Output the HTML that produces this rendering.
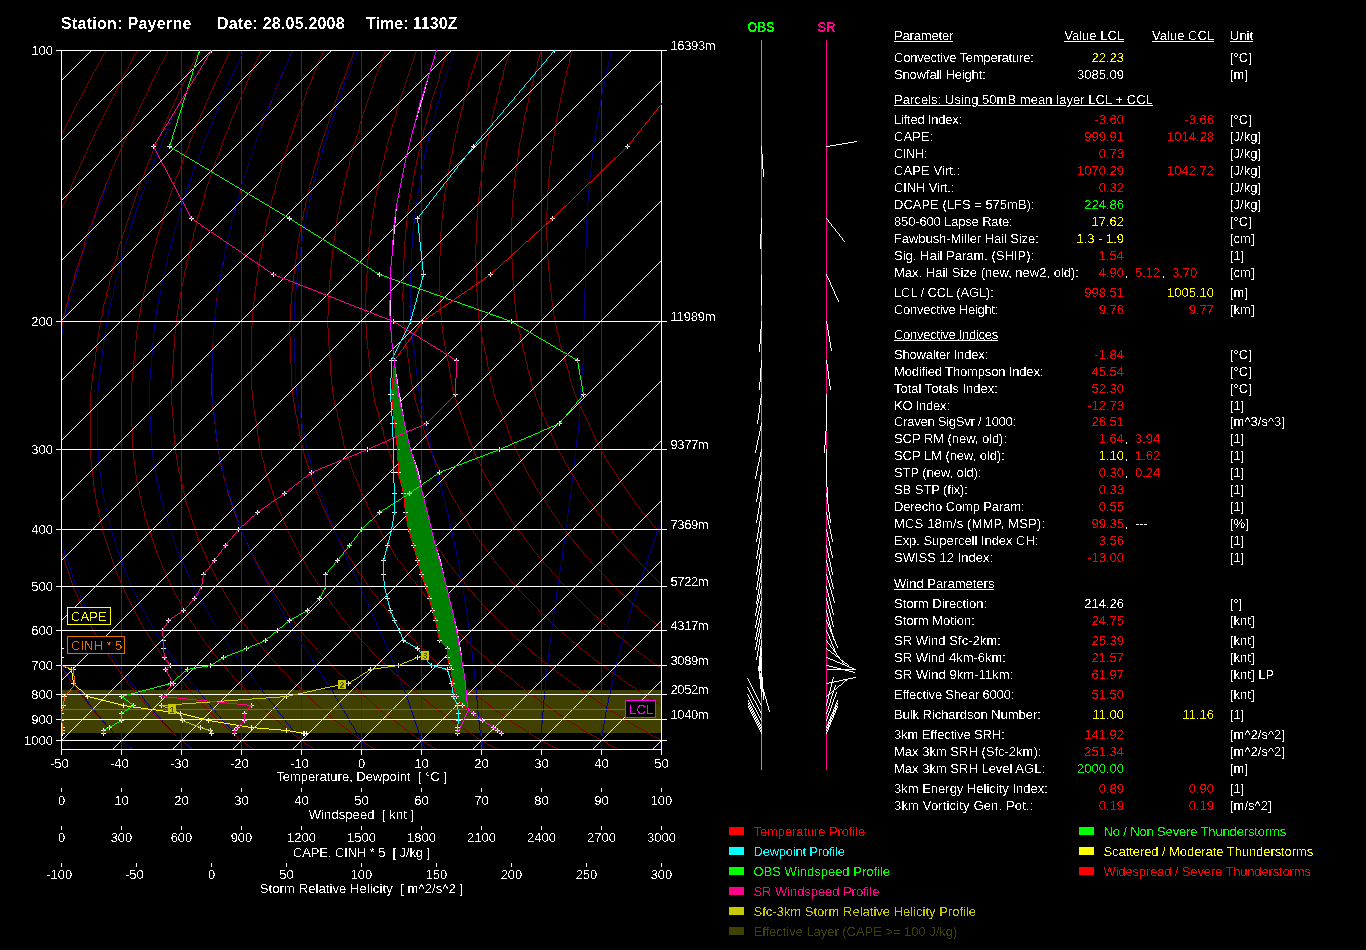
<!DOCTYPE html>
<html><head><meta charset="utf-8"><title>Sounding Payerne</title>
<style>
html,body{margin:0;padding:0;background:#000;}
body{width:1366px;height:950px;overflow:hidden;position:relative;}
svg{position:absolute;left:0;top:0;font-family:"Liberation Sans",sans-serif;font-size:13px;will-change:transform;}
</style></head><body>
<svg width="1366" height="950" viewBox="0 0 1366 950">
<defs><filter id="thr" x="0" y="0" width="100%" height="100%" filterUnits="userSpaceOnUse" color-interpolation-filters="sRGB"><feComponentTransfer><feFuncA type="discrete" tableValues="0 0 0 0 0 0 0 0 0 0 0 1 1 1 1 1 1 1 1 1"/></feComponentTransfer></filter></defs>
<defs><clipPath id="cp"><rect x="61" y="50" width="601" height="700"/></clipPath></defs>
<g clip-path="url(#cp)">
<rect x="61" y="690" width="601" height="43" fill="#404000" shape-rendering="crispEdges"/>
<line x1="121.5" y1="50.5" x2="121.5" y2="749.5" stroke="#005400" stroke-width="1" shape-rendering="crispEdges"/>
<line x1="181.5" y1="50.5" x2="181.5" y2="749.5" stroke="#005400" stroke-width="1" shape-rendering="crispEdges"/>
<line x1="241.5" y1="50.5" x2="241.5" y2="749.5" stroke="#005400" stroke-width="1" shape-rendering="crispEdges"/>
<line x1="301.5" y1="50.5" x2="301.5" y2="749.5" stroke="#005400" stroke-width="1" shape-rendering="crispEdges"/>
<line x1="361.5" y1="50.5" x2="361.5" y2="749.5" stroke="#005400" stroke-width="1" shape-rendering="crispEdges"/>
<line x1="421.5" y1="50.5" x2="421.5" y2="749.5" stroke="#005400" stroke-width="1" shape-rendering="crispEdges"/>
<line x1="481.5" y1="50.5" x2="481.5" y2="749.5" stroke="#005400" stroke-width="1" shape-rendering="crispEdges"/>
<line x1="541.5" y1="50.5" x2="541.5" y2="749.5" stroke="#005400" stroke-width="1" shape-rendering="crispEdges"/>
<line x1="601.5" y1="50.5" x2="601.5" y2="749.5" stroke="#005400" stroke-width="1" shape-rendering="crispEdges"/>
<path d="M61.5,134v2M61.5,740v1M62.5,132v2M62.5,741v1M63.5,130v2M63.5,742v1M64.5,128v2M64.5,743v1M65.5,126v2M65.5,744v1M66.5,124v2M66.5,745v1M67.5,122v2M67.5,746v1M68.5,120v2M68.5,747v1M69.5,118v2M69.5,747v1M70.5,116v2M70.5,748v1M71.5,114v2M71.5,749v1M72.5,112v2M73.5,110v2M74.5,108v2M75.5,106v2M76.5,104v2M77.5,102v2M78.5,101v1M79.5,99v2M80.5,97v2M81.5,95v2M82.5,93v2M83.5,91v2M84.5,89v2M85.5,87v2M86.5,85v2M87.5,83v2M88.5,81v2M89.5,80v1M90.5,78v2M91.5,76v2M92.5,74v2M93.5,72v2M94.5,71v1M95.5,69v2M96.5,67v2M97.5,65v2M98.5,63v2M99.5,62v1M100.5,60v2M101.5,58v2M102.5,56v2M103.5,54v2M104.5,53v1M105.5,51v2M106.5,50v1" stroke="#800000" shape-rendering="crispEdges"/>
<path d="M61.5,208v3M61.5,666v2M62.5,206v2M62.5,668v1M63.5,204v2M63.5,669v2M64.5,202v2M64.5,671v1M65.5,199v3M65.5,672v2M66.5,196v3M66.5,674v1M67.5,194v2M67.5,675v2M68.5,192v2M68.5,677v1M69.5,190v2M69.5,678v2M70.5,187v3M70.5,680v1M71.5,184v3M71.5,681v1M72.5,182v2M72.5,682v1M73.5,180v2M73.5,683v1M74.5,178v2M74.5,684v2M75.5,175v3M75.5,686v1M76.5,173v2M76.5,687v2M77.5,171v2M77.5,689v1M78.5,169v2M78.5,690v2M79.5,166v3M79.5,692v1M80.5,164v2M80.5,693v2M81.5,162v2M81.5,695v1M82.5,160v2M82.5,696v1M83.5,157v3M83.5,697v1M84.5,155v2M84.5,698v1M85.5,153v2M85.5,699v2M86.5,151v2M86.5,701v1M87.5,148v3M87.5,702v2M88.5,146v2M88.5,704v1M89.5,144v2M89.5,705v1M90.5,142v2M90.5,706v1M91.5,140v2M91.5,707v1M92.5,138v2M92.5,708v2M93.5,136v2M93.5,710v1M94.5,133v3M94.5,711v2M95.5,131v2M95.5,713v1M96.5,129v2M96.5,714v1M97.5,127v2M97.5,715v1M98.5,125v2M98.5,716v1M99.5,123v2M99.5,717v1M100.5,121v2M100.5,718v1M101.5,119v2M101.5,719v1M102.5,117v2M102.5,720v2M103.5,115v2M103.5,722v1M104.5,113v2M104.5,723v1M105.5,111v2M105.5,724v1M106.5,109v2M106.5,725v1M107.5,107v2M107.5,726v1M108.5,105v2M108.5,727v1M109.5,103v2M109.5,728v1M110.5,101v2M110.5,729v1M111.5,99v2M111.5,730v1M112.5,97v2M112.5,731v1M113.5,95v2M113.5,732v1M114.5,93v2M114.5,733v1M115.5,91v2M115.5,734v1M116.5,89v2M116.5,735v1M117.5,87v2M117.5,736v1M118.5,85v2M118.5,737v1M119.5,83v2M119.5,738v1M120.5,81v2M120.5,739v1M121.5,79v2M121.5,740v1M122.5,77v2M122.5,741v1M123.5,75v2M123.5,742v1M124.5,73v2M124.5,743v1M125.5,71v2M125.5,744v1M126.5,69v2M126.5,744v1M127.5,68v1M127.5,745v1M128.5,66v2M128.5,746v1M129.5,64v2M129.5,747v1M130.5,62v2M130.5,747v1M131.5,60v2M131.5,748v1M132.5,58v2M132.5,749v1M133.5,56v2M134.5,54v2M135.5,53v1M136.5,51v2M137.5,50v1" stroke="#800000" shape-rendering="crispEdges"/>
<path d="M61.5,325v6M61.5,547v6M62.5,319v6M62.5,553v3M63.5,316v3M63.5,556v3M64.5,313v3M64.5,559v3M65.5,307v6M65.5,562v3M66.5,304v3M66.5,565v3M67.5,301v3M67.5,568v3M68.5,295v6M68.5,571v3M69.5,292v3M69.5,574v3M70.5,289v3M70.5,577v3M71.5,286v3M71.5,580v3M72.5,283v3M72.5,583v3M73.5,280v3M73.5,586v3M74.5,274v6M74.5,589v2M75.5,271v3M75.5,591v2M76.5,268v3M76.5,593v2M77.5,265v3M77.5,595v3M78.5,262v3M78.5,598v3M79.5,259v3M79.5,601v2M80.5,256v3M80.5,603v2M81.5,253v3M81.5,605v2M82.5,250v3M82.5,607v3M83.5,247v3M83.5,610v2M84.5,241v6M84.5,612v2M85.5,238v3M85.5,614v2M86.5,235v3M86.5,616v2M87.5,232v3M87.5,618v2M88.5,229v3M88.5,620v2M89.5,227v2M89.5,622v2M90.5,225v2M90.5,624v2M91.5,223v2M91.5,626v2M92.5,220v3M92.5,628v2M93.5,217v3M93.5,630v2M94.5,214v3M94.5,632v1M95.5,211v3M95.5,633v2M96.5,208v3M96.5,635v2M97.5,205v3M97.5,637v2M98.5,202v3M98.5,639v2M99.5,199v3M99.5,641v1M100.5,197v2M100.5,642v2M101.5,195v2M101.5,644v1M102.5,193v2M102.5,645v2M103.5,190v3M103.5,647v1M104.5,187v3M104.5,648v2M105.5,184v3M105.5,650v1M106.5,182v2M106.5,651v2M107.5,180v2M107.5,653v1M108.5,178v2M108.5,654v2M109.5,175v3M109.5,656v1M110.5,172v3M110.5,657v2M111.5,169v3M111.5,659v1M112.5,167v2M112.5,660v2M113.5,165v2M113.5,662v1M114.5,163v2M114.5,663v2M115.5,160v3M115.5,665v1M116.5,158v2M116.5,666v2M117.5,156v2M117.5,668v1M118.5,154v2M118.5,669v2M119.5,151v3M119.5,671v1M120.5,149v2M120.5,672v2M121.5,147v2M121.5,674v1M122.5,145v2M122.5,675v2M123.5,142v3M123.5,677v1M124.5,140v2M124.5,678v1M125.5,138v2M125.5,679v1M126.5,136v2M126.5,680v1M127.5,133v3M127.5,681v2M128.5,131v2M128.5,683v1M129.5,129v2M129.5,684v2M130.5,127v2M130.5,686v1M131.5,124v3M131.5,687v1M132.5,122v2M132.5,688v1M133.5,120v2M133.5,689v1M134.5,118v2M134.5,690v2M135.5,116v2M135.5,692v1M136.5,114v2M136.5,693v1M137.5,112v2M137.5,694v1M138.5,109v3M138.5,695v1M139.5,107v2M139.5,696v2M140.5,105v2M140.5,698v1M141.5,103v2M141.5,699v1M142.5,101v2M142.5,700v1M143.5,99v2M143.5,701v1M144.5,97v2M144.5,702v2M145.5,95v2M145.5,704v1M146.5,93v2M146.5,705v1M147.5,91v2M147.5,706v1M148.5,88v3M148.5,707v1M149.5,86v2M149.5,708v2M150.5,84v2M150.5,710v1M151.5,82v2M151.5,711v1M152.5,80v2M152.5,712v1M153.5,78v2M153.5,713v1M154.5,76v2M154.5,714v1M155.5,74v2M155.5,715v1M156.5,72v2M156.5,716v1M157.5,70v2M157.5,717v1M158.5,68v2M158.5,718v1M159.5,66v2M159.5,719v1M160.5,65v1M160.5,720v1M161.5,63v2M161.5,721v1M162.5,61v2M162.5,722v1M163.5,59v2M163.5,723v1M164.5,57v2M164.5,724v1M165.5,55v2M165.5,725v1M166.5,53v2M166.5,726v1M167.5,51v2M167.5,727v1M168.5,50v1M168.5,728v1M169.5,729v1M170.5,730v1M171.5,731v1M172.5,732v1M173.5,733v1M174.5,734v1M175.5,735v1M176.5,735v1M177.5,736v1M178.5,737v1M179.5,738v1M180.5,739v1M181.5,740v1M182.5,741v1M183.5,741v1M184.5,742v1M185.5,743v1M186.5,744v1M187.5,744v1M188.5,745v1M189.5,746v1M190.5,747v1M191.5,748v1M192.5,749v1" stroke="#800000" shape-rendering="crispEdges"/>
<path d="M90.5,391v69M91.5,382v9M91.5,460v9M92.5,373v9M92.5,469v9M93.5,367v6M93.5,478v9M94.5,361v6M94.5,487v6M95.5,352v9M95.5,493v6M96.5,346v6M96.5,499v6M97.5,337v9M97.5,505v3M98.5,331v6M98.5,508v6M99.5,325v6M99.5,514v3M100.5,319v6M100.5,517v6M101.5,316v3M101.5,523v3M102.5,310v6M102.5,526v6M103.5,304v6M103.5,532v3M104.5,301v3M104.5,535v3M105.5,298v3M105.5,538v3M106.5,292v6M106.5,541v3M107.5,289v3M107.5,544v3M108.5,286v3M108.5,547v3M109.5,280v6M109.5,550v3M110.5,277v3M110.5,553v3M111.5,274v3M111.5,556v3M112.5,268v6M112.5,559v3M113.5,265v3M113.5,562v3M114.5,262v3M114.5,565v3M115.5,259v3M115.5,568v3M116.5,256v3M116.5,571v3M117.5,250v6M117.5,574v2M118.5,247v3M118.5,576v2M119.5,244v3M119.5,578v2M120.5,241v3M120.5,580v3M121.5,238v3M121.5,583v2M122.5,235v3M122.5,585v2M123.5,232v3M123.5,587v2M124.5,229v3M124.5,589v3M125.5,226v3M125.5,592v2M126.5,223v3M126.5,594v2M127.5,220v3M127.5,596v2M128.5,217v3M128.5,598v2M129.5,214v3M129.5,600v2M130.5,211v3M130.5,602v2M131.5,208v3M131.5,604v2M132.5,205v3M132.5,606v2M133.5,202v3M133.5,608v2M134.5,199v3M134.5,610v2M135.5,196v3M135.5,612v2M136.5,193v3M136.5,614v2M137.5,190v3M137.5,616v2M138.5,187v3M138.5,618v2M139.5,184v3M139.5,620v1M140.5,181v3M140.5,621v2M141.5,179v2M141.5,623v2M142.5,177v2M142.5,625v2M143.5,175v2M143.5,627v2M144.5,172v3M144.5,629v1M145.5,169v3M145.5,630v2M146.5,166v3M146.5,632v1M147.5,163v3M147.5,633v2M148.5,161v2M148.5,635v1M149.5,159v2M149.5,636v2M150.5,157v2M150.5,638v1M151.5,154v3M151.5,639v2M152.5,151v3M152.5,641v1M153.5,149v2M153.5,642v2M154.5,147v2M154.5,644v1M155.5,145v2M155.5,645v2M156.5,142v3M156.5,647v1M157.5,139v3M157.5,648v2M158.5,137v2M158.5,650v1M159.5,135v2M159.5,651v2M160.5,133v2M160.5,653v1M161.5,130v3M161.5,654v2M162.5,128v2M162.5,656v1M163.5,126v2M163.5,657v2M164.5,124v2M164.5,659v1M165.5,121v3M165.5,660v1M166.5,119v2M166.5,661v1M167.5,117v2M167.5,662v1M168.5,115v2M168.5,663v2M169.5,112v3M169.5,665v1M170.5,110v2M170.5,666v2M171.5,108v2M171.5,668v1M172.5,106v2M172.5,669v1M173.5,103v3M173.5,670v1M174.5,101v2M174.5,671v1M175.5,99v2M175.5,672v2M176.5,97v2M176.5,674v1M177.5,94v3M177.5,675v2M178.5,92v2M178.5,677v1M179.5,90v2M179.5,678v1M180.5,88v2M180.5,679v1M181.5,86v2M181.5,680v1M182.5,84v2M182.5,681v1M183.5,82v2M183.5,682v1M184.5,80v2M184.5,683v1M185.5,78v2M185.5,684v2M186.5,76v2M186.5,686v1M187.5,73v3M187.5,687v1M188.5,71v2M188.5,688v1M189.5,69v2M189.5,689v1M190.5,67v2M190.5,690v2M191.5,65v2M191.5,692v1M192.5,63v2M192.5,693v1M193.5,61v2M193.5,694v1M194.5,59v2M194.5,695v1M195.5,57v2M195.5,696v1M196.5,55v2M196.5,697v1M197.5,53v2M197.5,698v1M198.5,51v2M198.5,699v1M199.5,50v1M199.5,700v1M200.5,701v1M201.5,702v2M202.5,704v1M203.5,705v1M204.5,706v1M205.5,707v1M206.5,708v1M207.5,709v1M208.5,710v1M209.5,711v1M210.5,712v1M211.5,713v1M212.5,714v1M213.5,715v1M214.5,716v1M215.5,717v1M216.5,718v1M217.5,719v1M218.5,720v1M219.5,721v1M220.5,722v1M221.5,723v1M222.5,724v1M223.5,725v1M224.5,726v1M225.5,726v1M226.5,727v1M227.5,728v1M228.5,729v1M229.5,730v1M230.5,731v1M231.5,732v1M232.5,732v1M233.5,733v1M234.5,734v1M235.5,735v1M236.5,736v1M237.5,737v1M238.5,738v1M239.5,738v1M240.5,739v1M241.5,740v1M242.5,741v1M243.5,741v1M244.5,742v1M245.5,743v1M246.5,744v1M247.5,744v1M248.5,745v1M249.5,746v1M250.5,747v1M251.5,747v1M252.5,748v1M253.5,749v1" stroke="#800000" shape-rendering="crispEdges"/>
<path d="M131.5,382v45M132.5,370v12M132.5,427v24M133.5,361v9M133.5,451v9M134.5,352v9M134.5,460v6M135.5,340v12M135.5,466v9M136.5,331v9M136.5,475v6M137.5,325v6M137.5,481v6M138.5,319v6M138.5,487v3M139.5,313v6M139.5,490v6M140.5,307v6M140.5,496v3M141.5,301v6M141.5,499v6M142.5,298v3M142.5,505v3M143.5,292v6M143.5,508v3M144.5,289v3M144.5,511v6M145.5,283v6M145.5,517v3M146.5,280v3M146.5,520v3M147.5,274v6M147.5,523v3M148.5,271v3M148.5,526v3M149.5,268v3M149.5,529v3M150.5,262v6M150.5,532v3M151.5,259v3M151.5,535v3M152.5,253v6M152.5,538v3M153.5,250v3M153.5,541v3M154.5,247v3M154.5,544v3M155.5,244v3M155.5,547v3M156.5,238v6M156.5,550v3M157.5,235v3M157.5,553v3M158.5,232v3M158.5,556v2M159.5,229v3M159.5,558v2M160.5,226v3M160.5,560v2M161.5,223v3M161.5,562v3M162.5,217v6M162.5,565v3M163.5,214v3M163.5,568v2M164.5,211v3M164.5,570v2M165.5,208v3M165.5,572v2M166.5,205v3M166.5,574v3M167.5,202v3M167.5,577v2M168.5,199v3M168.5,579v2M169.5,196v3M169.5,581v2M170.5,193v3M170.5,583v2M171.5,190v3M171.5,585v2M172.5,187v3M172.5,587v2M173.5,184v3M173.5,589v2M174.5,181v3M174.5,591v2M175.5,178v3M175.5,593v2M176.5,176v2M176.5,595v2M177.5,174v2M177.5,597v2M178.5,172v2M178.5,599v1M179.5,169v3M179.5,600v2M180.5,166v3M180.5,602v2M181.5,163v3M181.5,604v2M182.5,160v3M182.5,606v2M183.5,157v3M183.5,608v1M184.5,154v3M184.5,609v2M185.5,152v2M185.5,611v1M186.5,150v2M186.5,612v2M187.5,148v2M187.5,614v2M188.5,145v3M188.5,616v2M189.5,142v3M189.5,618v2M190.5,139v3M190.5,620v1M191.5,137v2M191.5,621v2M192.5,135v2M192.5,623v1M193.5,133v2M193.5,624v2M194.5,130v3M194.5,626v1M195.5,127v3M195.5,627v2M196.5,124v3M196.5,629v1M197.5,122v2M197.5,630v2M198.5,120v2M198.5,632v1M199.5,118v2M199.5,633v2M200.5,115v3M200.5,635v1M201.5,113v2M201.5,636v2M202.5,111v2M202.5,638v1M203.5,109v2M203.5,639v2M204.5,106v3M204.5,641v1M205.5,103v3M205.5,642v2M206.5,101v2M206.5,644v1M207.5,99v2M207.5,645v1M208.5,97v2M208.5,646v1M209.5,94v3M209.5,647v1M210.5,92v2M210.5,648v2M211.5,90v2M211.5,650v1M212.5,88v2M212.5,651v2M213.5,85v3M213.5,653v1M214.5,83v2M214.5,654v1M215.5,81v2M215.5,655v1M216.5,79v2M216.5,656v1M217.5,77v2M217.5,657v2M218.5,75v2M218.5,659v1M219.5,73v2M219.5,660v1M220.5,70v3M220.5,661v1M221.5,68v2M221.5,662v1M222.5,66v2M222.5,663v2M223.5,64v2M223.5,665v1M224.5,62v2M224.5,666v1M225.5,60v2M225.5,667v1M226.5,58v2M226.5,668v1M227.5,55v3M227.5,669v2M228.5,53v2M228.5,671v1M229.5,51v2M229.5,672v1M230.5,50v1M230.5,673v1M231.5,674v1M232.5,675v2M233.5,677v1M234.5,678v1M235.5,679v1M236.5,680v1M237.5,681v1M238.5,682v1M239.5,683v1M240.5,684v1M241.5,685v1M242.5,686v1M243.5,687v1M244.5,688v1M245.5,689v1M246.5,690v1M247.5,691v1M248.5,692v1M249.5,693v2M250.5,695v1M251.5,696v1M252.5,697v1M253.5,698v1M254.5,699v1M255.5,700v1M256.5,701v1M257.5,702v1M258.5,703v1M259.5,704v1M260.5,705v1M261.5,706v1M262.5,707v1M263.5,708v1M264.5,709v1M265.5,710v1M266.5,711v1M267.5,711v1M268.5,712v1M269.5,713v1M270.5,714v1M271.5,715v1M272.5,716v1M273.5,717v1M274.5,718v1M275.5,719v1M276.5,720v1M277.5,720v1M278.5,721v1M279.5,722v1M280.5,723v1M281.5,724v1M282.5,725v1M283.5,726v1M284.5,726v1M285.5,727v1M286.5,728v1M287.5,729v1M288.5,730v1M289.5,731v1M290.5,732v1M291.5,732v1M292.5,733v1M293.5,734v1M294.5,735v1M295.5,735v1M296.5,736v1M297.5,737v1M298.5,738v1M299.5,738v1M300.5,739v1M301.5,740v1M302.5,741v1M303.5,741v1M304.5,742v1M305.5,743v1M306.5,744v1M307.5,744v1M308.5,745v1M309.5,745v1M310.5,746v1M311.5,747v1M312.5,747v1M313.5,748v1M314.5,749v1" stroke="#800000" shape-rendering="crispEdges"/>
<path d="M171.5,379v27M172.5,364v15M172.5,406v12M173.5,349v15M173.5,418v15M174.5,334v15M174.5,433v12M175.5,325v9M175.5,445v9M176.5,316v9M176.5,454v6M177.5,310v6M177.5,460v6M178.5,304v6M178.5,466v6M179.5,298v6M179.5,472v3M180.5,292v6M180.5,475v6M181.5,286v6M181.5,481v3M182.5,283v3M182.5,484v6M183.5,277v6M183.5,490v3M184.5,271v6M184.5,493v3M185.5,268v3M185.5,496v6M186.5,262v6M186.5,502v3M187.5,259v3M187.5,505v3M188.5,253v6M188.5,508v3M189.5,250v3M189.5,511v3M190.5,244v6M190.5,514v3M191.5,241v3M191.5,517v3M192.5,238v3M192.5,520v3M193.5,232v6M193.5,523v3M194.5,229v3M194.5,526v3M195.5,226v3M195.5,529v3M196.5,220v6M196.5,532v3M197.5,217v3M197.5,535v3M198.5,214v3M198.5,538v3M199.5,211v3M199.5,541v2M200.5,208v3M200.5,543v2M201.5,205v3M201.5,545v2M202.5,202v3M202.5,547v3M203.5,199v3M203.5,550v2M204.5,193v6M204.5,552v2M205.5,190v3M205.5,554v2M206.5,187v3M206.5,556v3M207.5,184v3M207.5,559v2M208.5,181v3M208.5,561v2M209.5,178v3M209.5,563v2M210.5,175v3M210.5,565v2M211.5,172v3M211.5,567v2M212.5,169v3M212.5,569v2M213.5,166v3M213.5,571v2M214.5,163v3M214.5,573v2M215.5,160v3M215.5,575v2M216.5,158v2M216.5,577v2M217.5,156v2M217.5,579v2M218.5,154v2M218.5,581v2M219.5,151v3M219.5,583v2M220.5,148v3M220.5,585v2M221.5,145v3M221.5,587v1M222.5,142v3M222.5,588v2M223.5,139v3M223.5,590v2M224.5,136v3M224.5,592v2M225.5,134v2M225.5,594v2M226.5,132v2M226.5,596v1M227.5,130v2M227.5,597v2M228.5,127v3M228.5,599v1M229.5,124v3M229.5,600v2M230.5,121v3M230.5,602v1M231.5,118v3M231.5,603v2M232.5,116v2M232.5,605v1M233.5,114v2M233.5,606v2M234.5,112v2M234.5,608v2M235.5,109v3M235.5,610v2M236.5,106v3M236.5,612v2M237.5,104v2M237.5,614v1M238.5,102v2M238.5,615v2M239.5,100v2M239.5,617v1M240.5,97v3M240.5,618v2M241.5,94v3M241.5,620v1M242.5,92v2M242.5,621v2M243.5,90v2M243.5,623v1M244.5,88v2M244.5,624v1M245.5,85v3M245.5,625v1M246.5,82v3M246.5,626v1M247.5,80v2M247.5,627v2M248.5,78v2M248.5,629v1M249.5,76v2M249.5,630v2M250.5,73v3M250.5,632v1M251.5,71v2M251.5,633v2M252.5,69v2M252.5,635v1M253.5,67v2M253.5,636v2M254.5,64v3M254.5,638v1M255.5,62v2M255.5,639v1M256.5,60v2M256.5,640v1M257.5,58v2M257.5,641v1M258.5,56v2M258.5,642v2M259.5,54v2M259.5,644v1M260.5,52v2M260.5,645v1M261.5,50v2M261.5,646v1M262.5,647v1M263.5,648v2M264.5,650v1M265.5,651v1M266.5,652v1M267.5,653v1M268.5,654v2M269.5,656v1M270.5,657v1M271.5,658v1M272.5,659v1M273.5,660v1M274.5,661v1M275.5,662v1M276.5,663v2M277.5,665v1M278.5,666v1M279.5,667v1M280.5,668v1M281.5,669v1M282.5,670v1M283.5,671v1M284.5,672v1M285.5,673v1M286.5,674v1M287.5,675v1M288.5,676v1M289.5,677v1M290.5,678v2M291.5,680v1M292.5,681v1M293.5,682v1M294.5,683v1M295.5,684v1M296.5,684v1M297.5,685v1M298.5,686v1M299.5,687v1M300.5,688v1M301.5,689v1M302.5,690v1M303.5,691v1M304.5,692v1M305.5,693v1M306.5,694v1M307.5,695v1M308.5,696v1M309.5,697v1M310.5,698v1M311.5,699v1M312.5,700v1M313.5,701v1M314.5,702v1M315.5,703v1M316.5,704v1M317.5,705v1M318.5,705v1M319.5,706v1M320.5,707v1M321.5,708v1M322.5,709v1M323.5,710v1M324.5,711v1M325.5,712v1M326.5,713v1M327.5,714v1M328.5,714v1M329.5,715v1M330.5,716v1M331.5,717v1M332.5,718v1M333.5,719v1M334.5,720v1M335.5,720v1M336.5,721v1M337.5,722v1M338.5,723v1M339.5,723v1M340.5,724v1M341.5,725v1M342.5,726v1M343.5,726v1M344.5,727v1M345.5,728v1M346.5,729v1M347.5,729v1M348.5,730v1M349.5,731v1M350.5,732v1M351.5,732v1M352.5,733v1M353.5,734v1M354.5,735v1M355.5,735v1M356.5,736v1M357.5,737v1M358.5,738v1M359.5,738v1M360.5,739v1M361.5,740v1M362.5,741v1M363.5,741v1M364.5,742v1M365.5,743v1M366.5,744v1M367.5,744v1M368.5,745v1M369.5,745v1M370.5,746v1M371.5,747v1M372.5,747v1M373.5,748v1M374.5,748v1M375.5,749v1" stroke="#800000" shape-rendering="crispEdges"/>
<path d="M211.5,373v24M212.5,343v30M212.5,397v12M213.5,325v18M213.5,409v6M214.5,316v9M214.5,415v9M215.5,307v9M215.5,424v9M216.5,298v9M216.5,433v9M217.5,292v6M217.5,442v6M218.5,286v6M218.5,448v6M219.5,280v6M219.5,454v6M220.5,274v6M220.5,460v6M221.5,268v6M221.5,466v3M222.5,265v3M222.5,469v3M223.5,259v6M223.5,472v6M224.5,253v6M224.5,478v3M225.5,247v6M225.5,481v3M226.5,244v3M226.5,484v3M227.5,238v6M227.5,487v6M228.5,235v3M228.5,493v3M229.5,229v6M229.5,496v3M230.5,226v3M230.5,499v3M231.5,220v6M231.5,502v3M232.5,217v3M232.5,505v3M233.5,214v3M233.5,508v3M234.5,211v3M234.5,511v3M235.5,205v6M235.5,514v3M236.5,202v3M236.5,517v2M237.5,199v3M237.5,519v2M238.5,196v3M238.5,521v2M239.5,193v3M239.5,523v3M240.5,187v6M240.5,526v3M241.5,184v3M241.5,529v3M242.5,181v3M242.5,532v2M243.5,178v3M243.5,534v2M244.5,175v3M244.5,536v2M245.5,172v3M245.5,538v3M246.5,169v3M246.5,541v2M247.5,166v3M247.5,543v2M248.5,163v3M248.5,545v2M249.5,160v3M249.5,547v2M250.5,157v3M250.5,549v2M251.5,154v3M251.5,551v2M252.5,151v3M252.5,553v2M253.5,148v3M253.5,555v2M254.5,145v3M254.5,557v2M255.5,142v3M255.5,559v2M256.5,139v3M256.5,561v2M257.5,136v3M257.5,563v2M258.5,133v3M258.5,565v2M259.5,130v3M259.5,567v2M260.5,128v2M260.5,569v1M261.5,126v2M261.5,570v2M262.5,124v2M262.5,572v2M263.5,121v3M263.5,574v2M264.5,118v3M264.5,576v2M265.5,115v3M265.5,578v1M266.5,112v3M266.5,579v2M267.5,109v3M267.5,581v1M268.5,107v2M268.5,582v2M269.5,105v2M269.5,584v2M270.5,103v2M270.5,586v2M271.5,100v3M271.5,588v2M272.5,97v3M272.5,590v1M273.5,94v3M273.5,591v2M274.5,91v3M274.5,593v1M275.5,89v2M275.5,594v2M276.5,87v2M276.5,596v1M277.5,85v2M277.5,597v2M278.5,82v3M278.5,599v1M279.5,79v3M279.5,600v2M280.5,77v2M280.5,602v1M281.5,75v2M281.5,603v2M282.5,73v2M282.5,605v1M283.5,70v3M283.5,606v2M284.5,67v3M284.5,608v1M285.5,65v2M285.5,609v2M286.5,63v2M286.5,611v1M287.5,61v2M287.5,612v2M288.5,58v3M288.5,614v1M289.5,56v2M289.5,615v2M290.5,54v2M290.5,617v1M291.5,52v2M291.5,618v1M292.5,50v2M292.5,619v1M293.5,620v1M294.5,621v2M295.5,623v1M296.5,624v2M297.5,626v1M298.5,627v1M299.5,628v1M300.5,629v1M301.5,630v2M302.5,632v1M303.5,633v2M304.5,635v1M305.5,636v1M306.5,637v1M307.5,638v1M308.5,639v2M309.5,641v1M310.5,642v1M311.5,643v1M312.5,644v1M313.5,645v1M314.5,646v1M315.5,647v1M316.5,648v2M317.5,650v1M318.5,651v1M319.5,652v1M320.5,653v1M321.5,654v1M322.5,655v1M323.5,656v1M324.5,657v1M325.5,658v1M326.5,659v1M327.5,660v1M328.5,661v1M329.5,662v1M330.5,663v2M331.5,665v1M332.5,666v1M333.5,667v1M334.5,668v1M335.5,669v1M336.5,670v1M337.5,671v1M338.5,672v1M339.5,673v1M340.5,674v1M341.5,675v1M342.5,675v1M343.5,676v1M344.5,677v1M345.5,678v1M346.5,679v1M347.5,680v1M348.5,681v1M349.5,682v1M350.5,683v1M351.5,684v1M352.5,685v1M353.5,686v1M354.5,687v1M355.5,687v1M356.5,688v1M357.5,689v1M358.5,690v1M359.5,691v1M360.5,692v1M361.5,693v1M362.5,694v1M363.5,695v1M364.5,696v1M365.5,696v1M366.5,697v1M367.5,698v1M368.5,699v1M369.5,700v1M370.5,701v1M371.5,702v1M372.5,703v1M373.5,704v1M374.5,705v1M375.5,705v1M376.5,706v1M377.5,707v1M378.5,708v1M379.5,709v1M380.5,710v1M381.5,711v1M382.5,711v1M383.5,712v1M384.5,713v1M385.5,714v1M386.5,714v1M387.5,715v1M388.5,716v1M389.5,717v1M390.5,717v1M391.5,718v1M392.5,719v1M393.5,720v1M394.5,720v1M395.5,721v1M396.5,722v1M397.5,723v1M398.5,723v1M399.5,724v1M400.5,725v1M401.5,726v1M402.5,726v1M403.5,727v1M404.5,728v1M405.5,729v1M406.5,729v1M407.5,730v1M408.5,731v1M409.5,732v1M410.5,732v1M411.5,733v1M412.5,734v1M413.5,735v1M414.5,735v1M415.5,736v1M416.5,737v1M417.5,738v1M418.5,738v1M419.5,739v1M420.5,739v1M421.5,740v1M422.5,741v1M423.5,741v1M424.5,742v1M425.5,742v1M426.5,743v1M427.5,744v1M428.5,744v1M429.5,745v1M430.5,745v1M431.5,746v1M432.5,747v1M433.5,747v1M434.5,748v1M435.5,748v1M436.5,749v1" stroke="#800000" shape-rendering="crispEdges"/>
<path d="M251.5,325v66M252.5,310v15M252.5,391v9M253.5,301v9M253.5,400v9M254.5,292v9M254.5,409v6M255.5,286v6M255.5,415v6M256.5,277v9M256.5,421v6M257.5,271v6M257.5,427v9M258.5,265v6M258.5,436v6M259.5,259v6M259.5,442v6M260.5,253v6M260.5,448v3M261.5,247v6M261.5,451v6M262.5,241v6M262.5,457v3M263.5,235v6M263.5,460v3M264.5,232v3M264.5,463v6M265.5,226v6M265.5,469v3M266.5,220v6M266.5,472v3M267.5,217v3M267.5,475v3M268.5,214v3M268.5,478v3M269.5,208v6M269.5,481v3M270.5,205v3M270.5,484v3M271.5,199v6M271.5,487v3M272.5,196v3M272.5,490v3M273.5,193v3M273.5,493v3M274.5,190v3M274.5,496v3M275.5,184v6M275.5,499v3M276.5,181v3M276.5,502v3M277.5,178v3M277.5,505v3M278.5,175v3M278.5,508v2M279.5,172v3M279.5,510v2M280.5,169v3M280.5,512v2M281.5,163v6M281.5,514v3M282.5,160v3M282.5,517v3M283.5,157v3M283.5,520v2M284.5,154v3M284.5,522v2M285.5,151v3M285.5,524v2M286.5,148v3M286.5,526v3M287.5,145v3M287.5,529v2M288.5,142v3M288.5,531v2M289.5,139v3M289.5,533v2M290.5,136v3M290.5,535v2M291.5,133v3M291.5,537v2M292.5,130v3M292.5,539v2M293.5,127v3M293.5,541v2M294.5,124v3M294.5,543v2M295.5,121v3M295.5,545v2M296.5,118v3M296.5,547v2M297.5,115v3M297.5,549v2M298.5,113v2M298.5,551v2M299.5,111v2M299.5,553v2M300.5,109v2M300.5,555v2M301.5,106v3M301.5,557v1M302.5,103v3M302.5,558v2M303.5,100v3M303.5,560v1M304.5,97v3M304.5,561v2M305.5,94v3M305.5,563v2M306.5,91v3M306.5,565v2M307.5,88v3M307.5,567v2M308.5,86v2M308.5,569v1M309.5,84v2M309.5,570v2M310.5,82v2M310.5,572v1M311.5,79v3M311.5,573v2M312.5,76v3M312.5,575v1M313.5,73v3M313.5,576v2M314.5,71v2M314.5,578v1M315.5,69v2M315.5,579v2M316.5,67v2M316.5,581v1M317.5,64v3M317.5,582v2M318.5,61v3M318.5,584v1M319.5,59v2M319.5,585v2M320.5,57v2M320.5,587v1M321.5,55v2M321.5,588v2M322.5,52v3M322.5,590v1M323.5,50v2M323.5,591v2M324.5,593v1M325.5,594v2M326.5,596v1M327.5,597v2M328.5,599v1M329.5,600v2M330.5,602v1M331.5,603v2M332.5,605v1M333.5,606v1M334.5,607v1M335.5,608v1M336.5,609v2M337.5,611v1M338.5,612v2M339.5,614v1M340.5,615v2M341.5,617v1M342.5,618v1M343.5,619v1M344.5,620v1M345.5,621v2M346.5,623v1M347.5,624v1M348.5,625v1M349.5,626v1M350.5,627v2M351.5,629v1M352.5,630v1M353.5,631v1M354.5,632v1M355.5,633v1M356.5,634v1M357.5,635v1M358.5,636v2M359.5,638v1M360.5,639v1M361.5,640v1M362.5,641v1M363.5,642v1M364.5,643v1M365.5,644v1M366.5,645v1M367.5,646v1M368.5,647v1M369.5,648v2M370.5,650v1M371.5,651v1M372.5,652v1M373.5,653v1M374.5,654v1M375.5,655v1M376.5,656v1M377.5,657v1M378.5,658v1M379.5,659v1M380.5,660v1M381.5,661v1M382.5,662v1M383.5,663v1M384.5,663v1M385.5,664v1M386.5,665v1M387.5,666v1M388.5,667v1M389.5,668v1M390.5,669v1M391.5,670v1M392.5,671v1M393.5,672v1M394.5,673v1M395.5,674v1M396.5,675v1M397.5,675v1M398.5,676v1M399.5,677v1M400.5,678v1M401.5,679v1M402.5,680v1M403.5,681v1M404.5,682v1M405.5,683v1M406.5,684v1M407.5,684v1M408.5,685v1M409.5,686v1M410.5,687v1M411.5,688v1M412.5,689v1M413.5,690v1M414.5,690v1M415.5,691v1M416.5,692v1M417.5,693v1M418.5,693v1M419.5,694v1M420.5,695v1M421.5,696v1M422.5,697v1M423.5,698v1M424.5,699v1M425.5,699v1M426.5,700v1M427.5,701v1M428.5,702v1M429.5,703v1M430.5,704v1M431.5,705v1M432.5,705v1M433.5,706v1M434.5,707v1M435.5,708v1M436.5,708v1M437.5,709v1M438.5,710v1M439.5,711v1M440.5,711v1M441.5,712v1M442.5,713v1M443.5,714v1M444.5,714v1M445.5,715v1M446.5,716v1M447.5,717v1M448.5,717v1M449.5,718v1M450.5,719v1M451.5,720v1M452.5,720v1M453.5,721v1M454.5,722v1M455.5,723v1M456.5,723v1M457.5,724v1M458.5,725v1M459.5,726v1M460.5,726v1M461.5,727v1M462.5,727v1M463.5,728v1M464.5,729v1M465.5,729v1M466.5,730v1M467.5,731v1M468.5,732v1M469.5,732v1M470.5,733v1M471.5,733v1M472.5,734v1M473.5,735v1M474.5,735v1M475.5,736v1M476.5,737v1M477.5,738v1M478.5,738v1M479.5,739v1M480.5,739v1M481.5,740v1M482.5,741v1M483.5,741v1M484.5,742v1M485.5,742v1M486.5,743v1M487.5,744v1M488.5,744v1M489.5,745v1M490.5,745v1M491.5,746v1M492.5,746v1M493.5,747v1M494.5,747v1M495.5,748v1M496.5,748v1M497.5,749v1" stroke="#800000" shape-rendering="crispEdges"/>
<path d="M289.5,322v15M290.5,304v18M290.5,337v27M291.5,292v12M291.5,364v24M292.5,283v9M292.5,388v9M293.5,274v9M293.5,397v6M294.5,265v9M294.5,403v6M295.5,259v6M295.5,409v6M296.5,250v9M296.5,415v3M297.5,244v6M297.5,418v6M298.5,238v6M298.5,424v6M299.5,232v6M299.5,430v6M300.5,226v6M300.5,436v3M301.5,220v6M301.5,439v6M302.5,217v3M302.5,445v3M303.5,211v6M303.5,448v6M304.5,208v3M304.5,454v3M305.5,202v6M305.5,457v3M306.5,199v3M306.5,460v3M307.5,193v6M307.5,463v3M308.5,190v3M308.5,466v3M309.5,184v6M309.5,469v3M310.5,181v3M310.5,472v3M311.5,178v3M311.5,475v3M312.5,175v3M312.5,478v3M313.5,169v6M313.5,481v3M314.5,166v3M314.5,484v3M315.5,163v3M315.5,487v3M316.5,160v3M316.5,490v3M317.5,157v3M317.5,493v2M318.5,151v6M318.5,495v2M319.5,148v3M319.5,497v2M320.5,145v3M320.5,499v3M321.5,142v3M321.5,502v3M322.5,139v3M322.5,505v2M323.5,136v3M323.5,507v2M324.5,133v3M324.5,509v2M325.5,130v3M325.5,511v3M326.5,127v3M326.5,514v2M327.5,124v3M327.5,516v2M328.5,121v3M328.5,518v2M329.5,118v3M329.5,520v2M330.5,115v3M330.5,522v2M331.5,112v3M331.5,524v2M332.5,109v3M332.5,526v2M333.5,106v3M333.5,528v2M334.5,103v3M334.5,530v2M335.5,100v3M335.5,532v2M336.5,97v3M336.5,534v2M337.5,94v3M337.5,536v2M338.5,91v3M338.5,538v2M339.5,88v3M339.5,540v2M340.5,85v3M340.5,542v1M341.5,83v2M341.5,543v2M342.5,81v2M342.5,545v2M343.5,79v2M343.5,547v2M344.5,76v3M344.5,549v2M345.5,73v3M345.5,551v1M346.5,70v3M346.5,552v2M347.5,67v3M347.5,554v1M348.5,64v3M348.5,555v2M349.5,62v2M349.5,557v1M350.5,60v2M350.5,558v2M351.5,58v2M351.5,560v1M352.5,55v3M352.5,561v2M353.5,52v3M353.5,563v1M354.5,50v2M354.5,564v2M355.5,566v2M356.5,568v2M357.5,570v2M358.5,572v1M359.5,573v1M360.5,574v1M361.5,575v1M362.5,576v2M363.5,578v1M364.5,579v2M365.5,581v1M366.5,582v2M367.5,584v1M368.5,585v2M369.5,587v1M370.5,588v2M371.5,590v1M372.5,591v2M373.5,593v1M374.5,594v1M375.5,595v1M376.5,596v1M377.5,597v2M378.5,599v1M379.5,600v2M380.5,602v1M381.5,603v1M382.5,604v1M383.5,605v1M384.5,606v2M385.5,608v1M386.5,609v2M387.5,611v1M388.5,612v1M389.5,613v1M390.5,614v1M391.5,615v2M392.5,617v1M393.5,618v1M394.5,619v1M395.5,620v1M396.5,621v1M397.5,622v1M398.5,623v1M399.5,624v2M400.5,626v1M401.5,627v1M402.5,628v1M403.5,629v1M404.5,630v1M405.5,631v1M406.5,632v1M407.5,633v1M408.5,634v1M409.5,635v1M410.5,636v1M411.5,637v1M412.5,638v1M413.5,639v1M414.5,640v1M415.5,641v1M416.5,642v2M417.5,644v1M418.5,645v1M419.5,645v1M420.5,646v1M421.5,647v1M422.5,648v1M423.5,649v1M424.5,650v1M425.5,651v1M426.5,652v1M427.5,653v1M428.5,654v1M429.5,655v1M430.5,656v1M431.5,657v1M432.5,658v1M433.5,659v1M434.5,660v1M435.5,661v1M436.5,662v1M437.5,663v1M438.5,663v1M439.5,664v1M440.5,665v1M441.5,666v1M442.5,667v1M443.5,668v1M444.5,669v1M445.5,669v1M446.5,670v1M447.5,671v1M448.5,672v1M449.5,673v1M450.5,674v1M451.5,675v1M452.5,675v1M453.5,676v1M454.5,677v1M455.5,678v1M456.5,679v1M457.5,680v1M458.5,681v1M459.5,681v1M460.5,682v1M461.5,683v1M462.5,684v1M463.5,684v1M464.5,685v1M465.5,686v1M466.5,687v1M467.5,688v1M468.5,689v1M469.5,690v1M470.5,690v1M471.5,691v1M472.5,692v1M473.5,693v1M474.5,693v1M475.5,694v1M476.5,695v1M477.5,696v1M478.5,696v1M479.5,697v1M480.5,698v1M481.5,699v1M482.5,699v1M483.5,700v1M484.5,701v1M485.5,702v1M486.5,702v1M487.5,703v1M488.5,704v1M489.5,705v1M490.5,706v1M491.5,707v1M492.5,708v1M493.5,708v1M494.5,709v1M495.5,710v1M496.5,711v1M497.5,711v1M498.5,712v1M499.5,712v1M500.5,713v1M501.5,714v1M502.5,714v1M503.5,715v1M504.5,716v1M505.5,717v1M506.5,717v1M507.5,718v1M508.5,719v1M509.5,720v1M510.5,720v1M511.5,721v1M512.5,722v1M513.5,723v1M514.5,723v1M515.5,724v1M516.5,724v1M517.5,725v1M518.5,726v1M519.5,726v1M520.5,727v1M521.5,727v1M522.5,728v1M523.5,729v1M524.5,729v1M525.5,730v1M526.5,731v1M527.5,732v1M528.5,732v1M529.5,733v1M530.5,733v1M531.5,734v1M532.5,735v1M533.5,735v1M534.5,736v1M535.5,736v1M536.5,737v1M537.5,738v1M538.5,738v1M539.5,739v1M540.5,739v1M541.5,740v1M542.5,741v1M543.5,741v1M544.5,742v1M545.5,742v1M546.5,743v1M547.5,743v1M548.5,744v1M549.5,744v1M550.5,745v1M551.5,745v1M552.5,746v1M553.5,746v1M554.5,747v1M555.5,747v1M556.5,748v1M557.5,748v1M558.5,749v1" stroke="#800000" shape-rendering="crispEdges"/>
<path d="M327.5,316v12M328.5,292v24M328.5,328v18M329.5,280v12M329.5,346v12M330.5,268v12M330.5,358v18M331.5,259v9M331.5,376v9M332.5,250v9M332.5,385v9M333.5,241v9M333.5,394v6M334.5,235v6M334.5,400v6M335.5,226v9M335.5,406v3M336.5,220v6M336.5,409v3M337.5,214v6M337.5,412v6M338.5,211v3M338.5,418v3M339.5,205v6M339.5,421v6M340.5,199v6M340.5,427v3M341.5,196v3M341.5,430v6M342.5,190v6M342.5,436v3M343.5,187v3M343.5,439v6M344.5,181v6M344.5,445v3M345.5,178v3M345.5,448v3M346.5,172v6M346.5,451v3M347.5,169v3M347.5,454v3M348.5,166v3M348.5,457v3M349.5,160v6M349.5,460v3M350.5,157v3M350.5,463v3M351.5,154v3M351.5,466v3M352.5,151v3M352.5,469v3M353.5,145v6M353.5,472v3M354.5,142v3M354.5,475v2M355.5,139v3M355.5,477v2M356.5,136v3M356.5,479v2M357.5,133v3M357.5,481v3M358.5,130v3M358.5,484v3M359.5,124v6M359.5,487v2M360.5,121v3M360.5,489v2M361.5,118v3M361.5,491v2M362.5,115v3M362.5,493v3M363.5,112v3M363.5,496v2M364.5,109v3M364.5,498v2M365.5,106v3M365.5,500v2M366.5,103v3M366.5,502v3M367.5,100v3M367.5,505v2M368.5,97v3M368.5,507v2M369.5,94v3M369.5,509v2M370.5,91v3M370.5,511v2M371.5,88v3M371.5,513v2M372.5,85v3M372.5,515v2M373.5,82v3M373.5,517v2M374.5,79v3M374.5,519v2M375.5,76v3M375.5,521v1M376.5,73v3M376.5,522v2M377.5,71v2M377.5,524v2M378.5,69v2M378.5,526v2M379.5,67v2M379.5,528v2M380.5,64v3M380.5,530v2M381.5,61v3M381.5,532v2M382.5,58v3M382.5,534v2M383.5,55v3M383.5,536v1M384.5,52v3M384.5,537v2M385.5,50v2M385.5,539v1M386.5,540v2M387.5,542v1M388.5,543v2M389.5,545v1M390.5,546v2M391.5,548v2M392.5,550v2M393.5,552v2M394.5,554v1M395.5,555v2M396.5,557v1M397.5,558v2M398.5,560v1M399.5,561v1M400.5,562v1M401.5,563v1M402.5,564v2M403.5,566v1M404.5,567v2M405.5,569v1M406.5,570v2M407.5,572v1M408.5,573v2M409.5,575v1M410.5,576v2M411.5,578v1M412.5,579v1M413.5,580v1M414.5,581v1M415.5,582v2M416.5,584v1M417.5,585v2M418.5,587v1M419.5,588v1M420.5,589v1M421.5,590v1M422.5,591v2M423.5,593v1M424.5,594v2M425.5,596v1M426.5,597v1M427.5,598v1M428.5,599v1M429.5,600v2M430.5,602v1M431.5,603v1M432.5,604v1M433.5,605v1M434.5,606v1M435.5,607v1M436.5,608v1M437.5,609v2M438.5,611v1M439.5,612v1M440.5,613v1M441.5,614v1M442.5,615v1M443.5,616v1M444.5,617v1M445.5,618v2M446.5,620v1M447.5,621v1M448.5,622v1M449.5,623v1M450.5,624v1M451.5,625v1M452.5,626v1M453.5,627v1M454.5,628v1M455.5,629v1M456.5,630v1M457.5,631v1M458.5,632v1M459.5,633v1M460.5,634v1M461.5,635v1M462.5,636v1M463.5,637v1M464.5,638v1M465.5,639v1M466.5,640v1M467.5,641v1M468.5,642v1M469.5,643v1M470.5,644v1M471.5,645v1M472.5,646v1M473.5,647v1M474.5,648v1M475.5,648v1M476.5,649v1M477.5,650v1M478.5,651v1M479.5,652v1M480.5,653v1M481.5,654v1M482.5,654v1M483.5,655v1M484.5,656v1M485.5,657v1M486.5,658v1M487.5,659v1M488.5,660v1M489.5,661v1M490.5,662v1M491.5,663v1M492.5,663v1M493.5,664v1M494.5,665v1M495.5,666v1M496.5,666v1M497.5,667v1M498.5,668v1M499.5,669v1M500.5,670v1M501.5,671v1M502.5,672v1M503.5,672v1M504.5,673v1M505.5,674v1M506.5,675v1M507.5,675v1M508.5,676v1M509.5,677v1M510.5,678v1M511.5,678v1M512.5,679v1M513.5,680v1M514.5,681v1M515.5,682v1M516.5,683v1M517.5,684v1M518.5,684v1M519.5,685v1M520.5,686v1M521.5,687v1M522.5,687v1M523.5,688v1M524.5,689v1M525.5,690v1M526.5,690v1M527.5,691v1M528.5,692v1M529.5,693v1M530.5,693v1M531.5,694v1M532.5,695v1M533.5,696v1M534.5,696v1M535.5,697v1M536.5,698v1M537.5,699v1M538.5,699v1M539.5,700v1M540.5,701v1M541.5,702v1M542.5,702v1M543.5,703v1M544.5,703v1M545.5,704v1M546.5,705v1M547.5,705v1M548.5,706v1M549.5,707v1M550.5,708v1M551.5,708v1M552.5,709v1M553.5,710v1M554.5,711v1M555.5,711v1M556.5,712v1M557.5,713v1M558.5,714v1M559.5,714v1M560.5,715v1M561.5,715v1M562.5,716v1M563.5,717v1M564.5,717v1M565.5,718v1M566.5,719v1M567.5,720v1M568.5,720v1M569.5,721v1M570.5,721v1M571.5,722v1M572.5,723v1M573.5,723v1M574.5,724v1M575.5,724v1M576.5,725v1M577.5,726v1M578.5,726v1M579.5,727v1M580.5,728v1M581.5,729v1M582.5,729v1M583.5,730v1M584.5,730v1M585.5,731v1M586.5,732v1M587.5,732v1M588.5,733v1M589.5,733v1M590.5,734v1M591.5,734v1M592.5,735v1M593.5,735v1M594.5,736v1M595.5,736v1M596.5,737v1M597.5,738v1M598.5,738v1M599.5,739v1M600.5,739v1M601.5,740v1M602.5,740v1M603.5,741v1M604.5,741v1M605.5,742v1M606.5,742v1M607.5,743v1M608.5,744v1M609.5,744v1M610.5,745v1M611.5,745v1M612.5,746v1M613.5,746v1M614.5,747v1M615.5,747v1M616.5,748v1M617.5,748v1M618.5,749v1" stroke="#800000" shape-rendering="crispEdges"/>
<path d="M365.5,292v33M366.5,274v18M366.5,325v15M367.5,259v15M367.5,340v9M368.5,247v12M368.5,349v9M369.5,235v12M369.5,358v9M370.5,229v6M370.5,367v12M371.5,220v9M371.5,379v6M372.5,214v6M372.5,385v6M373.5,208v6M373.5,391v6M374.5,202v6M374.5,397v6M375.5,196v6M375.5,403v3M376.5,190v6M376.5,406v3M377.5,187v3M377.5,409v3M378.5,181v6M378.5,412v6M379.5,175v6M379.5,418v3M380.5,172v3M380.5,421v3M381.5,166v6M381.5,424v3M382.5,163v3M382.5,427v3M383.5,160v3M383.5,430v6M384.5,154v6M384.5,436v3M385.5,151v3M385.5,439v3M386.5,145v6M386.5,442v3M387.5,142v3M387.5,445v3M388.5,139v3M388.5,448v3M389.5,136v3M389.5,451v3M390.5,130v6M390.5,454v3M391.5,127v3M391.5,457v3M392.5,124v3M392.5,460v3M393.5,121v3M393.5,463v3M394.5,118v3M394.5,466v2M395.5,115v3M395.5,468v2M396.5,109v6M396.5,470v2M397.5,106v3M397.5,472v3M398.5,103v3M398.5,475v3M399.5,100v3M399.5,478v2M400.5,97v3M400.5,480v2M401.5,94v3M401.5,482v2M402.5,91v3M402.5,484v3M403.5,88v3M403.5,487v2M404.5,85v3M404.5,489v2M405.5,82v3M405.5,491v2M406.5,79v3M406.5,493v2M407.5,76v3M407.5,495v2M408.5,73v3M408.5,497v2M409.5,70v3M409.5,499v2M410.5,67v3M410.5,501v2M411.5,64v3M411.5,503v2M412.5,61v3M412.5,505v2M413.5,58v3M413.5,507v2M414.5,55v3M414.5,509v1M415.5,52v3M415.5,510v2M416.5,50v2M416.5,512v2M417.5,514v2M418.5,516v2M419.5,518v1M420.5,519v2M421.5,521v2M422.5,523v2M423.5,525v2M424.5,527v1M425.5,528v2M426.5,530v1M427.5,531v2M428.5,533v1M429.5,534v2M430.5,536v1M431.5,537v2M432.5,539v1M433.5,540v2M434.5,542v1M435.5,543v2M436.5,545v1M437.5,546v2M438.5,548v1M439.5,549v2M440.5,551v1M441.5,552v2M442.5,554v1M443.5,555v2M444.5,557v1M445.5,558v2M446.5,560v1M447.5,561v2M448.5,563v1M449.5,564v1M450.5,565v1M451.5,566v1M452.5,567v2M453.5,569v1M454.5,570v2M455.5,572v1M456.5,573v1M457.5,574v1M458.5,575v1M459.5,576v2M460.5,578v1M461.5,579v1M462.5,580v1M463.5,581v1M464.5,582v2M465.5,584v1M466.5,585v2M467.5,587v1M468.5,588v1M469.5,589v1M470.5,590v1M471.5,591v1M472.5,592v1M473.5,593v1M474.5,594v2M475.5,596v1M476.5,597v1M477.5,598v1M478.5,599v1M479.5,600v1M480.5,601v1M481.5,602v1M482.5,603v2M483.5,605v1M484.5,606v1M485.5,607v1M486.5,608v1M487.5,609v1M488.5,610v1M489.5,611v1M490.5,612v1M491.5,613v1M492.5,614v1M493.5,615v1M494.5,616v1M495.5,617v1M496.5,618v1M497.5,619v1M498.5,620v1M499.5,621v1M500.5,622v1M501.5,623v1M502.5,624v1M503.5,625v1M504.5,626v1M505.5,627v1M506.5,628v1M507.5,629v1M508.5,630v1M509.5,631v1M510.5,632v1M511.5,633v1M512.5,634v1M513.5,635v1M514.5,636v1M515.5,637v1M516.5,638v1M517.5,639v1M518.5,639v1M519.5,640v1M520.5,641v1M521.5,642v1M522.5,643v1M523.5,644v1M524.5,645v1M525.5,646v1M526.5,647v1M527.5,648v1M528.5,648v1M529.5,649v1M530.5,650v1M531.5,651v1M532.5,652v1M533.5,653v1M534.5,654v1M535.5,654v1M536.5,655v1M537.5,656v1M538.5,657v1M539.5,657v1M540.5,658v1M541.5,659v1M542.5,660v1M543.5,661v1M544.5,662v1M545.5,663v1M546.5,663v1M547.5,664v1M548.5,665v1M549.5,666v1M550.5,666v1M551.5,667v1M552.5,668v1M553.5,669v1M554.5,669v1M555.5,670v1M556.5,671v1M557.5,672v1M558.5,672v1M559.5,673v1M560.5,674v1M561.5,675v1M562.5,675v1M563.5,676v1M564.5,677v1M565.5,678v1M566.5,678v1M567.5,679v1M568.5,680v1M569.5,681v1M570.5,681v1M571.5,682v1M572.5,683v1M573.5,684v1M574.5,684v1M575.5,685v1M576.5,686v1M577.5,687v1M578.5,687v1M579.5,688v1M580.5,689v1M581.5,690v1M582.5,690v1M583.5,691v1M584.5,692v1M585.5,693v1M586.5,693v1M587.5,694v1M588.5,694v1M589.5,695v1M590.5,696v1M591.5,696v1M592.5,697v1M593.5,698v1M594.5,699v1M595.5,699v1M596.5,700v1M597.5,701v1M598.5,702v1M599.5,702v1M600.5,703v1M601.5,703v1M602.5,704v1M603.5,705v1M604.5,705v1M605.5,706v1M606.5,707v1M607.5,708v1M608.5,708v1M609.5,709v1M610.5,710v1M611.5,711v1M612.5,711v1M613.5,712v1M614.5,712v1M615.5,713v1M616.5,714v1M617.5,714v1M618.5,715v1M619.5,715v1M620.5,716v1M621.5,717v1M622.5,717v1M623.5,718v1M624.5,718v1M625.5,719v1M626.5,720v1M627.5,720v1M628.5,721v1M629.5,722v1M630.5,723v1M631.5,723v1M632.5,724v1M633.5,724v1M634.5,725v1M635.5,726v1M636.5,726v1M637.5,727v1M638.5,727v1M639.5,728v1M640.5,728v1M641.5,729v1M642.5,729v1M643.5,730v1M644.5,730v1M645.5,731v1M646.5,732v1M647.5,732v1M648.5,733v1M649.5,733v1M650.5,734v1M651.5,735v1M652.5,735v1M653.5,736v1M654.5,736v1M655.5,737v1M656.5,737v1M657.5,738v1M658.5,738v1M659.5,739v1M660.5,739v1M661.5,740v1" stroke="#800000" shape-rendering="crispEdges"/>
<path d="M402.5,292v9M403.5,259v33M403.5,301v24M404.5,241v18M404.5,325v9M405.5,229v12M405.5,334v9M406.5,220v9M406.5,343v6M407.5,211v9M407.5,349v9M408.5,205v6M408.5,358v6M409.5,199v6M409.5,364v9M410.5,193v6M410.5,373v6M411.5,187v6M411.5,379v6M412.5,181v6M412.5,385v6M413.5,175v6M413.5,391v3M414.5,169v6M414.5,394v6M415.5,166v3M415.5,400v3M416.5,160v6M416.5,403v3M417.5,157v3M417.5,406v3M418.5,151v6M418.5,409v3M419.5,148v3M419.5,412v3M420.5,142v6M420.5,415v3M421.5,139v3M421.5,418v3M422.5,136v3M422.5,421v3M423.5,130v6M423.5,424v6M424.5,127v3M424.5,430v3M425.5,124v3M425.5,433v3M426.5,118v6M426.5,436v3M427.5,115v3M427.5,439v3M428.5,112v3M428.5,442v3M429.5,109v3M429.5,445v3M430.5,103v6M430.5,448v3M431.5,100v3M431.5,451v2M432.5,97v3M432.5,453v2M433.5,94v3M433.5,455v2M434.5,91v3M434.5,457v3M435.5,88v3M435.5,460v3M436.5,85v3M436.5,463v2M437.5,82v3M437.5,465v2M438.5,79v3M438.5,467v2M439.5,73v6M439.5,469v3M440.5,70v3M440.5,472v2M441.5,67v3M441.5,474v2M442.5,64v3M442.5,476v2M443.5,61v3M443.5,478v2M444.5,58v3M444.5,480v2M445.5,55v3M445.5,482v2M446.5,52v3M446.5,484v2M447.5,50v2M447.5,486v2M448.5,488v2M449.5,490v2M450.5,492v2M451.5,494v2M452.5,496v2M453.5,498v2M454.5,500v1M455.5,501v2M456.5,503v1M457.5,504v2M458.5,506v2M459.5,508v2M460.5,510v2M461.5,512v1M462.5,513v2M463.5,515v1M464.5,516v2M465.5,518v1M466.5,519v2M467.5,521v2M468.5,523v2M469.5,525v2M470.5,527v1M471.5,528v2M472.5,530v1M473.5,531v2M474.5,533v1M475.5,534v2M476.5,536v1M477.5,537v2M478.5,539v1M479.5,540v2M480.5,542v1M481.5,543v1M482.5,544v1M483.5,545v1M484.5,546v2M485.5,548v1M486.5,549v2M487.5,551v1M488.5,552v2M489.5,554v1M490.5,555v1M491.5,556v1M492.5,557v1M493.5,558v2M494.5,560v1M495.5,561v2M496.5,563v1M497.5,564v1M498.5,565v1M499.5,566v1M500.5,567v2M501.5,569v1M502.5,570v1M503.5,571v1M504.5,572v1M505.5,573v2M506.5,575v1M507.5,576v1M508.5,577v1M509.5,578v1M510.5,579v2M511.5,581v1M512.5,582v1M513.5,583v1M514.5,584v1M515.5,585v1M516.5,586v1M517.5,587v1M518.5,588v2M519.5,590v1M520.5,591v1M521.5,592v1M522.5,593v1M523.5,594v1M524.5,595v1M525.5,596v1M526.5,597v1M527.5,598v1M528.5,599v1M529.5,600v1M530.5,601v1M531.5,602v1M532.5,603v1M533.5,604v1M534.5,605v1M535.5,606v1M536.5,607v1M537.5,608v1M538.5,609v2M539.5,611v1M540.5,612v1M541.5,612v1M542.5,613v1M543.5,614v1M544.5,615v1M545.5,616v1M546.5,617v1M547.5,618v1M548.5,619v1M549.5,620v1M550.5,621v1M551.5,622v1M552.5,623v1M553.5,624v1M554.5,625v1M555.5,626v1M556.5,627v1M557.5,628v1M558.5,629v1M559.5,630v1M560.5,630v1M561.5,631v1M562.5,632v1M563.5,633v1M564.5,634v1M565.5,635v1M566.5,636v1M567.5,636v1M568.5,637v1M569.5,638v1M570.5,639v1M571.5,640v1M572.5,641v1M573.5,642v1M574.5,642v1M575.5,643v1M576.5,644v1M577.5,645v1M578.5,646v1M579.5,647v1M580.5,648v1M581.5,648v1M582.5,649v1M583.5,650v1M584.5,651v1M585.5,651v1M586.5,652v1M587.5,653v1M588.5,654v1M589.5,654v1M590.5,655v1M591.5,656v1M592.5,657v1M593.5,658v1M594.5,659v1M595.5,660v1M596.5,660v1M597.5,661v1M598.5,662v1M599.5,663v1M600.5,663v1M601.5,664v1M602.5,665v1M603.5,666v1M604.5,666v1M605.5,667v1M606.5,668v1M607.5,669v1M608.5,669v1M609.5,670v1M610.5,671v1M611.5,672v1M612.5,672v1M613.5,673v1M614.5,673v1M615.5,674v1M616.5,675v1M617.5,675v1M618.5,676v1M619.5,677v1M620.5,678v1M621.5,678v1M622.5,679v1M623.5,680v1M624.5,681v1M625.5,681v1M626.5,682v1M627.5,683v1M628.5,684v1M629.5,684v1M630.5,685v1M631.5,685v1M632.5,686v1M633.5,687v1M634.5,687v1M635.5,688v1M636.5,689v1M637.5,690v1M638.5,690v1M639.5,691v1M640.5,691v1M641.5,692v1M642.5,693v1M643.5,693v1M644.5,694v1M645.5,695v1M646.5,696v1M647.5,696v1M648.5,697v1M649.5,697v1M650.5,698v1M651.5,699v1M652.5,699v1M653.5,700v1M654.5,701v1M655.5,702v1M656.5,702v1M657.5,703v1M658.5,703v1M659.5,704v1M660.5,705v1M661.5,705v1" stroke="#800000" shape-rendering="crispEdges"/>
<path d="M439.5,256v36M440.5,232v24M440.5,292v24M441.5,220v12M441.5,316v9M442.5,211v9M442.5,325v9M443.5,202v9M443.5,334v6M444.5,193v9M444.5,340v6M445.5,187v6M445.5,346v6M446.5,181v6M446.5,352v6M447.5,175v6M447.5,358v3M448.5,169v6M448.5,361v6M449.5,163v6M449.5,367v6M450.5,157v6M450.5,373v6M451.5,154v3M451.5,379v6M452.5,148v6M452.5,385v6M453.5,142v6M453.5,391v3M454.5,139v3M454.5,394v3M455.5,133v6M455.5,397v3M456.5,130v3M456.5,400v3M457.5,124v6M457.5,403v3M458.5,121v3M458.5,406v3M459.5,118v3M459.5,409v3M460.5,112v6M460.5,412v3M461.5,109v3M461.5,415v3M462.5,106v3M462.5,418v3M463.5,100v6M463.5,421v3M464.5,97v3M464.5,424v3M465.5,94v3M465.5,427v3M466.5,91v3M466.5,430v3M467.5,88v3M467.5,433v3M468.5,82v6M468.5,436v3M469.5,79v3M469.5,439v3M470.5,76v3M470.5,442v2M471.5,73v3M471.5,444v2M472.5,70v3M472.5,446v2M473.5,67v3M473.5,448v3M474.5,64v3M474.5,451v3M475.5,61v3M475.5,454v2M476.5,58v3M476.5,456v2M477.5,55v3M477.5,458v2M478.5,52v3M478.5,460v2M479.5,50v2M479.5,462v2M480.5,464v2M481.5,466v3M482.5,469v2M483.5,471v2M484.5,473v2M485.5,475v2M486.5,477v2M487.5,479v1M488.5,480v2M489.5,482v2M490.5,484v2M491.5,486v2M492.5,488v1M493.5,489v2M494.5,491v2M495.5,493v2M496.5,495v2M497.5,497v1M498.5,498v2M499.5,500v1M500.5,501v2M501.5,503v1M502.5,504v2M503.5,506v2M504.5,508v2M505.5,510v2M506.5,512v1M507.5,513v2M508.5,515v1M509.5,516v2M510.5,518v1M511.5,519v2M512.5,521v1M513.5,522v2M514.5,524v1M515.5,525v2M516.5,527v1M517.5,528v2M518.5,530v1M519.5,531v1M520.5,532v1M521.5,533v1M522.5,534v2M523.5,536v1M524.5,537v2M525.5,539v1M526.5,540v2M527.5,542v1M528.5,543v1M529.5,544v1M530.5,545v1M531.5,546v2M532.5,548v1M533.5,549v2M534.5,551v1M535.5,552v1M536.5,553v1M537.5,554v1M538.5,555v2M539.5,557v1M540.5,558v1M541.5,559v1M542.5,560v1M543.5,561v2M544.5,563v1M545.5,564v1M546.5,565v1M547.5,566v1M548.5,567v1M549.5,568v1M550.5,569v1M551.5,570v2M552.5,572v1M553.5,573v1M554.5,574v1M555.5,575v1M556.5,576v1M557.5,577v1M558.5,578v1M559.5,579v2M560.5,581v1M561.5,582v1M562.5,583v1M563.5,584v1M564.5,585v1M565.5,586v1M566.5,587v1M567.5,588v1M568.5,589v1M569.5,590v1M570.5,591v1M571.5,592v1M572.5,593v1M573.5,594v1M574.5,595v1M575.5,596v1M576.5,597v1M577.5,598v1M578.5,599v1M579.5,600v1M580.5,601v1M581.5,602v1M582.5,603v1M583.5,604v1M584.5,605v1M585.5,606v1M586.5,607v1M587.5,608v1M588.5,609v1M589.5,610v1M590.5,611v1M591.5,612v1M592.5,613v1M593.5,614v1M594.5,615v1M595.5,615v1M596.5,616v1M597.5,617v1M598.5,618v1M599.5,619v1M600.5,620v1M601.5,621v1M602.5,622v1M603.5,623v1M604.5,624v1M605.5,624v1M606.5,625v1M607.5,626v1M608.5,627v1M609.5,628v1M610.5,629v1M611.5,630v1M612.5,630v1M613.5,631v1M614.5,632v1M615.5,633v1M616.5,634v1M617.5,635v1M618.5,636v1M619.5,636v1M620.5,637v1M621.5,638v1M622.5,639v1M623.5,639v1M624.5,640v1M625.5,641v1M626.5,642v1M627.5,642v1M628.5,643v1M629.5,644v1M630.5,645v1M631.5,646v1M632.5,647v1M633.5,648v1M634.5,648v1M635.5,649v1M636.5,650v1M637.5,651v1M638.5,651v1M639.5,652v1M640.5,653v1M641.5,654v1M642.5,654v1M643.5,655v1M644.5,656v1M645.5,657v1M646.5,657v1M647.5,658v1M648.5,659v1M649.5,660v1M650.5,660v1M651.5,661v1M652.5,662v1M653.5,663v1M654.5,663v1M655.5,664v1M656.5,664v1M657.5,665v1M658.5,666v1M659.5,666v1M660.5,667v1M661.5,668v1" stroke="#800000" shape-rendering="crispEdges"/>
<path d="M475.5,244v18M476.5,220v24M476.5,262v30M477.5,205v15M477.5,292v15M478.5,196v9M478.5,307v12M479.5,187v9M479.5,319v6M480.5,181v6M480.5,325v6M481.5,172v9M481.5,331v6M482.5,166v6M482.5,337v6M483.5,160v6M483.5,343v3M484.5,154v6M484.5,346v6M485.5,148v6M485.5,352v3M486.5,142v6M486.5,355v6M487.5,139v3M487.5,361v6M488.5,133v6M488.5,367v3M489.5,127v6M489.5,370v6M490.5,124v3M490.5,376v6M491.5,118v6M491.5,382v3M492.5,115v3M492.5,385v3M493.5,109v6M493.5,388v6M494.5,106v3M494.5,394v3M495.5,103v3M495.5,397v3M496.5,97v6M496.5,400v3M497.5,94v3M497.5,403v2M498.5,91v3M498.5,405v2M499.5,85v6M499.5,407v2M500.5,82v3M500.5,409v3M501.5,79v3M501.5,412v3M502.5,76v3M502.5,415v3M503.5,70v6M503.5,418v2M504.5,67v3M504.5,420v2M505.5,64v3M505.5,422v2M506.5,61v3M506.5,424v3M507.5,58v3M507.5,427v3M508.5,55v3M508.5,430v3M509.5,52v3M509.5,433v3M510.5,50v2M510.5,436v3M511.5,439v2M512.5,441v2M513.5,443v2M514.5,445v3M515.5,448v2M516.5,450v2M517.5,452v2M518.5,454v2M519.5,456v2M520.5,458v2M521.5,460v2M522.5,462v2M523.5,464v2M524.5,466v2M525.5,468v2M526.5,470v2M527.5,472v2M528.5,474v2M529.5,476v1M530.5,477v2M531.5,479v1M532.5,480v2M533.5,482v2M534.5,484v2M535.5,486v2M536.5,488v1M537.5,489v2M538.5,491v1M539.5,492v2M540.5,494v1M541.5,495v2M542.5,497v1M543.5,498v2M544.5,500v1M545.5,501v2M546.5,503v1M547.5,504v2M548.5,506v1M549.5,507v2M550.5,509v1M551.5,510v2M552.5,512v1M553.5,513v2M554.5,515v1M555.5,516v2M556.5,518v1M557.5,519v2M558.5,521v1M559.5,522v2M560.5,524v1M561.5,525v2M562.5,527v1M563.5,528v1M564.5,529v1M565.5,530v1M566.5,531v2M567.5,533v1M568.5,534v2M569.5,536v1M570.5,537v1M571.5,538v1M572.5,539v1M573.5,540v2M574.5,542v1M575.5,543v1M576.5,544v1M577.5,545v1M578.5,546v2M579.5,548v1M580.5,549v1M581.5,550v1M582.5,551v1M583.5,552v2M584.5,554v1M585.5,555v1M586.5,556v1M587.5,557v1M588.5,558v1M589.5,559v1M590.5,560v1M591.5,561v2M592.5,563v1M593.5,564v1M594.5,565v1M595.5,566v1M596.5,567v1M597.5,568v1M598.5,569v1M599.5,570v1M600.5,571v1M601.5,572v1M602.5,573v1M603.5,574v1M604.5,575v1M605.5,576v2M606.5,578v1M607.5,579v1M608.5,580v1M609.5,581v1M610.5,582v1M611.5,583v1M612.5,584v1M613.5,585v1M614.5,586v1M615.5,587v1M616.5,588v1M617.5,589v1M618.5,590v1M619.5,591v1M620.5,592v1M621.5,593v1M622.5,594v1M623.5,594v1M624.5,595v1M625.5,596v1M626.5,597v1M627.5,598v1M628.5,599v1M629.5,600v1M630.5,601v1M631.5,602v1M632.5,603v1M633.5,604v1M634.5,605v1M635.5,606v1M636.5,606v1M637.5,607v1M638.5,608v1M639.5,609v1M640.5,610v1M641.5,611v1M642.5,612v1M643.5,613v1M644.5,614v1M645.5,615v1M646.5,615v1M647.5,616v1M648.5,617v1M649.5,618v1M650.5,619v1M651.5,620v1M652.5,621v1M653.5,621v1M654.5,622v1M655.5,623v1M656.5,624v1M657.5,625v1M658.5,626v1M659.5,627v1M660.5,627v1M661.5,628v1" stroke="#800000" shape-rendering="crispEdges"/>
<path d="M511.5,217v42M512.5,199v18M512.5,259v21M513.5,190v9M513.5,280v12M514.5,178v12M514.5,292v12M515.5,169v9M515.5,304v9M516.5,163v6M516.5,313v6M517.5,157v6M517.5,319v6M518.5,148v9M518.5,325v6M519.5,142v6M519.5,331v3M520.5,139v3M520.5,334v6M521.5,133v6M521.5,340v3M522.5,127v6M522.5,343v6M523.5,121v6M523.5,349v3M524.5,115v6M524.5,352v3M525.5,112v3M525.5,355v6M526.5,106v6M526.5,361v3M527.5,103v3M527.5,364v6M528.5,97v6M528.5,370v3M529.5,94v3M529.5,373v3M530.5,88v6M530.5,376v6M531.5,85v3M531.5,382v3M532.5,82v3M532.5,385v3M533.5,76v6M533.5,388v3M534.5,73v3M534.5,391v3M535.5,70v3M535.5,394v3M536.5,67v3M536.5,397v3M537.5,61v6M537.5,400v3M538.5,58v3M538.5,403v3M539.5,55v3M539.5,406v2M540.5,52v3M540.5,408v2M541.5,50v2M541.5,410v2M542.5,412v3M543.5,415v2M544.5,417v2M545.5,419v2M546.5,421v3M547.5,424v2M548.5,426v2M549.5,428v2M550.5,430v3M551.5,433v3M552.5,436v2M553.5,438v2M554.5,440v2M555.5,442v3M556.5,445v2M557.5,447v2M558.5,449v2M559.5,451v2M560.5,453v2M561.5,455v1M562.5,456v2M563.5,458v2M564.5,460v2M565.5,462v2M566.5,464v1M567.5,465v2M568.5,467v2M569.5,469v2M570.5,471v2M571.5,473v1M572.5,474v2M573.5,476v1M574.5,477v2M575.5,479v1M576.5,480v2M577.5,482v2M578.5,484v2M579.5,486v2M580.5,488v1M581.5,489v2M582.5,491v1M583.5,492v2M584.5,494v1M585.5,495v2M586.5,497v1M587.5,498v2M588.5,500v1M589.5,501v1M590.5,502v1M591.5,503v1M592.5,504v2M593.5,506v1M594.5,507v2M595.5,509v1M596.5,510v2M597.5,512v1M598.5,513v2M599.5,515v1M600.5,516v1M601.5,517v1M602.5,518v1M603.5,519v2M604.5,521v1M605.5,522v2M606.5,524v1M607.5,525v1M608.5,526v1M609.5,527v1M610.5,528v2M611.5,530v1M612.5,531v2M613.5,533v1M614.5,534v1M615.5,535v1M616.5,536v1M617.5,537v2M618.5,539v1M619.5,540v1M620.5,541v1M621.5,542v1M622.5,543v1M623.5,544v1M624.5,545v1M625.5,546v2M626.5,548v1M627.5,549v1M628.5,550v1M629.5,551v1M630.5,552v1M631.5,553v1M632.5,554v1M633.5,555v1M634.5,556v1M635.5,557v1M636.5,558v2M637.5,560v1M638.5,561v1M639.5,562v1M640.5,563v1M641.5,564v1M642.5,565v1M643.5,566v1M644.5,567v1M645.5,568v1M646.5,569v1M647.5,570v1M648.5,571v1M649.5,572v1M650.5,573v1M651.5,574v1M652.5,575v1M653.5,576v1M654.5,577v1M655.5,578v1M656.5,579v1M657.5,580v1M658.5,581v1M659.5,582v1M660.5,583v1M661.5,584v1" stroke="#800000" shape-rendering="crispEdges"/>
<path d="M546.5,211v30M547.5,190v21M547.5,241v18M548.5,178v12M548.5,259v12M549.5,166v12M549.5,271v12M550.5,160v6M550.5,283v9M551.5,151v9M551.5,292v9M552.5,145v6M552.5,301v6M553.5,136v9M553.5,307v9M554.5,130v6M554.5,316v3M555.5,124v6M555.5,319v6M556.5,118v6M556.5,325v6M557.5,112v6M557.5,331v3M558.5,109v3M558.5,334v3M559.5,103v6M559.5,337v6M560.5,97v6M560.5,343v3M561.5,94v3M561.5,346v3M562.5,88v6M562.5,349v3M563.5,85v3M563.5,352v3M564.5,79v6M564.5,355v6M565.5,76v3M565.5,361v3M566.5,70v6M566.5,364v3M567.5,67v3M567.5,367v3M568.5,64v3M568.5,370v3M569.5,58v6M569.5,373v6M570.5,55v3M570.5,379v3M571.5,52v3M571.5,382v3M572.5,50v2M572.5,385v3M573.5,388v3M574.5,391v3M575.5,394v3M576.5,397v2M577.5,399v2M578.5,401v2M579.5,403v3M580.5,406v2M581.5,408v2M582.5,410v2M583.5,412v2M584.5,414v2M585.5,416v2M586.5,418v2M587.5,420v2M588.5,422v2M589.5,424v3M590.5,427v2M591.5,429v2M592.5,431v2M593.5,433v3M594.5,436v2M595.5,438v2M596.5,440v2M597.5,442v2M598.5,444v2M599.5,446v2M600.5,448v2M601.5,450v2M602.5,452v1M603.5,453v2M604.5,455v2M605.5,457v2M606.5,459v2M607.5,461v1M608.5,462v2M609.5,464v1M610.5,465v2M611.5,467v1M612.5,468v2M613.5,470v1M614.5,471v2M615.5,473v1M616.5,474v2M617.5,476v1M618.5,477v2M619.5,479v1M620.5,480v2M621.5,482v1M622.5,483v2M623.5,485v1M624.5,486v2M625.5,488v1M626.5,489v2M627.5,491v1M628.5,492v2M629.5,494v1M630.5,495v2M631.5,497v1M632.5,498v2M633.5,500v1M634.5,501v2M635.5,503v1M636.5,504v1M637.5,505v1M638.5,506v1M639.5,507v2M640.5,509v1M641.5,510v2M642.5,512v1M643.5,513v1M644.5,514v1M645.5,515v1M646.5,516v2M647.5,518v1M648.5,519v1M649.5,520v1M650.5,521v1M651.5,522v2M652.5,524v1M653.5,525v1M654.5,526v1M655.5,527v1M656.5,528v2M657.5,530v1M658.5,531v1M659.5,532v1M660.5,533v1M661.5,534v2" stroke="#800000" shape-rendering="crispEdges"/>
<path d="M61,740.5h1M62,741.5h1M63,742.5h1M64,743.5h1M65,744.5h1M66,745.5h1M67,746.5h1M68,747.5h2M70,748.5h1M71,749.5h1" stroke="#000080" shape-rendering="crispEdges"/>
<path d="M61.5,664v2M62.5,666v2M63.5,668v1M64.5,669v2M65.5,671v1M66.5,672v2M67.5,674v1M68.5,675v2M69.5,677v1M70.5,678v2M71.5,680v1M72.5,681v1M73.5,682v1M74.5,683v1M75.5,684v2M76.5,686v1M77.5,687v2M78.5,689v1M79.5,690v2M80.5,692v1M81.5,693v2M82.5,695v1M83.5,696v1M84.5,697v1M85.5,698v1M86.5,699v2M87.5,701v1M88.5,702v2M89.5,704v1M90.5,705v2M91.5,707v1M92.5,708v1M93.5,709v1M94.5,710v1M95.5,711v2M96.5,713v1M97.5,714v1M98.5,715v1M99.5,716v1M100.5,717v2M101.5,719v1M102.5,720v1M103.5,721v1M104.5,722v1M105.5,723v2M106.5,725v1M107.5,726v1M108.5,727v1M109.5,728v1M110.5,729v1M111.5,730v1M112.5,731v1M113.5,732v1M114.5,733v1M115.5,734v1M116.5,735v1M117.5,736v1M118.5,737v1M119.5,738v1M120.5,739v1M121.5,740v1M122.5,741v1M123.5,742v1M124.5,743v1M125.5,744v1M126.5,744v1M127.5,745v1M128.5,746v1M129.5,747v1M130.5,748v1M131.5,749v1" stroke="#000080" shape-rendering="crispEdges"/>
<path d="M61.5,334v6M61.5,538v3M62.5,328v6M62.5,541v3M63.5,322v6M63.5,544v6M64.5,319v3M64.5,550v3M65.5,316v3M65.5,553v3M66.5,310v6M66.5,556v3M67.5,307v3M67.5,559v3M68.5,301v6M68.5,562v3M69.5,298v3M69.5,565v3M70.5,295v3M70.5,568v3M71.5,292v3M71.5,571v3M72.5,289v3M72.5,574v3M73.5,283v6M73.5,577v3M74.5,280v3M74.5,580v3M75.5,277v3M75.5,583v3M76.5,274v3M76.5,586v2M77.5,271v3M77.5,588v2M78.5,268v3M78.5,590v2M79.5,262v6M79.5,592v3M80.5,259v3M80.5,595v3M81.5,256v3M81.5,598v2M82.5,253v3M82.5,600v2M83.5,250v3M83.5,602v2M84.5,247v3M84.5,604v3M85.5,244v3M85.5,607v2M86.5,241v3M86.5,609v2M87.5,238v3M87.5,611v2M88.5,235v3M88.5,613v2M89.5,232v3M89.5,615v2M90.5,229v3M90.5,617v2M91.5,226v3M91.5,619v2M92.5,223v3M92.5,621v2M93.5,220v3M93.5,623v2M94.5,217v3M94.5,625v2M95.5,214v3M95.5,627v2M96.5,211v3M96.5,629v2M97.5,208v3M97.5,631v2M98.5,205v3M98.5,633v2M99.5,203v2M99.5,635v1M100.5,201v2M100.5,636v2M101.5,199v2M101.5,638v1M102.5,196v3M102.5,639v2M103.5,193v3M103.5,641v2M104.5,190v3M104.5,643v2M105.5,187v3M105.5,645v2M106.5,185v2M106.5,647v1M107.5,183v2M107.5,648v2M108.5,182v1M108.5,650v1M109.5,651v2M110.5,653v1M111.5,654v2M112.5,656v1M113.5,657v2M114.5,659v1M115.5,660v2M116.5,662v1M117.5,663v2M118.5,665v1M119.5,666v2M120.5,668v1M121.5,669v2M122.5,671v1M123.5,672v1M124.5,673v1M125.5,674v1M126.5,675v2M127.5,677v1M128.5,678v2M129.5,680v1M130.5,681v2M131.5,683v1M132.5,684v1M133.5,685v1M134.5,686v1M135.5,687v2M136.5,689v1M137.5,690v2M138.5,692v1M139.5,693v1M140.5,694v1M141.5,695v1M142.5,696v2M143.5,698v1M144.5,699v2M145.5,701v1M146.5,702v1M147.5,703v1M148.5,704v1M149.5,705v2M150.5,707v1M151.5,708v1M152.5,709v1M153.5,710v1M154.5,711v2M155.5,713v1M156.5,714v1M157.5,715v1M158.5,716v1M159.5,717v1M160.5,718v1M161.5,719v1M162.5,720v2M163.5,722v1M164.5,723v1M165.5,724v1M166.5,725v1M167.5,726v1M168.5,727v1M169.5,728v1M170.5,729v1M171.5,730v1M172.5,731v1M173.5,732v1M174.5,733v1M175.5,734v1M176.5,735v1M177.5,736v1M178.5,737v1M179.5,738v1M180.5,739v1M181.5,740v1M182.5,741v1M183.5,742v1M184.5,743v1M185.5,744v1M186.5,744v1M187.5,745v1M188.5,746v1M189.5,747v1M190.5,748v1M191.5,749v1" stroke="#000080" shape-rendering="crispEdges"/>
<path d="M97.5,391v57M98.5,382v9M98.5,448v15M99.5,373v9M99.5,463v9M100.5,364v9M100.5,472v6M101.5,358v6M101.5,478v9M102.5,349v9M102.5,487v6M103.5,340v9M103.5,493v6M104.5,334v6M104.5,499v3M105.5,328v6M105.5,502v6M106.5,322v6M106.5,508v3M107.5,316v6M107.5,511v6M108.5,310v6M108.5,517v3M109.5,307v3M109.5,520v6M110.5,301v6M110.5,526v3M111.5,298v3M111.5,529v3M112.5,295v3M112.5,532v3M113.5,289v6M113.5,535v3M114.5,286v3M114.5,538v3M115.5,280v6M115.5,541v6M116.5,277v3M116.5,547v3M117.5,274v3M117.5,550v2M118.5,271v3M118.5,552v2M119.5,265v6M119.5,554v2M120.5,262v3M120.5,556v3M121.5,259v3M121.5,559v3M122.5,256v3M122.5,562v3M123.5,250v6M123.5,565v3M124.5,247v3M124.5,568v3M125.5,244v3M125.5,571v2M126.5,241v3M126.5,573v2M127.5,238v3M127.5,575v2M128.5,235v3M128.5,577v3M129.5,229v6M129.5,580v3M130.5,226v3M130.5,583v2M131.5,223v3M131.5,585v2M132.5,220v3M132.5,587v2M133.5,217v3M133.5,589v2M134.5,214v3M134.5,591v2M135.5,211v3M135.5,593v2M136.5,208v3M136.5,595v3M137.5,205v3M137.5,598v2M138.5,202v3M138.5,600v2M139.5,199v3M139.5,602v2M140.5,196v3M140.5,604v2M141.5,194v2M141.5,606v2M142.5,192v2M142.5,608v1M143.5,190v2M143.5,609v2M144.5,187v3M144.5,611v2M145.5,184v3M145.5,613v2M146.5,181v3M146.5,615v2M147.5,178v3M147.5,617v2M148.5,175v3M148.5,619v2M149.5,172v3M149.5,621v2M150.5,170v2M150.5,623v1M151.5,168v2M151.5,624v2M152.5,166v2M152.5,626v1M153.5,163v3M153.5,627v2M154.5,160v3M154.5,629v2M155.5,157v3M155.5,631v2M156.5,154v3M156.5,633v2M157.5,152v2M157.5,635v1M158.5,150v2M158.5,636v2M159.5,148v2M159.5,638v1M160.5,145v3M160.5,639v2M161.5,142v3M161.5,641v1M162.5,140v2M162.5,642v2M163.5,138v2M163.5,644v1M164.5,136v2M164.5,645v2M165.5,133v3M165.5,647v1M166.5,131v2M166.5,648v2M167.5,129v2M167.5,650v1M168.5,127v2M168.5,651v2M169.5,124v3M169.5,653v1M170.5,121v3M170.5,654v2M171.5,119v2M171.5,656v1M172.5,117v2M172.5,657v2M173.5,116v1M173.5,659v1M174.5,660v1M175.5,661v1M176.5,662v1M177.5,663v2M178.5,665v1M179.5,666v2M180.5,668v1M181.5,669v2M182.5,671v1M183.5,672v1M184.5,673v1M185.5,674v1M186.5,675v2M187.5,677v1M188.5,678v2M189.5,680v1M190.5,681v1M191.5,682v1M192.5,683v1M193.5,684v2M194.5,686v1M195.5,687v1M196.5,688v1M197.5,689v1M198.5,690v2M199.5,692v1M200.5,693v2M201.5,695v1M202.5,696v1M203.5,697v1M204.5,698v1M205.5,699v2M206.5,701v1M207.5,702v1M208.5,703v1M209.5,704v1M210.5,705v2M211.5,707v1M212.5,708v1M213.5,709v1M214.5,710v1M215.5,711v2M216.5,713v1M217.5,714v1M218.5,715v1M219.5,716v1M220.5,717v2M221.5,719v1M222.5,720v1M223.5,721v1M224.5,722v1M225.5,723v1M226.5,724v1M227.5,725v1M228.5,726v1M229.5,727v1M230.5,728v1M231.5,729v2M232.5,731v1M233.5,732v1M234.5,733v1M235.5,734v1M236.5,735v1M237.5,736v1M238.5,737v1M239.5,738v1M240.5,739v1M241.5,740v1M242.5,741v1M243.5,742v1M244.5,743v1M245.5,744v1M246.5,745v1M247.5,746v1M248.5,747v1M249.5,747v1M250.5,748v1M251.5,749v1" stroke="#000080" shape-rendering="crispEdges"/>
<path d="M149.5,379v36M150.5,367v12M150.5,415v18M151.5,355v12M151.5,433v15M152.5,343v12M152.5,448v9M153.5,331v12M153.5,457v6M154.5,322v9M154.5,463v6M155.5,316v6M155.5,469v6M156.5,310v6M156.5,475v6M157.5,304v6M157.5,481v3M158.5,298v6M158.5,484v6M159.5,295v3M159.5,490v3M160.5,289v6M160.5,493v6M161.5,283v6M161.5,499v3M162.5,280v3M162.5,502v3M163.5,274v6M163.5,505v6M164.5,271v3M164.5,511v3M165.5,265v6M165.5,514v3M166.5,262v3M166.5,517v3M167.5,256v6M167.5,520v3M168.5,253v3M168.5,523v3M169.5,250v3M169.5,526v3M170.5,244v6M170.5,529v3M171.5,241v3M171.5,532v3M172.5,238v3M172.5,535v3M173.5,232v6M173.5,538v3M174.5,229v3M174.5,541v3M175.5,226v3M175.5,544v3M176.5,223v3M176.5,547v3M177.5,220v3M177.5,550v2M178.5,217v3M178.5,552v2M179.5,211v6M179.5,554v2M180.5,208v3M180.5,556v3M181.5,205v3M181.5,559v2M182.5,202v3M182.5,561v2M183.5,199v3M183.5,563v2M184.5,196v3M184.5,565v3M185.5,193v3M185.5,568v2M186.5,190v3M186.5,570v2M187.5,187v3M187.5,572v2M188.5,184v3M188.5,574v2M189.5,181v3M189.5,576v2M190.5,178v3M190.5,578v2M191.5,175v3M191.5,580v3M192.5,172v3M192.5,583v2M193.5,169v3M193.5,585v2M194.5,166v3M194.5,587v2M195.5,163v3M195.5,589v2M196.5,161v2M196.5,591v2M197.5,159v2M197.5,593v1M198.5,157v2M198.5,594v2M199.5,154v3M199.5,596v2M200.5,151v3M200.5,598v2M201.5,148v3M201.5,600v2M202.5,145v3M202.5,602v1M203.5,142v3M203.5,603v2M204.5,140v2M204.5,605v2M205.5,138v2M205.5,607v2M206.5,136v2M206.5,609v2M207.5,133v3M207.5,611v1M208.5,130v3M208.5,612v2M209.5,127v3M209.5,614v2M210.5,125v2M210.5,616v2M211.5,123v2M211.5,618v2M212.5,121v2M212.5,620v1M213.5,118v3M213.5,621v2M214.5,115v3M214.5,623v1M215.5,113v2M215.5,624v2M216.5,111v2M216.5,626v1M217.5,109v2M217.5,627v2M218.5,106v3M218.5,629v1M219.5,103v3M219.5,630v2M220.5,101v2M220.5,632v1M221.5,99v2M221.5,633v2M222.5,97v2M222.5,635v1M223.5,94v3M223.5,636v2M224.5,91v3M224.5,638v1M225.5,89v2M225.5,639v2M226.5,87v2M226.5,641v1M227.5,85v2M227.5,642v2M228.5,82v3M228.5,644v1M229.5,80v2M229.5,645v2M230.5,78v2M230.5,647v1M231.5,76v2M231.5,648v2M232.5,74v2M232.5,650v1M233.5,72v2M233.5,651v2M234.5,70v2M234.5,653v1M235.5,67v3M235.5,654v2M236.5,65v2M236.5,656v1M237.5,63v2M237.5,657v2M238.5,61v2M238.5,659v1M239.5,58v3M239.5,660v1M240.5,56v2M240.5,661v1M241.5,54v2M241.5,662v1M242.5,52v2M242.5,663v2M243.5,50v2M243.5,665v1M244.5,666v2M245.5,668v1M246.5,669v2M247.5,671v1M248.5,672v1M249.5,673v1M250.5,674v1M251.5,675v2M252.5,677v1M253.5,678v2M254.5,680v1M255.5,681v2M256.5,683v1M257.5,684v1M258.5,685v1M259.5,686v1M260.5,687v2M261.5,689v1M262.5,690v2M263.5,692v1M264.5,693v1M265.5,694v1M266.5,695v1M267.5,696v2M268.5,698v1M269.5,699v2M270.5,701v1M271.5,702v1M272.5,703v1M273.5,704v1M274.5,705v2M275.5,707v1M276.5,708v2M277.5,710v1M278.5,711v2M279.5,713v1M280.5,714v1M281.5,715v1M282.5,716v1M283.5,717v2M284.5,719v1M285.5,720v2M286.5,722v1M287.5,723v1M288.5,724v1M289.5,725v1M290.5,726v2M291.5,728v1M292.5,729v1M293.5,730v1M294.5,731v1M295.5,732v2M296.5,734v1M297.5,735v2M298.5,737v1M299.5,738v1M300.5,739v1M301.5,740v1M302.5,741v1M303.5,742v1M304.5,743v1M305.5,744v2M306.5,746v1M307.5,747v1M308.5,748v1M309.5,749v1" stroke="#000080" shape-rendering="crispEdges"/>
<path d="M212.5,349v57M213.5,325v24M213.5,406v6M214.5,316v9M214.5,412v9M215.5,307v9M215.5,421v9M216.5,301v6M216.5,430v9M217.5,292v9M217.5,439v9M218.5,286v6M218.5,448v3M219.5,280v6M219.5,451v6M220.5,274v6M220.5,457v6M221.5,268v6M221.5,463v3M222.5,262v6M222.5,466v6M223.5,259v3M223.5,472v3M224.5,253v6M224.5,475v3M225.5,247v6M225.5,478v6M226.5,244v3M226.5,484v3M227.5,238v6M227.5,487v3M228.5,235v3M228.5,490v3M229.5,229v6M229.5,493v3M230.5,226v3M230.5,496v3M231.5,220v6M231.5,499v3M232.5,217v3M232.5,502v3M233.5,214v3M233.5,505v3M234.5,208v6M234.5,508v3M235.5,205v3M235.5,511v3M236.5,202v3M236.5,514v3M237.5,199v3M237.5,517v3M238.5,196v3M238.5,520v3M239.5,190v6M239.5,523v3M240.5,187v3M240.5,526v3M241.5,184v3M241.5,529v3M242.5,181v3M242.5,532v2M243.5,178v3M243.5,534v2M244.5,175v3M244.5,536v2M245.5,172v3M245.5,538v3M246.5,169v3M246.5,541v3M247.5,166v3M247.5,544v2M248.5,163v3M248.5,546v2M249.5,160v3M249.5,548v2M250.5,157v3M250.5,550v2M251.5,154v3M251.5,552v2M252.5,151v3M252.5,554v2M253.5,148v3M253.5,556v3M254.5,145v3M254.5,559v2M255.5,142v3M255.5,561v2M256.5,139v3M256.5,563v2M257.5,136v3M257.5,565v2M258.5,133v3M258.5,567v2M259.5,130v3M259.5,569v2M260.5,127v3M260.5,571v2M261.5,124v3M261.5,573v2M262.5,122v2M262.5,575v1M263.5,120v2M263.5,576v2M264.5,118v2M264.5,578v2M265.5,115v3M265.5,580v2M266.5,112v3M266.5,582v2M267.5,109v3M267.5,584v2M268.5,106v3M268.5,586v2M269.5,103v3M269.5,588v2M270.5,101v2M270.5,590v1M271.5,99v2M271.5,591v2M272.5,97v2M272.5,593v2M273.5,94v3M273.5,595v2M274.5,91v3M274.5,597v2M275.5,88v3M275.5,599v1M276.5,86v2M276.5,600v2M277.5,84v2M277.5,602v2M278.5,82v2M278.5,604v2M279.5,79v3M279.5,606v2M280.5,76v3M280.5,608v1M281.5,74v2M281.5,609v2M282.5,72v2M282.5,611v2M283.5,70v2M283.5,613v2M284.5,67v3M284.5,615v2M285.5,65v2M285.5,617v1M286.5,63v2M286.5,618v2M287.5,61v2M287.5,620v1M288.5,58v3M288.5,621v2M289.5,55v3M289.5,623v1M290.5,53v2M290.5,624v2M291.5,51v2M291.5,626v2M292.5,50v1M292.5,628v2M293.5,630v2M294.5,632v1M295.5,633v2M296.5,635v1M297.5,636v2M298.5,638v1M299.5,639v2M300.5,641v1M301.5,642v2M302.5,644v1M303.5,645v2M304.5,647v1M305.5,648v2M306.5,650v1M307.5,651v2M308.5,653v1M309.5,654v2M310.5,656v1M311.5,657v2M312.5,659v2M313.5,661v2M314.5,663v2M315.5,665v1M316.5,666v2M317.5,668v1M318.5,669v2M319.5,671v1M320.5,672v2M321.5,674v1M322.5,675v2M323.5,677v1M324.5,678v2M325.5,680v1M326.5,681v2M327.5,683v1M328.5,684v2M329.5,686v1M330.5,687v2M331.5,689v1M332.5,690v2M333.5,692v2M334.5,694v2M335.5,696v2M336.5,698v1M337.5,699v2M338.5,701v1M339.5,702v2M340.5,704v2M341.5,706v2M342.5,708v2M343.5,710v1M344.5,711v2M345.5,713v1M346.5,714v2M347.5,716v2M348.5,718v2M349.5,720v2M350.5,722v1M351.5,723v2M352.5,725v1M353.5,726v2M354.5,728v2M355.5,730v2M356.5,732v2M357.5,734v1M358.5,735v2M359.5,737v1M360.5,738v2M361.5,740v1M362.5,741v2M363.5,743v1M364.5,744v2M365.5,746v1M366.5,747v2M367.5,749v1" stroke="#000080" shape-rendering="crispEdges"/>
<path d="M293.5,319v18M294.5,301v18M294.5,337v27M295.5,289v12M295.5,364v21M296.5,280v9M296.5,385v12M297.5,271v9M297.5,397v6M298.5,262v9M298.5,403v6M299.5,256v6M299.5,409v3M300.5,247v9M300.5,412v6M301.5,241v6M301.5,418v6M302.5,235v6M302.5,424v6M303.5,229v6M303.5,430v3M304.5,223v6M304.5,433v6M305.5,217v6M305.5,439v6M306.5,214v3M306.5,445v3M307.5,208v6M307.5,448v6M308.5,205v3M308.5,454v3M309.5,199v6M309.5,457v3M310.5,196v3M310.5,460v3M311.5,190v6M311.5,463v6M312.5,187v3M312.5,469v3M313.5,181v6M313.5,472v3M314.5,178v3M314.5,475v3M315.5,175v3M315.5,478v3M316.5,172v3M316.5,481v3M317.5,166v6M317.5,484v3M318.5,163v3M318.5,487v3M319.5,160v3M319.5,490v3M320.5,157v3M320.5,493v3M321.5,154v3M321.5,496v3M322.5,148v6M322.5,499v2M323.5,145v3M323.5,501v2M324.5,142v3M324.5,503v2M325.5,139v3M325.5,505v3M326.5,136v3M326.5,508v3M327.5,133v3M327.5,511v3M328.5,130v3M328.5,514v3M329.5,127v3M329.5,517v2M330.5,124v3M330.5,519v2M331.5,121v3M331.5,521v2M332.5,118v3M332.5,523v3M333.5,115v3M333.5,526v3M334.5,112v3M334.5,529v3M335.5,109v3M335.5,532v2M336.5,106v3M336.5,534v2M337.5,103v3M337.5,536v2M338.5,100v3M338.5,538v3M339.5,97v3M339.5,541v2M340.5,94v3M340.5,543v2M341.5,91v3M341.5,545v2M342.5,88v3M342.5,547v3M343.5,85v3M343.5,550v2M344.5,82v3M344.5,552v2M345.5,80v2M345.5,554v2M346.5,78v2M346.5,556v3M347.5,76v2M347.5,559v2M348.5,73v3M348.5,561v2M349.5,70v3M349.5,563v2M350.5,67v3M350.5,565v2M351.5,64v3M351.5,567v2M352.5,61v3M352.5,569v2M353.5,59v2M353.5,571v3M354.5,57v2M354.5,574v2M355.5,55v2M355.5,576v2M356.5,52v3M356.5,578v2M357.5,50v2M357.5,580v2M358.5,582v2M359.5,584v2M360.5,586v3M361.5,589v2M362.5,591v2M363.5,593v2M364.5,595v3M365.5,598v2M366.5,600v2M367.5,602v2M368.5,604v3M369.5,607v2M370.5,609v2M371.5,611v2M372.5,613v3M373.5,616v2M374.5,618v2M375.5,620v2M376.5,622v3M377.5,625v2M378.5,627v2M379.5,629v2M380.5,631v3M381.5,634v2M382.5,636v2M383.5,638v2M384.5,640v3M385.5,643v2M386.5,645v2M387.5,647v2M388.5,649v3M389.5,652v3M390.5,655v2M391.5,657v2M392.5,659v2M393.5,661v3M394.5,664v3M395.5,667v3M396.5,670v2M397.5,672v2M398.5,674v2M399.5,676v3M400.5,679v3M401.5,682v3M402.5,685v3M403.5,688v2M404.5,690v2M405.5,692v2M406.5,694v3M407.5,697v3M408.5,700v3M409.5,703v3M410.5,706v3M411.5,709v3M412.5,712v3M413.5,715v3M414.5,718v3M415.5,721v3M416.5,724v3M417.5,727v3M418.5,730v3M419.5,733v3M420.5,736v3M421.5,739v3M422.5,742v3M423.5,745v2M424.5,747v2M425.5,749v1" stroke="#000080" shape-rendering="crispEdges"/>
<path d="M410.5,268v51M411.5,247v21M411.5,319v15M412.5,232v15M412.5,334v9M413.5,223v9M413.5,343v6M414.5,214v9M414.5,349v9M415.5,205v9M415.5,358v9M416.5,199v6M416.5,367v9M417.5,193v6M417.5,376v9M418.5,187v6M418.5,385v6M419.5,181v6M419.5,391v6M420.5,175v6M420.5,397v6M421.5,169v6M421.5,403v3M422.5,166v3M422.5,406v3M423.5,160v6M423.5,409v6M424.5,154v6M424.5,415v3M425.5,151v3M425.5,418v6M426.5,145v6M426.5,424v3M427.5,142v3M427.5,427v6M428.5,136v6M428.5,433v6M429.5,133v3M429.5,439v3M430.5,130v3M430.5,442v6M431.5,124v6M431.5,448v3M432.5,121v3M432.5,451v6M433.5,118v3M433.5,457v3M434.5,115v3M434.5,460v3M435.5,109v6M435.5,463v6M436.5,106v3M436.5,469v3M437.5,103v3M437.5,472v3M438.5,100v3M438.5,475v6M439.5,97v3M439.5,481v3M440.5,91v6M440.5,484v3M441.5,88v3M441.5,487v3M442.5,85v3M442.5,490v6M443.5,82v3M443.5,496v3M444.5,79v3M444.5,499v3M445.5,76v3M445.5,502v6M446.5,73v3M446.5,508v3M447.5,70v3M447.5,511v3M448.5,67v3M448.5,514v6M449.5,64v3M449.5,520v3M450.5,61v3M450.5,523v6M451.5,58v3M451.5,529v3M452.5,55v3M452.5,532v6M453.5,52v3M453.5,538v3M454.5,50v2M454.5,541v6M455.5,547v3M456.5,550v6M457.5,556v3M458.5,559v6M459.5,565v6M460.5,571v6M461.5,577v6M462.5,583v3M463.5,586v9M464.5,595v6M465.5,601v6M466.5,607v6M467.5,613v9M468.5,622v6M469.5,628v9M470.5,637v9M471.5,646v6M472.5,652v9M473.5,661v9M474.5,670v9M475.5,679v9M476.5,688v12M477.5,700v12M478.5,712v9M479.5,721v9M480.5,730v6M481.5,736v6M482.5,742v6M483.5,748v2" stroke="#000080" shape-rendering="crispEdges"/>
<path d="M541.5,724v26M542.5,712v12M543.5,700v12M544.5,691v9M545.5,679v12M546.5,670v9M547.5,661v9M548.5,652v9M549.5,643v9M550.5,637v6M551.5,628v9M552.5,622v6M553.5,613v9M554.5,607v6M555.5,601v6M556.5,592v9M557.5,586v6M558.5,580v6M559.5,571v9M560.5,565v6M561.5,559v6M562.5,550v9M563.5,544v6M564.5,538v6M565.5,529v9M566.5,523v6M567.5,514v9M568.5,508v6M569.5,499v9M570.5,493v6M571.5,484v9M572.5,475v9M573.5,466v9M574.5,457v9M575.5,448v9M576.5,439v9M577.5,433v6M578.5,421v12M579.5,403v18M580.5,388v15M581.5,376v12M582.5,364v12M583.5,319v45M584.5,289v30M585.5,247v42M586.5,217v30M587.5,202v15M588.5,190v12M589.5,178v12M590.5,169v9M591.5,160v9M592.5,151v9M593.5,142v9M594.5,136v6M595.5,130v6M596.5,124v6M597.5,118v6M598.5,112v6M599.5,106v6M600.5,100v6M601.5,94v6M602.5,88v6M603.5,85v3M604.5,79v6M605.5,76v3M606.5,70v6M607.5,67v3M608.5,61v6M609.5,58v3M610.5,52v6M611.5,50v2" stroke="#000080" shape-rendering="crispEdges"/>
<path d="M600.5,748v2M601.5,736v12M602.5,730v6M603.5,724v6M604.5,718v6M605.5,712v6M606.5,706v6M607.5,703v3M608.5,697v6M609.5,694v3M610.5,688v6M611.5,685v3M612.5,679v6M613.5,676v3M614.5,670v6M615.5,667v3M616.5,661v6M617.5,658v3M618.5,655v3M619.5,649v6M620.5,646v3M621.5,643v3M622.5,640v3M623.5,634v6M624.5,631v3M625.5,628v3M626.5,625v3M627.5,622v3M628.5,619v3M629.5,613v6M630.5,610v3M631.5,607v3M632.5,604v3M633.5,601v3M634.5,598v3M635.5,595v3M636.5,592v3M637.5,589v3M638.5,586v3M639.5,583v3M640.5,580v3M641.5,577v3M642.5,574v3M643.5,571v3M644.5,568v3M645.5,565v3M646.5,562v3M647.5,559v3M648.5,556v3M649.5,553v3M650.5,550v3M651.5,547v3M652.5,544v3M653.5,541v3M654.5,538v3M655.5,535v3M656.5,532v3M657.5,529v3M658.5,526v3M659.5,523v3M660.5,521v2M661.5,519v2" stroke="#000080" shape-rendering="crispEdges"/>
<path d="M660.5,745v5M661.5,739v6" stroke="#000080" shape-rendering="crispEdges"/>
<line x1="772.5" y1="749.5" x2="1471.5" y2="50.5" stroke="#fff" stroke-width="1" shape-rendering="crispEdges"/>
<line x1="712.5" y1="749.5" x2="1411.5" y2="50.5" stroke="#fff" stroke-width="1" shape-rendering="crispEdges"/>
<line x1="652.5" y1="749.5" x2="1351.5" y2="50.5" stroke="#fff" stroke-width="1" shape-rendering="crispEdges"/>
<line x1="592.5" y1="749.5" x2="1291.5" y2="50.5" stroke="#fff" stroke-width="1" shape-rendering="crispEdges"/>
<line x1="532.5" y1="749.5" x2="1231.5" y2="50.5" stroke="#fff" stroke-width="1" shape-rendering="crispEdges"/>
<line x1="472.5" y1="749.5" x2="1171.5" y2="50.5" stroke="#fff" stroke-width="1" shape-rendering="crispEdges"/>
<line x1="412.5" y1="749.5" x2="1111.5" y2="50.5" stroke="#fff" stroke-width="1" shape-rendering="crispEdges"/>
<line x1="352.5" y1="749.5" x2="1051.5" y2="50.5" stroke="#fff" stroke-width="1" shape-rendering="crispEdges"/>
<line x1="292.5" y1="749.5" x2="991.5" y2="50.5" stroke="#fff" stroke-width="1" shape-rendering="crispEdges"/>
<line x1="232.5" y1="749.5" x2="931.5" y2="50.5" stroke="#fff" stroke-width="1" shape-rendering="crispEdges"/>
<line x1="172.5" y1="749.5" x2="871.5" y2="50.5" stroke="#fff" stroke-width="1" shape-rendering="crispEdges"/>
<line x1="112.5" y1="749.5" x2="811.5" y2="50.5" stroke="#fff" stroke-width="1" shape-rendering="crispEdges"/>
<line x1="52.5" y1="749.5" x2="751.5" y2="50.5" stroke="#fff" stroke-width="1" shape-rendering="crispEdges"/>
<line x1="-7.5" y1="749.5" x2="691.5" y2="50.5" stroke="#fff" stroke-width="1" shape-rendering="crispEdges"/>
<line x1="-67.5" y1="749.5" x2="631.5" y2="50.5" stroke="#fff" stroke-width="1" shape-rendering="crispEdges"/>
<line x1="-127.5" y1="749.5" x2="571.5" y2="50.5" stroke="#fff" stroke-width="1" shape-rendering="crispEdges"/>
<line x1="-187.5" y1="749.5" x2="511.5" y2="50.5" stroke="#fff" stroke-width="1" shape-rendering="crispEdges"/>
<line x1="-247.5" y1="749.5" x2="451.5" y2="50.5" stroke="#fff" stroke-width="1" shape-rendering="crispEdges"/>
<line x1="-307.5" y1="749.5" x2="391.5" y2="50.5" stroke="#fff" stroke-width="1" shape-rendering="crispEdges"/>
<line x1="-367.5" y1="749.5" x2="331.5" y2="50.5" stroke="#fff" stroke-width="1" shape-rendering="crispEdges"/>
<line x1="-427.5" y1="749.5" x2="271.5" y2="50.5" stroke="#fff" stroke-width="1" shape-rendering="crispEdges"/>
<line x1="-487.5" y1="749.5" x2="211.5" y2="50.5" stroke="#fff" stroke-width="1" shape-rendering="crispEdges"/>
<line x1="-547.5" y1="749.5" x2="151.5" y2="50.5" stroke="#fff" stroke-width="1" shape-rendering="crispEdges"/>
<line x1="-607.5" y1="749.5" x2="91.5" y2="50.5" stroke="#fff" stroke-width="1" shape-rendering="crispEdges"/>
<line x1="-667.5" y1="749.5" x2="31.5" y2="50.5" stroke="#fff" stroke-width="1" shape-rendering="crispEdges"/>
<line x1="-727.5" y1="749.5" x2="-28.5" y2="50.5" stroke="#fff" stroke-width="1" shape-rendering="crispEdges"/>
<line x1="-787.5" y1="749.5" x2="-88.5" y2="50.5" stroke="#fff" stroke-width="1" shape-rendering="crispEdges"/>
<line x1="-847.5" y1="749.5" x2="-148.5" y2="50.5" stroke="#fff" stroke-width="1" shape-rendering="crispEdges"/>
<line x1="-907.5" y1="749.5" x2="-208.5" y2="50.5" stroke="#fff" stroke-width="1" shape-rendering="crispEdges"/>
<line x1="-967.5" y1="749.5" x2="-268.5" y2="50.5" stroke="#fff" stroke-width="1" shape-rendering="crispEdges"/>
<line x1="-1027.5" y1="749.5" x2="-328.5" y2="50.5" stroke="#fff" stroke-width="1" shape-rendering="crispEdges"/>
<line x1="-1087.5" y1="749.5" x2="-388.5" y2="50.5" stroke="#fff" stroke-width="1" shape-rendering="crispEdges"/>
<line x1="-1147.5" y1="749.5" x2="-448.5" y2="50.5" stroke="#fff" stroke-width="1" shape-rendering="crispEdges"/>
<line x1="-1207.5" y1="749.5" x2="-508.5" y2="50.5" stroke="#fff" stroke-width="1" shape-rendering="crispEdges"/>
<line x1="-1267.5" y1="749.5" x2="-568.5" y2="50.5" stroke="#fff" stroke-width="1" shape-rendering="crispEdges"/>
<line x1="-1327.5" y1="749.5" x2="-628.5" y2="50.5" stroke="#fff" stroke-width="1" shape-rendering="crispEdges"/>
<line x1="61.5" y1="50.5" x2="661.5" y2="50.5" stroke="#fff" stroke-width="1" shape-rendering="crispEdges"/>
<line x1="61.5" y1="321.5" x2="661.5" y2="321.5" stroke="#fff" stroke-width="1" shape-rendering="crispEdges"/>
<line x1="61.5" y1="449.5" x2="661.5" y2="449.5" stroke="#fff" stroke-width="1" shape-rendering="crispEdges"/>
<line x1="61.5" y1="529.5" x2="661.5" y2="529.5" stroke="#fff" stroke-width="1" shape-rendering="crispEdges"/>
<line x1="61.5" y1="586.5" x2="661.5" y2="586.5" stroke="#fff" stroke-width="1" shape-rendering="crispEdges"/>
<line x1="61.5" y1="630.5" x2="661.5" y2="630.5" stroke="#fff" stroke-width="1" shape-rendering="crispEdges"/>
<line x1="61.5" y1="665.5" x2="661.5" y2="665.5" stroke="#fff" stroke-width="1" shape-rendering="crispEdges"/>
<line x1="61.5" y1="694.5" x2="661.5" y2="694.5" stroke="#fff" stroke-width="1" shape-rendering="crispEdges"/>
<line x1="61.5" y1="719.5" x2="661.5" y2="719.5" stroke="#fff" stroke-width="1" shape-rendering="crispEdges"/>
<line x1="61.5" y1="740.5" x2="661.5" y2="740.5" stroke="#fff" stroke-width="1" shape-rendering="crispEdges"/>
</g>
<rect x="61.5" y="50.5" width="600" height="699" fill="none" stroke="#fff" shape-rendering="crispEdges"/>
<line x1="55.5" y1="50.5" x2="61.5" y2="50.5" stroke="#fff" stroke-width="1" shape-rendering="crispEdges"/>
<line x1="661.5" y1="50.5" x2="666.5" y2="50.5" stroke="#fff" stroke-width="1" shape-rendering="crispEdges"/>
<line x1="55.5" y1="321.5" x2="61.5" y2="321.5" stroke="#fff" stroke-width="1" shape-rendering="crispEdges"/>
<line x1="661.5" y1="321.5" x2="666.5" y2="321.5" stroke="#fff" stroke-width="1" shape-rendering="crispEdges"/>
<line x1="55.5" y1="449.5" x2="61.5" y2="449.5" stroke="#fff" stroke-width="1" shape-rendering="crispEdges"/>
<line x1="661.5" y1="449.5" x2="666.5" y2="449.5" stroke="#fff" stroke-width="1" shape-rendering="crispEdges"/>
<line x1="55.5" y1="529.5" x2="61.5" y2="529.5" stroke="#fff" stroke-width="1" shape-rendering="crispEdges"/>
<line x1="661.5" y1="529.5" x2="666.5" y2="529.5" stroke="#fff" stroke-width="1" shape-rendering="crispEdges"/>
<line x1="55.5" y1="586.5" x2="61.5" y2="586.5" stroke="#fff" stroke-width="1" shape-rendering="crispEdges"/>
<line x1="661.5" y1="586.5" x2="666.5" y2="586.5" stroke="#fff" stroke-width="1" shape-rendering="crispEdges"/>
<line x1="55.5" y1="630.5" x2="61.5" y2="630.5" stroke="#fff" stroke-width="1" shape-rendering="crispEdges"/>
<line x1="661.5" y1="630.5" x2="666.5" y2="630.5" stroke="#fff" stroke-width="1" shape-rendering="crispEdges"/>
<line x1="55.5" y1="665.5" x2="61.5" y2="665.5" stroke="#fff" stroke-width="1" shape-rendering="crispEdges"/>
<line x1="661.5" y1="665.5" x2="666.5" y2="665.5" stroke="#fff" stroke-width="1" shape-rendering="crispEdges"/>
<line x1="55.5" y1="694.5" x2="61.5" y2="694.5" stroke="#fff" stroke-width="1" shape-rendering="crispEdges"/>
<line x1="661.5" y1="694.5" x2="666.5" y2="694.5" stroke="#fff" stroke-width="1" shape-rendering="crispEdges"/>
<line x1="55.5" y1="719.5" x2="61.5" y2="719.5" stroke="#fff" stroke-width="1" shape-rendering="crispEdges"/>
<line x1="661.5" y1="719.5" x2="666.5" y2="719.5" stroke="#fff" stroke-width="1" shape-rendering="crispEdges"/>
<line x1="55.5" y1="740.5" x2="61.5" y2="740.5" stroke="#fff" stroke-width="1" shape-rendering="crispEdges"/>
<line x1="661.5" y1="740.5" x2="666.5" y2="740.5" stroke="#fff" stroke-width="1" shape-rendering="crispEdges"/>
<g clip-path="url(#cp)">
<polygon points="394.4,362.5 391.4,394.5 394.9,423.1 397.1,449.4 398.9,472.3 403.3,493.7 405.8,512.8 408.8,529.4 413.3,545.5 417.7,560.3 421.4,574.3 425.4,586.5 429.5,598.6 432.8,610.7 435.5,620.3 437.9,630.3 439.4,640.6 447.7,648.8 447.7,657.7 449.8,665.6 451.3,669.9 452.4,683.2 456.0,696.4 462.3,705.1 468.2,709.3 468.2,709.3 467.6,705.1 466.6,696.4 465.0,683.2 463.2,669.9 462.5,665.6 461.2,657.7 459.8,648.8 458.6,640.6 456.8,630.3 454.6,620.3 452.4,610.7 449.5,598.6 446.4,586.5 443.3,574.3 439.8,560.3 435.6,545.5 431.6,529.4 427.6,512.8 422.5,493.7 417.7,472.3 410.5,449.4 404.3,423.1 398.9,394.5 398.4,390.1 396.9,381.3 395.4,371.0" fill="#008000" shape-rendering="crispEdges"/>
<line x1="61.0" y1="709.5" x2="626.0" y2="709.5" stroke="#ff00ff" stroke-width="1" shape-rendering="crispEdges"/>
<path d="M209,733.5h5M211.5,731v5" stroke="#fff" stroke-width="1" shape-rendering="crispEdges"/>
<path d="M208,730.5h5M210.5,728v5" stroke="#fff" stroke-width="1" shape-rendering="crispEdges"/>
<path d="M198,727.5h5M200.5,725v5" stroke="#fff" stroke-width="1" shape-rendering="crispEdges"/>
<path d="M180,720.5h5M182.5,718v5" stroke="#fff" stroke-width="1" shape-rendering="crispEdges"/>
<path d="M178,713.5h5M180.5,711v5" stroke="#fff" stroke-width="1" shape-rendering="crispEdges"/>
<path d="M159,705.5h5M161.5,703v5" stroke="#fff" stroke-width="1" shape-rendering="crispEdges"/>
<path d="M284,696.5h5M286.5,694v5" stroke="#fff" stroke-width="1" shape-rendering="crispEdges"/>
<path d="M346,683.5h5M348.5,681v5" stroke="#fff" stroke-width="1" shape-rendering="crispEdges"/>
<path d="M368,669.5h5M370.5,667v5" stroke="#fff" stroke-width="1" shape-rendering="crispEdges"/>
<path d="M396,665.5h5M398.5,663v5" stroke="#fff" stroke-width="1" shape-rendering="crispEdges"/>
<path d="M415,657.5h5M417.5,655v5" stroke="#fff" stroke-width="1" shape-rendering="crispEdges"/>
<path d="M423,655.5h2M419,656.5h4M416,657.5h3M414,658.5h2M412,659.5h2M409,660.5h3M407,661.5h2M404,662.5h3M402,663.5h2M400,664.5h2M395,665.5h5M388,666.5h7M381,667.5h7M374,668.5h7M370,669.5h4M368,670.5h2M367,671.5h1M365,672.5h2M363,673.5h2M362,674.5h1M360,675.5h2M359,676.5h1M357,677.5h2M356,678.5h1M354,679.5h2M352,680.5h2M351,681.5h1M349,682.5h2M345,683.5h4M339,684.5h6M335,685.5h4M330,686.5h5M325,687.5h5M321,688.5h4M316,689.5h5M312,690.5h4M307,691.5h5M303,692.5h4M298,693.5h5M293,694.5h5M289,695.5h4M280,696.5h9M266,697.5h14M252,698.5h14M238,699.5h14M224,700.5h14M210,701.5h14M196,702.5h14M182,703.5h14M168,704.5h14M161,705.5h7M163,706.5h2M165,707.5h3M168,708.5h2M170,709.5h3M173,710.5h2M175,711.5h2M177,712.5h2M179,713.5h2M180,714.5h1M181,715.5h1M181,716.5h1M181,717.5h1M181,718.5h1M182,719.5h1M182,720.5h2M184,721.5h2M186,722.5h3M189,723.5h2M191,724.5h3M194,725.5h3M197,726.5h2M199,727.5h3M202,728.5h3M205,729.5h4M209,730.5h2M210,731.5h1M211,732.5h1M211,733.5h1" stroke="#c8c800" shape-rendering="crispEdges"/>
<path d="M59,665.5h5M61.5,663v5" stroke="#fff" stroke-width="1" shape-rendering="crispEdges"/>
<path d="M69,669.5h5M71.5,667v5" stroke="#fff" stroke-width="1" shape-rendering="crispEdges"/>
<path d="M71,683.5h5M73.5,681v5" stroke="#fff" stroke-width="1" shape-rendering="crispEdges"/>
<path d="M85,696.5h5M87.5,694v5" stroke="#fff" stroke-width="1" shape-rendering="crispEdges"/>
<path d="M121,705.5h5M123.5,703v5" stroke="#fff" stroke-width="1" shape-rendering="crispEdges"/>
<path d="M178,713.5h5M180.5,711v5" stroke="#fff" stroke-width="1" shape-rendering="crispEdges"/>
<path d="M206,720.5h5M208.5,718v5" stroke="#fff" stroke-width="1" shape-rendering="crispEdges"/>
<path d="M249,727.5h5M251.5,725v5" stroke="#fff" stroke-width="1" shape-rendering="crispEdges"/>
<path d="M284,730.5h5M286.5,728v5" stroke="#fff" stroke-width="1" shape-rendering="crispEdges"/>
<path d="M302,733.5h5M304.5,731v5" stroke="#fff" stroke-width="1" shape-rendering="crispEdges"/>
<path d="M59,648.5h5M61.5,646v5" stroke="#fff" stroke-width="1" shape-rendering="crispEdges"/>
<path d="M59,657.5h5M61.5,655v5" stroke="#fff" stroke-width="1" shape-rendering="crispEdges"/>
<path d="M301,733.5h5M303.5,731v5" stroke="#fff" stroke-width="1" shape-rendering="crispEdges"/>
<path d="M304,733.5h5M306.5,731v5" stroke="#fff" stroke-width="1" shape-rendering="crispEdges"/>
<path d="M61,665.5h2M63,666.5h2M65,667.5h3M68,668.5h2M70,669.5h2M71,670.5h1M71,671.5h1M71,672.5h1M72,673.5h1M72,674.5h1M72,675.5h1M72,676.5h1M72,677.5h1M72,678.5h1M72,679.5h1M73,680.5h1M73,681.5h1M73,682.5h1M73,683.5h1M74,684.5h1M75,685.5h1M76,686.5h1M77,687.5h1M78,688.5h1M79,689.5h2M81,690.5h1M82,691.5h1M83,692.5h1M84,693.5h1M85,694.5h1M86,695.5h1M87,696.5h3M90,697.5h4M94,698.5h4M98,699.5h4M102,700.5h4M106,701.5h4M110,702.5h4M114,703.5h4M118,704.5h4M122,705.5h5M127,706.5h7M134,707.5h7M141,708.5h7M148,709.5h8M156,710.5h7M163,711.5h7M170,712.5h7M177,713.5h6M183,714.5h4M187,715.5h4M191,716.5h4M195,717.5h4M199,718.5h4M203,719.5h4M207,720.5h5M212,721.5h6M218,722.5h6M224,723.5h6M230,724.5h6M236,725.5h6M242,726.5h6M248,727.5h9M257,728.5h12M269,729.5h12M281,730.5h9M290,731.5h6M296,732.5h6M302,733.5h3" stroke="#ffff00" shape-rendering="crispEdges"/>
<path d="M71,669.5h5M73.5,667v5" stroke="#fff" stroke-width="1" shape-rendering="crispEdges"/>
<path d="M62,696.5h5M64.5,694v5" stroke="#fff" stroke-width="1" shape-rendering="crispEdges"/>
<path d="M61,705.5h5M63.5,703v5" stroke="#fff" stroke-width="1" shape-rendering="crispEdges"/>
<path d="M59,713.5h5M61.5,711v5" stroke="#fff" stroke-width="1" shape-rendering="crispEdges"/>
<path d="M59,720.5h5M61.5,718v5" stroke="#fff" stroke-width="1" shape-rendering="crispEdges"/>
<path d="M60,727.5h5M62.5,725v5" stroke="#fff" stroke-width="1" shape-rendering="crispEdges"/>
<path d="M60,730.5h5M62.5,728v5" stroke="#fff" stroke-width="1" shape-rendering="crispEdges"/>
<path d="M60,733.5h5M62.5,731v5" stroke="#fff" stroke-width="1" shape-rendering="crispEdges"/>
<path d="M61.5,665v1M61.5,711v12M62.5,665v1M62.5,707v4M62.5,723v11M63.5,666v1M63.5,701v6M64.5,666v1M64.5,696v5M65.5,666v1M65.5,695v1M66.5,667v1M66.5,694v1M67.5,667v1M67.5,693v1M68.5,667v1M68.5,692v1M69.5,668v1M69.5,691v1M70.5,668v1M70.5,689v2M71.5,668v1M71.5,688v1M72.5,669v1M72.5,687v1M73.5,669v7M73.5,685v2M74.5,676v9" stroke="#e07000" shape-rendering="crispEdges"/>
<path d="M197,50.5h5M199.5,48v5" stroke="#fff" stroke-width="1" shape-rendering="crispEdges"/>
<path d="M167,146.5h5M169.5,144v5" stroke="#fff" stroke-width="1" shape-rendering="crispEdges"/>
<path d="M287,218.5h5M289.5,216v5" stroke="#fff" stroke-width="1" shape-rendering="crispEdges"/>
<path d="M377,274.5h5M379.5,272v5" stroke="#fff" stroke-width="1" shape-rendering="crispEdges"/>
<path d="M509,321.5h5M511.5,319v5" stroke="#fff" stroke-width="1" shape-rendering="crispEdges"/>
<path d="M575,360.5h5M577.5,358v5" stroke="#fff" stroke-width="1" shape-rendering="crispEdges"/>
<path d="M581,394.5h5M583.5,392v5" stroke="#fff" stroke-width="1" shape-rendering="crispEdges"/>
<path d="M557,423.5h5M559.5,421v5" stroke="#fff" stroke-width="1" shape-rendering="crispEdges"/>
<path d="M497,449.5h5M499.5,447v5" stroke="#fff" stroke-width="1" shape-rendering="crispEdges"/>
<path d="M437,472.5h5M439.5,470v5" stroke="#fff" stroke-width="1" shape-rendering="crispEdges"/>
<path d="M407,493.5h5M409.5,491v5" stroke="#fff" stroke-width="1" shape-rendering="crispEdges"/>
<path d="M377,512.5h5M379.5,510v5" stroke="#fff" stroke-width="1" shape-rendering="crispEdges"/>
<path d="M359,529.5h5M361.5,527v5" stroke="#fff" stroke-width="1" shape-rendering="crispEdges"/>
<path d="M347,545.5h5M349.5,543v5" stroke="#fff" stroke-width="1" shape-rendering="crispEdges"/>
<path d="M335,560.5h5M337.5,558v5" stroke="#fff" stroke-width="1" shape-rendering="crispEdges"/>
<path d="M323,574.5h5M325.5,572v5" stroke="#fff" stroke-width="1" shape-rendering="crispEdges"/>
<path d="M323,586.5h5M325.5,584v5" stroke="#fff" stroke-width="1" shape-rendering="crispEdges"/>
<path d="M317,598.5h5M319.5,596v5" stroke="#fff" stroke-width="1" shape-rendering="crispEdges"/>
<path d="M305,610.5h5M307.5,608v5" stroke="#fff" stroke-width="1" shape-rendering="crispEdges"/>
<path d="M287,620.5h5M289.5,618v5" stroke="#fff" stroke-width="1" shape-rendering="crispEdges"/>
<path d="M275,630.5h5M277.5,628v5" stroke="#fff" stroke-width="1" shape-rendering="crispEdges"/>
<path d="M263,640.5h5M265.5,638v5" stroke="#fff" stroke-width="1" shape-rendering="crispEdges"/>
<path d="M244,648.5h5M246.5,646v5" stroke="#fff" stroke-width="1" shape-rendering="crispEdges"/>
<path d="M221,657.5h5M223.5,655v5" stroke="#fff" stroke-width="1" shape-rendering="crispEdges"/>
<path d="M208,665.5h5M210.5,663v5" stroke="#fff" stroke-width="1" shape-rendering="crispEdges"/>
<path d="M185,669.5h5M187.5,667v5" stroke="#fff" stroke-width="1" shape-rendering="crispEdges"/>
<path d="M168,683.5h5M170.5,681v5" stroke="#fff" stroke-width="1" shape-rendering="crispEdges"/>
<path d="M119,696.5h5M121.5,694v5" stroke="#fff" stroke-width="1" shape-rendering="crispEdges"/>
<path d="M131,705.5h5M133.5,703v5" stroke="#fff" stroke-width="1" shape-rendering="crispEdges"/>
<path d="M119,713.5h5M121.5,711v5" stroke="#fff" stroke-width="1" shape-rendering="crispEdges"/>
<path d="M119,720.5h5M121.5,718v5" stroke="#fff" stroke-width="1" shape-rendering="crispEdges"/>
<path d="M107,727.5h5M109.5,725v5" stroke="#fff" stroke-width="1" shape-rendering="crispEdges"/>
<path d="M101,730.5h5M103.5,728v5" stroke="#fff" stroke-width="1" shape-rendering="crispEdges"/>
<path d="M101,733.5h5M103.5,731v5" stroke="#fff" stroke-width="1" shape-rendering="crispEdges"/>
<path d="M199,50.5h1M199,51.5h1M198,52.5h1M198,53.5h1M198,54.5h1M197,55.5h1M197,56.5h1M197,57.5h1M197,58.5h1M196,59.5h1M196,60.5h1M196,61.5h1M195,62.5h1M195,63.5h1M195,64.5h1M194,65.5h1M194,66.5h1M194,67.5h1M193,68.5h1M193,69.5h1M193,70.5h1M192,71.5h1M192,72.5h1M192,73.5h1M192,74.5h1M191,75.5h1M191,76.5h1M191,77.5h1M190,78.5h1M190,79.5h1M190,80.5h1M189,81.5h1M189,82.5h1M189,83.5h1M188,84.5h1M188,85.5h1M188,86.5h1M187,87.5h1M187,88.5h1M187,89.5h1M187,90.5h1M186,91.5h1M186,92.5h1M186,93.5h1M185,94.5h1M185,95.5h1M185,96.5h1M184,97.5h1M184,98.5h1M184,99.5h1M183,100.5h1M183,101.5h1M183,102.5h1M182,103.5h1M182,104.5h1M182,105.5h1M182,106.5h1M181,107.5h1M181,108.5h1M181,109.5h1M180,110.5h1M180,111.5h1M180,112.5h1M179,113.5h1M179,114.5h1M179,115.5h1M178,116.5h1M178,117.5h1M178,118.5h1M177,119.5h1M177,120.5h1M177,121.5h1M177,122.5h1M176,123.5h1M176,124.5h1M176,125.5h1M175,126.5h1M175,127.5h1M175,128.5h1M174,129.5h1M174,130.5h1M174,131.5h1M173,132.5h1M173,133.5h1M173,134.5h1M172,135.5h1M172,136.5h1M172,137.5h1M172,138.5h1M171,139.5h1M171,140.5h1M171,141.5h1M170,142.5h1M170,143.5h1M170,144.5h1M169,145.5h1M169,146.5h1M170,147.5h2M172,148.5h2M174,149.5h1M175,150.5h2M177,151.5h2M179,152.5h1M180,153.5h2M182,154.5h2M184,155.5h1M185,156.5h2M187,157.5h2M189,158.5h1M190,159.5h2M192,160.5h2M194,161.5h1M195,162.5h2M197,163.5h2M199,164.5h1M200,165.5h2M202,166.5h2M204,167.5h1M205,168.5h2M207,169.5h2M209,170.5h1M210,171.5h2M212,172.5h2M214,173.5h1M215,174.5h2M217,175.5h2M219,176.5h1M220,177.5h2M222,178.5h2M224,179.5h1M225,180.5h2M227,181.5h2M229,182.5h1M230,183.5h2M232,184.5h2M234,185.5h1M235,186.5h2M237,187.5h2M239,188.5h1M240,189.5h2M242,190.5h2M244,191.5h1M245,192.5h2M247,193.5h2M249,194.5h1M250,195.5h2M252,196.5h2M254,197.5h1M255,198.5h2M257,199.5h2M259,200.5h1M260,201.5h2M262,202.5h2M264,203.5h1M265,204.5h2M267,205.5h2M269,206.5h1M270,207.5h2M272,208.5h2M274,209.5h1M275,210.5h2M277,211.5h2M279,212.5h1M280,213.5h2M282,214.5h2M284,215.5h1M285,216.5h2M287,217.5h2M289,218.5h1M290,219.5h2M292,220.5h2M294,221.5h1M295,222.5h2M297,223.5h1M298,224.5h2M300,225.5h2M302,226.5h1M303,227.5h2M305,228.5h1M306,229.5h2M308,230.5h2M310,231.5h1M311,232.5h2M313,233.5h1M314,234.5h2M316,235.5h2M318,236.5h1M319,237.5h2M321,238.5h1M322,239.5h2M324,240.5h2M326,241.5h1M327,242.5h2M329,243.5h1M330,244.5h2M332,245.5h2M334,246.5h1M335,247.5h2M337,248.5h2M339,249.5h1M340,250.5h2M342,251.5h1M343,252.5h2M345,253.5h2M347,254.5h1M348,255.5h2M350,256.5h1M351,257.5h2M353,258.5h2M355,259.5h1M356,260.5h2M358,261.5h1M359,262.5h2M361,263.5h2M363,264.5h1M364,265.5h2M366,266.5h1M367,267.5h2M369,268.5h2M371,269.5h1M372,270.5h2M374,271.5h1M375,272.5h2M377,273.5h2M379,274.5h2M381,275.5h3M384,276.5h3M387,277.5h2M389,278.5h3M392,279.5h3M395,280.5h3M398,281.5h3M401,282.5h2M403,283.5h3M406,284.5h3M409,285.5h3M412,286.5h3M415,287.5h2M417,288.5h3M420,289.5h3M423,290.5h3M426,291.5h3M429,292.5h2M431,293.5h3M434,294.5h3M437,295.5h3M440,296.5h3M443,297.5h3M446,298.5h2M448,299.5h3M451,300.5h3M454,301.5h3M457,302.5h3M460,303.5h2M462,304.5h3M465,305.5h3M468,306.5h3M471,307.5h3M474,308.5h2M476,309.5h3M479,310.5h3M482,311.5h3M485,312.5h3M488,313.5h2M490,314.5h3M493,315.5h3M496,316.5h3M499,317.5h3M502,318.5h2M504,319.5h3M507,320.5h3M510,321.5h2M512,322.5h2M514,323.5h2M516,324.5h1M517,325.5h2M519,326.5h2M521,327.5h2M523,328.5h1M524,329.5h2M526,330.5h2M528,331.5h1M529,332.5h2M531,333.5h2M533,334.5h1M534,335.5h2M536,336.5h2M538,337.5h1M539,338.5h2M541,339.5h2M543,340.5h2M545,341.5h1M546,342.5h2M548,343.5h2M550,344.5h1M551,345.5h2M553,346.5h2M555,347.5h1M556,348.5h2M558,349.5h2M560,350.5h1M561,351.5h2M563,352.5h2M565,353.5h2M567,354.5h1M568,355.5h2M570,356.5h2M572,357.5h1M573,358.5h2M575,359.5h2M577,360.5h1M577,361.5h1M577,362.5h1M578,363.5h1M578,364.5h1M578,365.5h1M578,366.5h1M578,367.5h1M578,368.5h1M579,369.5h1M579,370.5h1M579,371.5h1M579,372.5h1M579,373.5h1M579,374.5h1M580,375.5h1M580,376.5h1M580,377.5h1M580,378.5h1M580,379.5h1M581,380.5h1M581,381.5h1M581,382.5h1M581,383.5h1M581,384.5h1M581,385.5h1M582,386.5h1M582,387.5h1M582,388.5h1M582,389.5h1M582,390.5h1M582,391.5h1M583,392.5h1M583,393.5h1M583,394.5h1M582,395.5h1M581,396.5h1M581,397.5h1M580,398.5h1M579,399.5h1M578,400.5h1M577,401.5h1M576,402.5h1M576,403.5h1M575,404.5h1M574,405.5h1M573,406.5h1M572,407.5h1M571,408.5h1M571,409.5h1M570,410.5h1M569,411.5h1M568,412.5h1M567,413.5h1M566,414.5h1M566,415.5h1M565,416.5h1M564,417.5h1M563,418.5h1M562,419.5h1M561,420.5h1M561,421.5h1M560,422.5h1M558,423.5h2M556,424.5h2M554,425.5h2M551,426.5h3M549,427.5h2M547,428.5h2M544,429.5h3M542,430.5h2M540,431.5h2M538,432.5h2M535,433.5h3M533,434.5h2M531,435.5h2M528,436.5h3M526,437.5h2M524,438.5h2M521,439.5h3M519,440.5h2M517,441.5h2M514,442.5h3M512,443.5h2M510,444.5h2M508,445.5h2M505,446.5h3M503,447.5h2M501,448.5h2M498,449.5h3M496,450.5h2M493,451.5h3M490,452.5h3M488,453.5h2M485,454.5h3M483,455.5h2M480,456.5h3M477,457.5h3M475,458.5h2M472,459.5h3M469,460.5h3M467,461.5h2M464,462.5h3M462,463.5h2M459,464.5h3M456,465.5h3M454,466.5h2M451,467.5h3M449,468.5h2M446,469.5h3M443,470.5h3M441,471.5h2M439,472.5h2M437,473.5h2M436,474.5h1M434,475.5h2M433,476.5h1M432,477.5h1M430,478.5h2M429,479.5h1M427,480.5h2M426,481.5h1M424,482.5h2M423,483.5h1M422,484.5h1M420,485.5h2M419,486.5h1M417,487.5h2M416,488.5h1M414,489.5h2M413,490.5h1M412,491.5h1M410,492.5h2M409,493.5h1M407,494.5h2M406,495.5h1M404,496.5h2M402,497.5h2M401,498.5h1M399,499.5h2M398,500.5h1M396,501.5h2M394,502.5h2M393,503.5h1M391,504.5h2M390,505.5h1M388,506.5h2M387,507.5h1M385,508.5h2M383,509.5h2M382,510.5h1M380,511.5h2M379,512.5h1M378,513.5h1M377,514.5h1M376,515.5h1M375,516.5h1M374,517.5h1M373,518.5h1M372,519.5h1M370,520.5h2M369,521.5h1M368,522.5h1M367,523.5h1M366,524.5h1M365,525.5h1M364,526.5h1M363,527.5h1M362,528.5h1M361,529.5h1M360,530.5h1M360,531.5h1M359,532.5h1M358,533.5h1M357,534.5h1M357,535.5h1M356,536.5h1M355,537.5h1M354,538.5h1M354,539.5h1M353,540.5h1M352,541.5h1M351,542.5h1M351,543.5h1M350,544.5h1M349,545.5h1M348,546.5h1M347,547.5h1M347,548.5h1M346,549.5h1M345,550.5h1M344,551.5h1M343,552.5h1M343,553.5h1M342,554.5h1M341,555.5h1M340,556.5h1M339,557.5h1M339,558.5h1M338,559.5h1M337,560.5h1M336,561.5h1M335,562.5h1M334,563.5h1M334,564.5h1M333,565.5h1M332,566.5h1M331,567.5h1M330,568.5h1M329,569.5h1M328,570.5h1M328,571.5h1M327,572.5h1M326,573.5h1M325,574.5h1M325,575.5h1M325,576.5h1M325,577.5h1M325,578.5h1M325,579.5h1M325,580.5h1M325,581.5h1M325,582.5h1M325,583.5h1M325,584.5h1M325,585.5h1M325,586.5h1M325,587.5h1M324,588.5h1M324,589.5h1M323,590.5h1M323,591.5h1M322,592.5h1M322,593.5h1M321,594.5h1M321,595.5h1M320,596.5h1M320,597.5h1M319,598.5h1M318,599.5h1M317,600.5h1M316,601.5h1M315,602.5h1M314,603.5h1M313,604.5h1M312,605.5h1M311,606.5h1M310,607.5h1M309,608.5h1M308,609.5h1M307,610.5h1M305,611.5h2M303,612.5h2M301,613.5h2M299,614.5h2M298,615.5h1M296,616.5h2M294,617.5h2M292,618.5h2M290,619.5h2M289,620.5h1M288,621.5h1M286,622.5h2M285,623.5h1M284,624.5h1M283,625.5h1M282,626.5h1M280,627.5h2M279,628.5h1M278,629.5h1M277,630.5h1M276,631.5h1M274,632.5h2M273,633.5h1M272,634.5h1M271,635.5h1M270,636.5h1M268,637.5h2M267,638.5h1M266,639.5h1M264,640.5h2M262,641.5h2M260,642.5h2M257,643.5h3M255,644.5h2M252,645.5h3M250,646.5h2M248,647.5h2M245,648.5h3M243,649.5h2M240,650.5h3M238,651.5h2M235,652.5h3M232,653.5h3M230,654.5h2M227,655.5h3M225,656.5h2M223,657.5h2M221,658.5h2M219,659.5h2M218,660.5h1M216,661.5h2M215,662.5h1M213,663.5h2M211,664.5h2M208,665.5h3M202,666.5h6M196,667.5h6M190,668.5h6M187,669.5h3M186,670.5h1M184,671.5h2M183,672.5h1M182,673.5h1M181,674.5h1M180,675.5h1M178,676.5h2M177,677.5h1M176,678.5h1M175,679.5h1M174,680.5h1M172,681.5h2M171,682.5h1M169,683.5h2M165,684.5h4M161,685.5h4M157,686.5h4M154,687.5h3M150,688.5h4M146,689.5h4M142,690.5h4M138,691.5h4M135,692.5h3M131,693.5h4M127,694.5h4M123,695.5h4M121,696.5h2M122,697.5h2M124,698.5h1M125,699.5h1M126,700.5h2M128,701.5h1M129,702.5h1M130,703.5h2M132,704.5h1M133,705.5h1M131,706.5h2M130,707.5h1M128,708.5h2M127,709.5h1M125,710.5h2M124,711.5h1M122,712.5h2M121,713.5h1M121,714.5h1M121,715.5h1M121,716.5h1M121,717.5h1M121,718.5h1M121,719.5h1M121,720.5h1M119,721.5h2M117,722.5h2M115,723.5h2M114,724.5h1M112,725.5h2M110,726.5h2M108,727.5h2M106,728.5h2M104,729.5h2M103,730.5h1M103,731.5h1M103,732.5h1M103,733.5h1" stroke="#00ff00" shape-rendering="crispEdges"/>
<path d="M209,50.5h5M211.5,48v5" stroke="#fff" stroke-width="1" shape-rendering="crispEdges"/>
<path d="M151,146.5h5M153.5,144v5" stroke="#fff" stroke-width="1" shape-rendering="crispEdges"/>
<path d="M189,218.5h5M191.5,216v5" stroke="#fff" stroke-width="1" shape-rendering="crispEdges"/>
<path d="M271,274.5h5M273.5,272v5" stroke="#fff" stroke-width="1" shape-rendering="crispEdges"/>
<path d="M391,321.5h5M393.5,319v5" stroke="#fff" stroke-width="1" shape-rendering="crispEdges"/>
<path d="M454,360.5h5M456.5,358v5" stroke="#fff" stroke-width="1" shape-rendering="crispEdges"/>
<path d="M453,394.5h5M455.5,392v5" stroke="#fff" stroke-width="1" shape-rendering="crispEdges"/>
<path d="M424,423.5h5M426.5,421v5" stroke="#fff" stroke-width="1" shape-rendering="crispEdges"/>
<path d="M365,449.5h5M367.5,447v5" stroke="#fff" stroke-width="1" shape-rendering="crispEdges"/>
<path d="M309,472.5h5M311.5,470v5" stroke="#fff" stroke-width="1" shape-rendering="crispEdges"/>
<path d="M282,493.5h5M284.5,491v5" stroke="#fff" stroke-width="1" shape-rendering="crispEdges"/>
<path d="M255,512.5h5M257.5,510v5" stroke="#fff" stroke-width="1" shape-rendering="crispEdges"/>
<path d="M236,529.5h5M238.5,527v5" stroke="#fff" stroke-width="1" shape-rendering="crispEdges"/>
<path d="M223,545.5h5M225.5,543v5" stroke="#fff" stroke-width="1" shape-rendering="crispEdges"/>
<path d="M212,560.5h5M214.5,558v5" stroke="#fff" stroke-width="1" shape-rendering="crispEdges"/>
<path d="M201,574.5h5M203.5,572v5" stroke="#fff" stroke-width="1" shape-rendering="crispEdges"/>
<path d="M199,586.5h5M201.5,584v5" stroke="#fff" stroke-width="1" shape-rendering="crispEdges"/>
<path d="M192,598.5h5M194.5,596v5" stroke="#fff" stroke-width="1" shape-rendering="crispEdges"/>
<path d="M181,610.5h5M183.5,608v5" stroke="#fff" stroke-width="1" shape-rendering="crispEdges"/>
<path d="M166,620.5h5M168.5,618v5" stroke="#fff" stroke-width="1" shape-rendering="crispEdges"/>
<path d="M160,630.5h5M162.5,628v5" stroke="#fff" stroke-width="1" shape-rendering="crispEdges"/>
<path d="M161,640.5h5M163.5,638v5" stroke="#fff" stroke-width="1" shape-rendering="crispEdges"/>
<path d="M161,648.5h5M163.5,646v5" stroke="#fff" stroke-width="1" shape-rendering="crispEdges"/>
<path d="M162,657.5h5M164.5,655v5" stroke="#fff" stroke-width="1" shape-rendering="crispEdges"/>
<path d="M168,665.5h5M170.5,663v5" stroke="#fff" stroke-width="1" shape-rendering="crispEdges"/>
<path d="M163,669.5h5M165.5,667v5" stroke="#fff" stroke-width="1" shape-rendering="crispEdges"/>
<path d="M171,683.5h5M173.5,681v5" stroke="#fff" stroke-width="1" shape-rendering="crispEdges"/>
<path d="M159,696.5h5M161.5,694v5" stroke="#fff" stroke-width="1" shape-rendering="crispEdges"/>
<path d="M249,705.5h5M251.5,703v5" stroke="#fff" stroke-width="1" shape-rendering="crispEdges"/>
<path d="M242,713.5h5M244.5,711v5" stroke="#fff" stroke-width="1" shape-rendering="crispEdges"/>
<path d="M242,720.5h5M244.5,718v5" stroke="#fff" stroke-width="1" shape-rendering="crispEdges"/>
<path d="M235,727.5h5M237.5,725v5" stroke="#fff" stroke-width="1" shape-rendering="crispEdges"/>
<path d="M232,730.5h5M234.5,728v5" stroke="#fff" stroke-width="1" shape-rendering="crispEdges"/>
<path d="M232,733.5h5M234.5,731v5" stroke="#fff" stroke-width="1" shape-rendering="crispEdges"/>
<path d="M211,50.5h1M210,51.5h1M210,52.5h1M209,53.5h1M209,54.5h1M208,55.5h1M207,56.5h1M207,57.5h1M206,58.5h1M206,59.5h1M205,60.5h1M204,61.5h1M204,62.5h1M203,63.5h1M203,64.5h1M202,65.5h1M201,66.5h1M201,67.5h1M200,68.5h1M200,69.5h1M199,70.5h1M198,71.5h1M198,72.5h1M197,73.5h1M197,74.5h1M196,75.5h1M195,76.5h1M195,77.5h1M194,78.5h1M193,79.5h1M193,80.5h1M192,81.5h1M192,82.5h1M191,83.5h1M190,84.5h1M190,85.5h1M189,86.5h1M189,87.5h1M188,88.5h1M187,89.5h1M187,90.5h1M186,91.5h1M186,92.5h1M185,93.5h1M184,94.5h1M184,95.5h1M183,96.5h1M183,97.5h1M182,98.5h1M181,99.5h1M181,100.5h1M180,101.5h1M180,102.5h1M179,103.5h1M178,104.5h1M178,105.5h1M177,106.5h1M177,107.5h1M176,108.5h1M175,109.5h1M175,110.5h1M174,111.5h1M174,112.5h1M173,113.5h1M172,114.5h1M172,115.5h1M171,116.5h1M171,117.5h1M170,118.5h1M169,119.5h1M169,120.5h1M168,121.5h1M168,122.5h1M167,123.5h1M166,124.5h1M166,125.5h1M165,126.5h1M164,127.5h1M164,128.5h1M163,129.5h1M163,130.5h1M162,131.5h1M161,132.5h1M161,133.5h1M160,134.5h1M160,135.5h1M159,136.5h1M158,137.5h1M158,138.5h1M157,139.5h1M157,140.5h1M156,141.5h1M155,142.5h1M155,143.5h1M154,144.5h1M154,145.5h1M153,146.5h1M154,147.5h1M154,148.5h1M155,149.5h1M155,150.5h1M156,151.5h1M156,152.5h1M157,153.5h1M157,154.5h1M158,155.5h1M158,156.5h1M159,157.5h1M159,158.5h1M160,159.5h1M160,160.5h1M161,161.5h1M161,162.5h1M162,163.5h1M162,164.5h1M163,165.5h1M164,166.5h1M164,167.5h1M165,168.5h1M165,169.5h1M166,170.5h1M166,171.5h1M167,172.5h1M167,173.5h1M168,174.5h1M168,175.5h1M169,176.5h1M169,177.5h1M170,178.5h1M170,179.5h1M171,180.5h1M171,181.5h1M172,182.5h1M173,183.5h1M173,184.5h1M174,185.5h1M174,186.5h1M175,187.5h1M175,188.5h1M176,189.5h1M176,190.5h1M177,191.5h1M177,192.5h1M178,193.5h1M178,194.5h1M179,195.5h1M179,196.5h1M180,197.5h1M180,198.5h1M181,199.5h1M181,200.5h1M182,201.5h1M183,202.5h1M183,203.5h1M184,204.5h1M184,205.5h1M185,206.5h1M185,207.5h1M186,208.5h1M186,209.5h1M187,210.5h1M187,211.5h1M188,212.5h1M188,213.5h1M189,214.5h1M189,215.5h1M190,216.5h1M190,217.5h1M191,218.5h1M192,219.5h2M194,220.5h1M195,221.5h2M197,222.5h1M198,223.5h2M200,224.5h1M201,225.5h1M202,226.5h2M204,227.5h1M205,228.5h2M207,229.5h1M208,230.5h2M210,231.5h1M211,232.5h2M213,233.5h1M214,234.5h2M216,235.5h1M217,236.5h2M219,237.5h1M220,238.5h2M222,239.5h1M223,240.5h1M224,241.5h2M226,242.5h1M227,243.5h2M229,244.5h1M230,245.5h2M232,246.5h1M233,247.5h2M235,248.5h1M236,249.5h2M238,250.5h1M239,251.5h2M241,252.5h1M242,253.5h1M243,254.5h2M245,255.5h1M246,256.5h2M248,257.5h1M249,258.5h2M251,259.5h1M252,260.5h2M254,261.5h1M255,262.5h2M257,263.5h1M258,264.5h2M260,265.5h1M261,266.5h2M263,267.5h1M264,268.5h1M265,269.5h2M267,270.5h1M268,271.5h2M270,272.5h1M271,273.5h2M273,274.5h2M275,275.5h2M277,276.5h3M280,277.5h2M282,278.5h3M285,279.5h3M288,280.5h2M290,281.5h3M293,282.5h2M295,283.5h3M298,284.5h2M300,285.5h3M303,286.5h2M305,287.5h3M308,288.5h3M311,289.5h2M313,290.5h3M316,291.5h2M318,292.5h3M321,293.5h2M323,294.5h3M326,295.5h2M328,296.5h3M331,297.5h3M334,298.5h2M336,299.5h3M339,300.5h2M341,301.5h3M344,302.5h2M346,303.5h3M349,304.5h2M351,305.5h3M354,306.5h2M356,307.5h3M359,308.5h3M362,309.5h2M364,310.5h3M367,311.5h2M369,312.5h3M372,313.5h2M374,314.5h3M377,315.5h2M379,316.5h3M382,317.5h3M385,318.5h2M387,319.5h3M390,320.5h2M392,321.5h2M394,322.5h2M396,323.5h2M398,324.5h1M399,325.5h2M401,326.5h1M402,327.5h2M404,328.5h2M406,329.5h1M407,330.5h2M409,331.5h1M410,332.5h2M412,333.5h2M414,334.5h1M415,335.5h2M417,336.5h2M419,337.5h1M420,338.5h2M422,339.5h1M423,340.5h2M425,341.5h2M427,342.5h1M428,343.5h2M430,344.5h1M431,345.5h2M433,346.5h2M435,347.5h1M436,348.5h2M438,349.5h2M440,350.5h1M441,351.5h2M443,352.5h1M444,353.5h2M446,354.5h2M448,355.5h1M449,356.5h2M451,357.5h1M452,358.5h2M454,359.5h2M456,360.5h1M456,361.5h1M456,362.5h1M456,363.5h1M456,364.5h1M456,365.5h1M456,366.5h1M456,367.5h1M456,368.5h1M456,369.5h1M456,370.5h1M456,371.5h1M456,372.5h1M456,373.5h1M456,374.5h1M456,375.5h1M456,376.5h1M456,377.5h1M455,378.5h1M455,379.5h1M455,380.5h1M455,381.5h1M455,382.5h1M455,383.5h1M455,384.5h1M455,385.5h1M455,386.5h1M455,387.5h1M455,388.5h1M455,389.5h1M455,390.5h1M455,391.5h1M455,392.5h1M455,393.5h1M455,394.5h1M454,395.5h1M453,396.5h1M452,397.5h1M451,398.5h1M450,399.5h1M449,400.5h1M448,401.5h1M447,402.5h1M446,403.5h1M445,404.5h1M444,405.5h1M443,406.5h1M442,407.5h1M441,408.5h1M440,409.5h1M439,410.5h1M438,411.5h1M437,412.5h1M436,413.5h1M435,414.5h1M434,415.5h1M433,416.5h1M432,417.5h1M431,418.5h1M430,419.5h1M429,420.5h1M428,421.5h1M427,422.5h1M425,423.5h2M423,424.5h2M421,425.5h2M419,426.5h2M416,427.5h3M414,428.5h2M412,429.5h2M409,430.5h3M407,431.5h2M405,432.5h2M403,433.5h2M400,434.5h3M398,435.5h2M396,436.5h2M394,437.5h2M391,438.5h3M389,439.5h2M387,440.5h2M385,441.5h2M382,442.5h3M380,443.5h2M378,444.5h2M375,445.5h3M373,446.5h2M371,447.5h2M369,448.5h2M366,449.5h3M364,450.5h2M361,451.5h3M359,452.5h2M357,453.5h2M354,454.5h3M352,455.5h2M349,456.5h3M347,457.5h2M344,458.5h3M342,459.5h2M339,460.5h3M337,461.5h2M335,462.5h2M332,463.5h3M330,464.5h2M327,465.5h3M325,466.5h2M322,467.5h3M320,468.5h2M318,469.5h2M315,470.5h3M313,471.5h2M311,472.5h2M310,473.5h1M308,474.5h2M307,475.5h1M306,476.5h1M304,477.5h2M303,478.5h1M302,479.5h1M301,480.5h1M299,481.5h2M298,482.5h1M297,483.5h1M295,484.5h2M294,485.5h1M293,486.5h1M292,487.5h1M290,488.5h2M289,489.5h1M288,490.5h1M286,491.5h2M285,492.5h1M284,493.5h1M282,494.5h2M281,495.5h1M280,496.5h1M278,497.5h2M277,498.5h1M275,499.5h2M274,500.5h1M272,501.5h2M271,502.5h1M270,503.5h1M268,504.5h2M267,505.5h1M265,506.5h2M264,507.5h1M262,508.5h2M261,509.5h1M260,510.5h1M258,511.5h2M257,512.5h1M256,513.5h1M255,514.5h1M254,515.5h1M252,516.5h2M251,517.5h1M250,518.5h1M249,519.5h1M248,520.5h1M247,521.5h1M246,522.5h1M245,523.5h1M244,524.5h1M242,525.5h2M241,526.5h1M240,527.5h1M239,528.5h1M238,529.5h1M237,530.5h1M236,531.5h1M236,532.5h1M235,533.5h1M234,534.5h1M233,535.5h1M232,536.5h1M232,537.5h1M231,538.5h1M230,539.5h1M229,540.5h1M228,541.5h1M227,542.5h1M227,543.5h1M226,544.5h1M225,545.5h1M224,546.5h1M224,547.5h1M223,548.5h1M222,549.5h1M221,550.5h1M221,551.5h1M220,552.5h1M219,553.5h1M218,554.5h1M218,555.5h1M217,556.5h1M216,557.5h1M215,558.5h1M215,559.5h1M214,560.5h1M213,561.5h1M212,562.5h1M212,563.5h1M211,564.5h1M210,565.5h1M209,566.5h1M209,567.5h1M208,568.5h1M207,569.5h1M206,570.5h1M205,571.5h1M205,572.5h1M204,573.5h1M203,574.5h1M203,575.5h1M203,576.5h1M203,577.5h1M202,578.5h1M202,579.5h1M202,580.5h1M202,581.5h1M202,582.5h1M202,583.5h1M201,584.5h1M201,585.5h1M201,586.5h1M200,587.5h1M200,588.5h1M199,589.5h1M199,590.5h1M198,591.5h1M198,592.5h1M197,593.5h1M196,594.5h1M196,595.5h1M195,596.5h1M195,597.5h1M194,598.5h1M193,599.5h1M192,600.5h1M191,601.5h1M190,602.5h1M189,603.5h1M189,604.5h1M188,605.5h1M187,606.5h1M186,607.5h1M185,608.5h1M184,609.5h1M183,610.5h1M181,611.5h2M180,612.5h1M178,613.5h2M177,614.5h1M175,615.5h2M174,616.5h1M172,617.5h2M171,618.5h1M169,619.5h2M168,620.5h1M167,621.5h1M167,622.5h1M166,623.5h1M166,624.5h1M165,625.5h1M164,626.5h1M164,627.5h1M163,628.5h1M163,629.5h1M162,630.5h1M162,631.5h1M162,632.5h1M162,633.5h1M162,634.5h1M162,635.5h1M163,636.5h1M163,637.5h1M163,638.5h1M163,639.5h1M163,640.5h1M163,641.5h1M163,642.5h1M163,643.5h1M163,644.5h1M163,645.5h1M163,646.5h1M163,647.5h1M163,648.5h1M163,649.5h1M163,650.5h1M163,651.5h1M163,652.5h1M164,653.5h1M164,654.5h1M164,655.5h1M164,656.5h1M164,657.5h1M165,658.5h1M165,659.5h1M166,660.5h1M167,661.5h1M168,662.5h1M168,663.5h1M169,664.5h1M170,665.5h1M169,666.5h1M167,667.5h2M166,668.5h1M165,669.5h1M166,670.5h1M166,671.5h1M167,672.5h1M167,673.5h1M168,674.5h1M168,675.5h1M169,676.5h1M170,677.5h1M170,678.5h1M171,679.5h1M171,680.5h1M172,681.5h1M172,682.5h1M173,683.5h1M172,684.5h1M171,685.5h1M170,686.5h1M169,687.5h1M168,688.5h1M167,689.5h1M167,690.5h1M166,691.5h1M165,692.5h1M164,693.5h1M163,694.5h1M162,695.5h1M161,696.5h6M167,697.5h10M177,698.5h10M187,699.5h10M197,700.5h10M207,701.5h10M217,702.5h10M227,703.5h10M237,704.5h10M247,705.5h5M250,706.5h1M249,707.5h1M248,708.5h1M248,709.5h1M247,710.5h1M246,711.5h1M245,712.5h1M244,713.5h1M244,714.5h1M244,715.5h1M244,716.5h1M244,717.5h1M244,718.5h1M244,719.5h1M244,720.5h1M243,721.5h1M242,722.5h1M241,723.5h1M240,724.5h1M239,725.5h1M238,726.5h1M237,727.5h1M236,728.5h1M235,729.5h1M234,730.5h1M234,731.5h1M234,732.5h1M234,733.5h1" stroke="#ff0088" shape-rendering="crispEdges"/>
<path d="M552,50.5h5M554.5,48v5" stroke="#fff" stroke-width="1" shape-rendering="crispEdges"/>
<path d="M471,146.5h5M473.5,144v5" stroke="#fff" stroke-width="1" shape-rendering="crispEdges"/>
<path d="M415,218.5h5M417.5,216v5" stroke="#fff" stroke-width="1" shape-rendering="crispEdges"/>
<path d="M421,274.5h5M423.5,272v5" stroke="#fff" stroke-width="1" shape-rendering="crispEdges"/>
<path d="M408,321.5h5M410.5,319v5" stroke="#fff" stroke-width="1" shape-rendering="crispEdges"/>
<path d="M389,360.5h5M391.5,358v5" stroke="#fff" stroke-width="1" shape-rendering="crispEdges"/>
<path d="M388,394.5h5M390.5,392v5" stroke="#fff" stroke-width="1" shape-rendering="crispEdges"/>
<path d="M390,423.5h5M392.5,421v5" stroke="#fff" stroke-width="1" shape-rendering="crispEdges"/>
<path d="M391,449.5h5M393.5,447v5" stroke="#fff" stroke-width="1" shape-rendering="crispEdges"/>
<path d="M391,472.5h5M393.5,470v5" stroke="#fff" stroke-width="1" shape-rendering="crispEdges"/>
<path d="M392,493.5h5M394.5,491v5" stroke="#fff" stroke-width="1" shape-rendering="crispEdges"/>
<path d="M392,512.5h5M394.5,510v5" stroke="#fff" stroke-width="1" shape-rendering="crispEdges"/>
<path d="M389,529.5h5M391.5,527v5" stroke="#fff" stroke-width="1" shape-rendering="crispEdges"/>
<path d="M385,545.5h5M387.5,543v5" stroke="#fff" stroke-width="1" shape-rendering="crispEdges"/>
<path d="M381,560.5h5M383.5,558v5" stroke="#fff" stroke-width="1" shape-rendering="crispEdges"/>
<path d="M381,574.5h5M383.5,572v5" stroke="#fff" stroke-width="1" shape-rendering="crispEdges"/>
<path d="M382,586.5h5M384.5,584v5" stroke="#fff" stroke-width="1" shape-rendering="crispEdges"/>
<path d="M385,598.5h5M387.5,596v5" stroke="#fff" stroke-width="1" shape-rendering="crispEdges"/>
<path d="M388,610.5h5M390.5,608v5" stroke="#fff" stroke-width="1" shape-rendering="crispEdges"/>
<path d="M392,620.5h5M394.5,618v5" stroke="#fff" stroke-width="1" shape-rendering="crispEdges"/>
<path d="M397,630.5h5M399.5,628v5" stroke="#fff" stroke-width="1" shape-rendering="crispEdges"/>
<path d="M401,640.5h5M403.5,638v5" stroke="#fff" stroke-width="1" shape-rendering="crispEdges"/>
<path d="M415,648.5h5M417.5,646v5" stroke="#fff" stroke-width="1" shape-rendering="crispEdges"/>
<path d="M422,657.5h5M424.5,655v5" stroke="#fff" stroke-width="1" shape-rendering="crispEdges"/>
<path d="M429,665.5h5M431.5,663v5" stroke="#fff" stroke-width="1" shape-rendering="crispEdges"/>
<path d="M445,669.5h5M447.5,667v5" stroke="#fff" stroke-width="1" shape-rendering="crispEdges"/>
<path d="M449,683.5h5M451.5,681v5" stroke="#fff" stroke-width="1" shape-rendering="crispEdges"/>
<path d="M451,696.5h5M453.5,694v5" stroke="#fff" stroke-width="1" shape-rendering="crispEdges"/>
<path d="M455,705.5h5M457.5,703v5" stroke="#fff" stroke-width="1" shape-rendering="crispEdges"/>
<path d="M456,713.5h5M458.5,711v5" stroke="#fff" stroke-width="1" shape-rendering="crispEdges"/>
<path d="M456,720.5h5M458.5,718v5" stroke="#fff" stroke-width="1" shape-rendering="crispEdges"/>
<path d="M455,727.5h5M457.5,725v5" stroke="#fff" stroke-width="1" shape-rendering="crispEdges"/>
<path d="M455,730.5h5M457.5,728v5" stroke="#fff" stroke-width="1" shape-rendering="crispEdges"/>
<path d="M455,733.5h5M457.5,731v5" stroke="#fff" stroke-width="1" shape-rendering="crispEdges"/>
<path d="M383.5,559v22M384.5,555v4M384.5,581v8M385.5,551v4M385.5,589v4M386.5,547v4M386.5,593v4M387.5,544v3M387.5,597v4M388.5,540v4M388.5,601v4M389.5,536v4M389.5,605v4M390.5,378v24M390.5,532v4M390.5,609v3M391.5,359v19M391.5,402v14M391.5,527v5M391.5,612v2M392.5,357v2M392.5,416v21M392.5,521v6M392.5,614v3M393.5,355v2M393.5,437v46M393.5,515v6M393.5,617v2M394.5,353v2M394.5,483v32M394.5,619v3M395.5,351v2M395.5,622v2M396.5,349v2M396.5,624v2M397.5,347v2M397.5,626v2M398.5,345v2M398.5,628v2M399.5,343v2M399.5,630v2M400.5,341v2M400.5,632v2M401.5,339v2M401.5,634v3M402.5,337v2M402.5,637v2M403.5,335v2M403.5,639v2M404.5,333v2M404.5,641v1M405.5,331v2M405.5,641v1M406.5,329v2M406.5,642v1M407.5,327v2M407.5,642v1M408.5,325v2M408.5,643v1M409.5,323v2M409.5,643v1M410.5,320v3M410.5,644v1M411.5,316v4M411.5,645v1M412.5,312v4M412.5,645v1M413.5,309v3M413.5,646v1M414.5,305v4M414.5,646v1M415.5,302v3M415.5,647v1M416.5,298v4M416.5,647v1M417.5,218v5M417.5,294v4M417.5,648v1M418.5,217v1M418.5,223v10M418.5,291v3M418.5,649v1M419.5,215v2M419.5,233v9M419.5,287v4M419.5,650v2M420.5,214v1M420.5,242v9M420.5,284v3M420.5,652v1M421.5,213v1M421.5,251v10M421.5,280v4M421.5,653v1M422.5,211v2M422.5,261v9M422.5,276v4M422.5,654v2M423.5,210v1M423.5,270v6M423.5,656v1M424.5,209v1M424.5,657v1M425.5,208v1M425.5,658v1M426.5,206v2M426.5,659v1M427.5,205v1M427.5,660v2M428.5,204v1M428.5,662v1M429.5,202v2M429.5,663v1M430.5,201v1M430.5,664v1M431.5,200v1M431.5,665v1M432.5,199v1M432.5,665v1M433.5,197v2M433.5,665v1M434.5,196v1M434.5,666v1M435.5,195v1M435.5,666v1M436.5,193v2M436.5,666v1M437.5,192v1M437.5,666v1M438.5,191v1M438.5,667v1M439.5,190v1M439.5,667v1M440.5,188v2M440.5,667v1M441.5,187v1M441.5,667v1M442.5,186v1M442.5,668v1M443.5,184v2M443.5,668v1M444.5,183v1M444.5,668v1M445.5,182v1M445.5,668v1M446.5,181v1M446.5,669v1M447.5,179v2M447.5,669v2M448.5,178v1M448.5,671v4M449.5,177v1M449.5,675v3M450.5,175v2M450.5,678v4M451.5,174v1M451.5,682v5M452.5,173v1M452.5,687v6M453.5,172v1M453.5,693v5M454.5,170v2M454.5,698v2M455.5,169v1M455.5,700v2M456.5,168v1M456.5,702v2M457.5,166v2M457.5,704v6M457.5,724v10M458.5,165v1M458.5,710v14M459.5,164v1M460.5,163v1M461.5,161v2M462.5,160v1M463.5,159v1M464.5,157v2M465.5,156v1M466.5,155v1M467.5,154v1M468.5,152v2M469.5,151v1M470.5,150v1M471.5,148v2M472.5,147v1M473.5,146v1M474.5,145v1M475.5,144v1M476.5,142v2M477.5,141v1M478.5,140v1M479.5,139v1M480.5,138v1M481.5,136v2M482.5,135v1M483.5,134v1M484.5,133v1M485.5,132v1M486.5,131v1M487.5,129v2M488.5,128v1M489.5,127v1M490.5,126v1M491.5,125v1M492.5,123v2M493.5,122v1M494.5,121v1M495.5,120v1M496.5,119v1M497.5,117v2M498.5,116v1M499.5,115v1M500.5,114v1M501.5,113v1M502.5,112v1M503.5,110v2M504.5,109v1M505.5,108v1M506.5,107v1M507.5,106v1M508.5,104v2M509.5,103v1M510.5,102v1M511.5,101v1M512.5,100v1M513.5,99v1M514.5,97v2M515.5,96v1M516.5,95v1M517.5,94v1M518.5,93v1M519.5,91v2M520.5,90v1M521.5,89v1M522.5,88v1M523.5,87v1M524.5,85v2M525.5,84v1M526.5,83v1M527.5,82v1M528.5,81v1M529.5,80v1M530.5,78v2M531.5,77v1M532.5,76v1M533.5,75v1M534.5,74v1M535.5,72v2M536.5,71v1M537.5,70v1M538.5,69v1M539.5,68v1M540.5,67v1M541.5,65v2M542.5,64v1M543.5,63v1M544.5,62v1M545.5,61v1M546.5,59v2M547.5,58v1M548.5,57v1M549.5,56v1M550.5,55v1M551.5,53v2M552.5,52v1M553.5,51v1M554.5,50v1" stroke="#00ffff" shape-rendering="crispEdges"/>
<path d="M702,50.5h5M704.5,48v5" stroke="#fff" stroke-width="1" shape-rendering="crispEdges"/>
<path d="M625,146.5h5M627.5,144v5" stroke="#fff" stroke-width="1" shape-rendering="crispEdges"/>
<path d="M550,218.5h5M552.5,216v5" stroke="#fff" stroke-width="1" shape-rendering="crispEdges"/>
<path d="M488,274.5h5M490.5,272v5" stroke="#fff" stroke-width="1" shape-rendering="crispEdges"/>
<path d="M420,321.5h5M422.5,319v5" stroke="#fff" stroke-width="1" shape-rendering="crispEdges"/>
<path d="M392,360.5h5M394.5,358v5" stroke="#fff" stroke-width="1" shape-rendering="crispEdges"/>
<path d="M389,394.5h5M391.5,392v5" stroke="#fff" stroke-width="1" shape-rendering="crispEdges"/>
<path d="M392,423.5h5M394.5,421v5" stroke="#fff" stroke-width="1" shape-rendering="crispEdges"/>
<path d="M395,449.5h5M397.5,447v5" stroke="#fff" stroke-width="1" shape-rendering="crispEdges"/>
<path d="M396,472.5h5M398.5,470v5" stroke="#fff" stroke-width="1" shape-rendering="crispEdges"/>
<path d="M401,493.5h5M403.5,491v5" stroke="#fff" stroke-width="1" shape-rendering="crispEdges"/>
<path d="M403,512.5h5M405.5,510v5" stroke="#fff" stroke-width="1" shape-rendering="crispEdges"/>
<path d="M406,529.5h5M408.5,527v5" stroke="#fff" stroke-width="1" shape-rendering="crispEdges"/>
<path d="M411,545.5h5M413.5,543v5" stroke="#fff" stroke-width="1" shape-rendering="crispEdges"/>
<path d="M415,560.5h5M417.5,558v5" stroke="#fff" stroke-width="1" shape-rendering="crispEdges"/>
<path d="M419,574.5h5M421.5,572v5" stroke="#fff" stroke-width="1" shape-rendering="crispEdges"/>
<path d="M423,586.5h5M425.5,584v5" stroke="#fff" stroke-width="1" shape-rendering="crispEdges"/>
<path d="M427,598.5h5M429.5,596v5" stroke="#fff" stroke-width="1" shape-rendering="crispEdges"/>
<path d="M430,610.5h5M432.5,608v5" stroke="#fff" stroke-width="1" shape-rendering="crispEdges"/>
<path d="M433,620.5h5M435.5,618v5" stroke="#fff" stroke-width="1" shape-rendering="crispEdges"/>
<path d="M435,630.5h5M437.5,628v5" stroke="#fff" stroke-width="1" shape-rendering="crispEdges"/>
<path d="M437,640.5h5M439.5,638v5" stroke="#fff" stroke-width="1" shape-rendering="crispEdges"/>
<path d="M445,648.5h5M447.5,646v5" stroke="#fff" stroke-width="1" shape-rendering="crispEdges"/>
<path d="M445,657.5h5M447.5,655v5" stroke="#fff" stroke-width="1" shape-rendering="crispEdges"/>
<path d="M447,665.5h5M449.5,663v5" stroke="#fff" stroke-width="1" shape-rendering="crispEdges"/>
<path d="M449,669.5h5M451.5,667v5" stroke="#fff" stroke-width="1" shape-rendering="crispEdges"/>
<path d="M450,683.5h5M452.5,681v5" stroke="#fff" stroke-width="1" shape-rendering="crispEdges"/>
<path d="M454,696.5h5M456.5,694v5" stroke="#fff" stroke-width="1" shape-rendering="crispEdges"/>
<path d="M460,705.5h5M462.5,703v5" stroke="#fff" stroke-width="1" shape-rendering="crispEdges"/>
<path d="M471,713.5h5M473.5,711v5" stroke="#fff" stroke-width="1" shape-rendering="crispEdges"/>
<path d="M480,720.5h5M482.5,718v5" stroke="#fff" stroke-width="1" shape-rendering="crispEdges"/>
<path d="M491,727.5h5M493.5,725v5" stroke="#fff" stroke-width="1" shape-rendering="crispEdges"/>
<path d="M495,730.5h5M497.5,728v5" stroke="#fff" stroke-width="1" shape-rendering="crispEdges"/>
<path d="M499,733.5h5M501.5,731v5" stroke="#fff" stroke-width="1" shape-rendering="crispEdges"/>
<path d="M391.5,389v10M392.5,378v11M392.5,399v10M393.5,366v12M393.5,409v10M394.5,360v6M394.5,419v9M395.5,358v2M395.5,428v9M396.5,357v1M396.5,437v8M397.5,356v1M397.5,445v16M398.5,354v2M398.5,461v14M399.5,353v1M399.5,475v4M400.5,351v2M400.5,479v4M401.5,350v1M401.5,483v4M402.5,349v1M402.5,487v4M403.5,347v2M403.5,491v7M404.5,346v1M404.5,498v10M405.5,344v2M405.5,508v7M406.5,343v1M406.5,515v6M407.5,342v1M407.5,521v6M408.5,340v2M408.5,527v4M409.5,339v1M409.5,531v3M410.5,338v1M410.5,534v4M411.5,336v2M411.5,538v3M412.5,335v1M412.5,541v3M413.5,333v2M413.5,544v3M414.5,332v1M414.5,547v4M415.5,331v1M415.5,551v4M416.5,329v2M416.5,555v4M417.5,328v1M417.5,559v3M418.5,326v2M418.5,562v4M419.5,325v1M419.5,566v3M420.5,324v1M420.5,569v4M421.5,322v2M421.5,573v3M422.5,321v1M422.5,576v3M423.5,320v1M423.5,579v3M424.5,320v1M424.5,582v3M425.5,319v1M425.5,585v3M426.5,318v1M426.5,588v3M427.5,318v1M427.5,591v3M428.5,317v1M428.5,594v3M429.5,316v1M429.5,597v4M430.5,315v1M430.5,601v4M431.5,315v1M431.5,605v4M432.5,314v1M432.5,609v3M433.5,313v1M433.5,612v4M434.5,313v1M434.5,616v3M435.5,312v1M435.5,619v4M436.5,311v1M436.5,623v5M437.5,311v1M437.5,628v5M438.5,310v1M438.5,633v5M439.5,309v1M439.5,638v3M440.5,309v1M440.5,641v1M441.5,308v1M441.5,642v1M442.5,307v1M442.5,643v1M443.5,306v1M443.5,644v1M444.5,306v1M444.5,645v1M445.5,305v1M445.5,646v1M446.5,304v1M446.5,647v1M447.5,304v1M447.5,648v12M448.5,303v1M448.5,660v4M449.5,302v1M449.5,664v3M450.5,302v1M450.5,667v2M451.5,301v1M451.5,669v8M452.5,300v1M452.5,677v8M453.5,300v1M453.5,685v3M454.5,299v1M454.5,688v4M455.5,298v1M455.5,692v3M456.5,297v1M456.5,695v2M457.5,297v1M457.5,697v2M458.5,296v1M458.5,699v1M459.5,295v1M459.5,700v2M460.5,295v1M460.5,702v1M461.5,294v1M461.5,703v2M462.5,293v1M462.5,705v1M463.5,293v1M463.5,706v1M464.5,292v1M464.5,706v1M465.5,291v1M465.5,707v1M466.5,291v1M466.5,708v1M467.5,290v1M467.5,709v1M468.5,289v1M468.5,709v1M469.5,289v1M469.5,710v1M470.5,288v1M470.5,711v1M471.5,287v1M471.5,712v1M472.5,286v1M472.5,712v1M473.5,286v1M473.5,713v1M474.5,285v1M474.5,714v1M475.5,284v1M475.5,715v1M476.5,284v1M476.5,715v1M477.5,283v1M477.5,716v1M478.5,282v1M478.5,717v1M479.5,282v1M479.5,718v1M480.5,281v1M480.5,718v1M481.5,280v1M481.5,719v1M482.5,280v1M482.5,720v1M483.5,279v1M483.5,721v1M484.5,278v1M484.5,721v1M485.5,277v1M485.5,722v1M486.5,277v1M486.5,723v1M487.5,276v1M487.5,723v1M488.5,275v1M488.5,724v1M489.5,275v1M489.5,724v1M490.5,274v1M490.5,725v1M491.5,273v1M491.5,726v1M492.5,272v1M492.5,726v1M493.5,271v1M493.5,727v1M494.5,270v1M494.5,728v1M495.5,269v1M495.5,728v1M496.5,269v1M496.5,729v1M497.5,268v1M497.5,730v1M498.5,267v1M498.5,731v1M499.5,266v1M499.5,731v1M500.5,265v1M500.5,732v1M501.5,264v1M501.5,733v1M502.5,263v1M503.5,262v1M504.5,261v1M505.5,260v1M506.5,260v1M507.5,259v1M508.5,258v1M509.5,257v1M510.5,256v1M511.5,255v1M512.5,254v1M513.5,253v1M514.5,252v1M515.5,251v1M516.5,251v1M517.5,250v1M518.5,249v1M519.5,248v1M520.5,247v1M521.5,246v1M522.5,245v1M523.5,244v1M524.5,243v1M525.5,242v1M526.5,241v1M527.5,241v1M528.5,240v1M529.5,239v1M530.5,238v1M531.5,237v1M532.5,236v1M533.5,235v1M534.5,234v1M535.5,233v1M536.5,232v1M537.5,232v1M538.5,231v1M539.5,230v1M540.5,229v1M541.5,228v1M542.5,227v1M543.5,226v1M544.5,225v1M545.5,224v1M546.5,223v1M547.5,223v1M548.5,222v1M549.5,221v1M550.5,220v1M551.5,219v1M552.5,218v1M553.5,217v1M554.5,216v1M555.5,215v1M556.5,214v1M557.5,213v1M558.5,212v1M559.5,211v1M560.5,210v1M561.5,209v1M562.5,208v1M563.5,207v1M564.5,206v1M565.5,206v1M566.5,205v1M567.5,204v1M568.5,203v1M569.5,202v1M570.5,201v1M571.5,200v1M572.5,199v1M573.5,198v1M574.5,197v1M575.5,196v1M576.5,195v1M577.5,194v1M578.5,193v1M579.5,192v1M580.5,191v1M581.5,190v1M582.5,189v1M583.5,188v1M584.5,187v1M585.5,186v1M586.5,185v1M587.5,184v1M588.5,183v1M589.5,182v1M590.5,182v1M591.5,181v1M592.5,180v1M593.5,179v1M594.5,178v1M595.5,177v1M596.5,176v1M597.5,175v1M598.5,174v1M599.5,173v1M600.5,172v1M601.5,171v1M602.5,170v1M603.5,169v1M604.5,168v1M605.5,167v1M606.5,166v1M607.5,165v1M608.5,164v1M609.5,163v1M610.5,162v1M611.5,161v1M612.5,160v1M613.5,159v1M614.5,158v1M615.5,158v1M616.5,157v1M617.5,156v1M618.5,155v1M619.5,154v1M620.5,153v1M621.5,152v1M622.5,151v1M623.5,150v1M624.5,149v1M625.5,148v1M626.5,147v1M627.5,146v1M628.5,145v1M629.5,143v2M630.5,142v1M631.5,141v1M632.5,140v1M633.5,138v2M634.5,137v1M635.5,136v1M636.5,135v1M637.5,133v2M638.5,132v1M639.5,131v1M640.5,130v1M641.5,128v2M642.5,127v1M643.5,126v1M644.5,125v1M645.5,123v2M646.5,122v1M647.5,121v1M648.5,120v1M649.5,118v2M650.5,117v1M651.5,116v1M652.5,115v1M653.5,113v2M654.5,112v1M655.5,111v1M656.5,110v1M657.5,108v2M658.5,107v1M659.5,106v1M660.5,105v1M661.5,103v2" stroke="#ff0000" shape-rendering="crispEdges"/>
<path d="M390.5,266v65M391.5,256v10M391.5,331v12M392.5,245v11M392.5,343v7M393.5,234v11M393.5,350v9M394.5,223v11M394.5,359v8M395.5,211v12M395.5,367v7M396.5,203v8M396.5,374v5M397.5,198v5M397.5,379v7M398.5,193v5M398.5,386v7M399.5,188v5M399.5,393v4M400.5,183v5M400.5,397v6M401.5,178v5M401.5,403v6M402.5,173v5M402.5,409v6M403.5,168v5M403.5,415v6M404.5,163v5M404.5,421v5M405.5,158v5M405.5,426v4M406.5,154v4M406.5,430v4M407.5,150v4M407.5,434v5M408.5,146v4M408.5,439v4M409.5,142v4M409.5,443v4M410.5,138v4M410.5,447v4M411.5,134v4M411.5,451v3M412.5,130v4M412.5,454v3M413.5,127v3M413.5,457v3M414.5,123v4M414.5,460v2M415.5,120v3M415.5,462v3M416.5,117v3M416.5,465v3M417.5,113v4M417.5,468v3M418.5,110v3M418.5,471v4M419.5,107v3M419.5,475v5M420.5,103v4M420.5,480v6M421.5,100v3M421.5,486v5M422.5,96v4M422.5,491v4M423.5,93v3M423.5,495v4M424.5,89v4M424.5,499v4M425.5,85v4M425.5,503v4M426.5,82v3M426.5,507v4M427.5,78v4M427.5,511v4M428.5,75v3M428.5,515v4M429.5,72v3M429.5,519v4M430.5,68v4M430.5,523v4M431.5,65v3M431.5,527v5M432.5,62v3M432.5,532v4M433.5,59v3M433.5,536v4M434.5,55v4M434.5,540v4M435.5,52v3M435.5,544v3M436.5,50v2M436.5,547v3M437.5,550v3M438.5,553v3M439.5,556v3M440.5,559v4M441.5,563v5M442.5,568v4M443.5,572v5M444.5,577v4M445.5,581v4M446.5,585v4M447.5,589v4M448.5,593v4M449.5,597v4M450.5,601v4M451.5,605v4M452.5,609v4M453.5,613v5M454.5,618v4M455.5,622v4M456.5,626v3M457.5,629v7M458.5,636v7M459.5,643v4M460.5,647v6M461.5,653v9M462.5,662v6M463.5,668v5M464.5,673v7M465.5,680v10M466.5,690v11M467.5,701v7M468.5,708v2" stroke="#ffc0ff" shape-rendering="crispEdges"/>
<path d="M389.5,300v16M390.5,266v34M390.5,316v15M391.5,256v10M391.5,331v12M392.5,240v16M392.5,343v7M393.5,225v15M393.5,350v9M394.5,217v8M394.5,359v8M395.5,209v8M395.5,367v10M396.5,203v6M396.5,377v7M397.5,198v5M397.5,384v4M398.5,193v5M398.5,388v9M399.5,188v5M399.5,397v5M400.5,183v5M400.5,402v5M401.5,178v5M401.5,407v4M402.5,173v5M402.5,411v5M403.5,168v5M403.5,416v5M404.5,163v5M404.5,421v5M405.5,158v5M405.5,426v4M406.5,154v4M406.5,430v4M407.5,150v4M407.5,434v5M408.5,146v4M408.5,439v4M409.5,142v4M409.5,443v4M410.5,138v4M410.5,447v4M411.5,134v4M411.5,451v3M412.5,130v4M412.5,454v4M413.5,127v3M413.5,458v3M414.5,123v4M414.5,461v3M415.5,119v4M415.5,464v4M416.5,115v4M416.5,468v3M417.5,111v4M417.5,471v4M418.5,107v4M418.5,475v4M419.5,103v4M419.5,479v4M420.5,100v3M420.5,483v4M421.5,97v3M421.5,487v4M422.5,94v3M422.5,491v4M423.5,91v3M423.5,495v4M424.5,87v4M424.5,499v4M425.5,84v3M425.5,503v4M426.5,81v3M426.5,507v4M427.5,78v3M427.5,511v4M428.5,75v3M428.5,515v4M429.5,72v3M429.5,519v4M430.5,68v4M430.5,523v4M431.5,65v3M431.5,527v5M432.5,62v3M432.5,532v4M433.5,59v3M433.5,536v4M434.5,55v4M434.5,540v4M435.5,52v3M435.5,544v3M436.5,50v2M436.5,547v4M437.5,551v4M438.5,555v4M439.5,559v3M440.5,562v4M441.5,566v3M442.5,569v4M443.5,573v4M444.5,577v4M445.5,581v4M446.5,585v4M447.5,589v4M448.5,593v4M449.5,597v4M450.5,601v4M451.5,605v4M452.5,609v4M453.5,613v5M454.5,618v5M455.5,623v5M456.5,628v5M457.5,633v5M458.5,638v7M459.5,645v6M460.5,651v4M461.5,655v7M462.5,662v6M463.5,668v5M464.5,673v7M465.5,680v10M466.5,690v11M467.5,701v7M468.5,708v2" stroke="#ff00ff" shape-rendering="crispEdges"/>
<path d="M457.5,732v2M458.5,730v2M459.5,728v2M460.5,726v2M461.5,724v2M462.5,722v2M463.5,719v3M464.5,717v2M465.5,715v2M466.5,713v2M467.5,711v2M468.5,709v2" stroke="#ff00ff" shape-rendering="crispEdges"/>
<path d="M468,709.5h1M469,710.5h1M470,711.5h2M472,712.5h1M473,713.5h1M474,714.5h1M475,715.5h2M477,716.5h1M478,717.5h1M479,718.5h2M481,719.5h1M482,720.5h1M483,721.5h2M485,722.5h1M486,723.5h2M488,724.5h2M490,725.5h1M491,726.5h2M493,727.5h1M494,728.5h2M496,729.5h1M497,730.5h1M498,731.5h2M500,732.5h1M501,733.5h1" stroke="#ff00ff" shape-rendering="crispEdges"/>
</g>
<rect x="168" y="705" width="8" height="9" fill="#c8c800" shape-rendering="crispEdges"/>
<rect x="338" y="680" width="8" height="9" fill="#c8c800" shape-rendering="crispEdges"/>
<rect x="421" y="651" width="8" height="9" fill="#c8c800" shape-rendering="crispEdges"/>
<rect x="67.5" y="607.5" width="43" height="17" fill="#000" stroke="#ffff00" shape-rendering="crispEdges"/>
<rect x="67.5" y="636.5" width="57" height="17" fill="#000" stroke="#e07000" shape-rendering="crispEdges"/>
<rect x="625.5" y="700.5" width="30" height="17" fill="#000" stroke="#ff00ff" shape-rendering="crispEdges"/>
<line x1="61.5" y1="749.0" x2="61.5" y2="755.0" stroke="#fff" stroke-width="1" shape-rendering="crispEdges"/>
<line x1="121.5" y1="749.0" x2="121.5" y2="755.0" stroke="#fff" stroke-width="1" shape-rendering="crispEdges"/>
<line x1="181.5" y1="749.0" x2="181.5" y2="755.0" stroke="#fff" stroke-width="1" shape-rendering="crispEdges"/>
<line x1="241.5" y1="749.0" x2="241.5" y2="755.0" stroke="#fff" stroke-width="1" shape-rendering="crispEdges"/>
<line x1="301.5" y1="749.0" x2="301.5" y2="755.0" stroke="#fff" stroke-width="1" shape-rendering="crispEdges"/>
<line x1="361.5" y1="749.0" x2="361.5" y2="755.0" stroke="#fff" stroke-width="1" shape-rendering="crispEdges"/>
<line x1="421.5" y1="749.0" x2="421.5" y2="755.0" stroke="#fff" stroke-width="1" shape-rendering="crispEdges"/>
<line x1="481.5" y1="749.0" x2="481.5" y2="755.0" stroke="#fff" stroke-width="1" shape-rendering="crispEdges"/>
<line x1="541.5" y1="749.0" x2="541.5" y2="755.0" stroke="#fff" stroke-width="1" shape-rendering="crispEdges"/>
<line x1="601.5" y1="749.0" x2="601.5" y2="755.0" stroke="#fff" stroke-width="1" shape-rendering="crispEdges"/>
<line x1="661.5" y1="749.0" x2="661.5" y2="755.0" stroke="#fff" stroke-width="1" shape-rendering="crispEdges"/>
<line x1="61.5" y1="788.0" x2="61.5" y2="792.0" stroke="#fff" stroke-width="1" shape-rendering="crispEdges"/>
<line x1="121.5" y1="788.0" x2="121.5" y2="792.0" stroke="#fff" stroke-width="1" shape-rendering="crispEdges"/>
<line x1="181.5" y1="788.0" x2="181.5" y2="792.0" stroke="#fff" stroke-width="1" shape-rendering="crispEdges"/>
<line x1="241.5" y1="788.0" x2="241.5" y2="792.0" stroke="#fff" stroke-width="1" shape-rendering="crispEdges"/>
<line x1="301.5" y1="788.0" x2="301.5" y2="792.0" stroke="#fff" stroke-width="1" shape-rendering="crispEdges"/>
<line x1="361.5" y1="788.0" x2="361.5" y2="792.0" stroke="#fff" stroke-width="1" shape-rendering="crispEdges"/>
<line x1="421.5" y1="788.0" x2="421.5" y2="792.0" stroke="#fff" stroke-width="1" shape-rendering="crispEdges"/>
<line x1="481.5" y1="788.0" x2="481.5" y2="792.0" stroke="#fff" stroke-width="1" shape-rendering="crispEdges"/>
<line x1="541.5" y1="788.0" x2="541.5" y2="792.0" stroke="#fff" stroke-width="1" shape-rendering="crispEdges"/>
<line x1="601.5" y1="788.0" x2="601.5" y2="792.0" stroke="#fff" stroke-width="1" shape-rendering="crispEdges"/>
<line x1="661.5" y1="788.0" x2="661.5" y2="792.0" stroke="#fff" stroke-width="1" shape-rendering="crispEdges"/>
<line x1="61.5" y1="826.0" x2="61.5" y2="830.0" stroke="#fff" stroke-width="1" shape-rendering="crispEdges"/>
<line x1="121.5" y1="826.0" x2="121.5" y2="830.0" stroke="#fff" stroke-width="1" shape-rendering="crispEdges"/>
<line x1="181.5" y1="826.0" x2="181.5" y2="830.0" stroke="#fff" stroke-width="1" shape-rendering="crispEdges"/>
<line x1="241.5" y1="826.0" x2="241.5" y2="830.0" stroke="#fff" stroke-width="1" shape-rendering="crispEdges"/>
<line x1="301.5" y1="826.0" x2="301.5" y2="830.0" stroke="#fff" stroke-width="1" shape-rendering="crispEdges"/>
<line x1="361.5" y1="826.0" x2="361.5" y2="830.0" stroke="#fff" stroke-width="1" shape-rendering="crispEdges"/>
<line x1="421.5" y1="826.0" x2="421.5" y2="830.0" stroke="#fff" stroke-width="1" shape-rendering="crispEdges"/>
<line x1="481.5" y1="826.0" x2="481.5" y2="830.0" stroke="#fff" stroke-width="1" shape-rendering="crispEdges"/>
<line x1="541.5" y1="826.0" x2="541.5" y2="830.0" stroke="#fff" stroke-width="1" shape-rendering="crispEdges"/>
<line x1="601.5" y1="826.0" x2="601.5" y2="830.0" stroke="#fff" stroke-width="1" shape-rendering="crispEdges"/>
<line x1="661.5" y1="826.0" x2="661.5" y2="830.0" stroke="#fff" stroke-width="1" shape-rendering="crispEdges"/>
<line x1="61.5" y1="863.0" x2="61.5" y2="867.0" stroke="#fff" stroke-width="1" shape-rendering="crispEdges"/>
<line x1="136.5" y1="863.0" x2="136.5" y2="867.0" stroke="#fff" stroke-width="1" shape-rendering="crispEdges"/>
<line x1="211.5" y1="863.0" x2="211.5" y2="867.0" stroke="#fff" stroke-width="1" shape-rendering="crispEdges"/>
<line x1="286.5" y1="863.0" x2="286.5" y2="867.0" stroke="#fff" stroke-width="1" shape-rendering="crispEdges"/>
<line x1="361.5" y1="863.0" x2="361.5" y2="867.0" stroke="#fff" stroke-width="1" shape-rendering="crispEdges"/>
<line x1="436.5" y1="863.0" x2="436.5" y2="867.0" stroke="#fff" stroke-width="1" shape-rendering="crispEdges"/>
<line x1="511.5" y1="863.0" x2="511.5" y2="867.0" stroke="#fff" stroke-width="1" shape-rendering="crispEdges"/>
<line x1="586.5" y1="863.0" x2="586.5" y2="867.0" stroke="#fff" stroke-width="1" shape-rendering="crispEdges"/>
<line x1="661.5" y1="863.0" x2="661.5" y2="867.0" stroke="#fff" stroke-width="1" shape-rendering="crispEdges"/>
<line x1="761.5" y1="40.0" x2="761.5" y2="770.0" stroke="#00ff00" stroke-width="1" shape-rendering="crispEdges"/>
<line x1="826.5" y1="40.0" x2="826.5" y2="770.0" stroke="#ff0088" stroke-width="1" shape-rendering="crispEdges"/>
<path d="M761.5,146v8M762.5,154v15M763.5,169v8" stroke="#fff" shape-rendering="crispEdges"/>
<path d="M760.5,234v15M761.5,218v16" stroke="#fff" shape-rendering="crispEdges"/>
<line x1="761.5" y1="274.6" x2="761.5" y2="304.6" stroke="#fff" stroke-width="1" shape-rendering="crispEdges"/>
<path d="M759.5,344v8M760.5,329v15M761.5,321v8" stroke="#fff" shape-rendering="crispEdges"/>
<path d="M759.5,382v8M760.5,368v14M761.5,360v8" stroke="#fff" shape-rendering="crispEdges"/>
<path d="M757.5,420v4M758.5,413v7M759.5,405v8M760.5,398v7M761.5,394v4" stroke="#fff" shape-rendering="crispEdges"/>
<path d="M755.5,450v3M756.5,445v5M757.5,440v5M758.5,436v4M759.5,431v5M760.5,426v5M761.5,423v3" stroke="#fff" shape-rendering="crispEdges"/>
<path d="M755.5,476v3M756.5,471v5M757.5,466v5M758.5,462v4M759.5,457v5M760.5,452v5M761.5,449v3" stroke="#fff" shape-rendering="crispEdges"/>
<path d="M756.5,499v3M757.5,493v6M758.5,487v6M759.5,481v6M760.5,475v6M761.5,472v3" stroke="#fff" shape-rendering="crispEdges"/>
<path d="M756.5,520v3M757.5,514v6M758.5,508v6M759.5,502v6M760.5,496v6M761.5,493v3" stroke="#fff" shape-rendering="crispEdges"/>
<path d="M756.5,539v3M757.5,533v6M758.5,527v6M759.5,521v6M760.5,515v6M761.5,512v3" stroke="#fff" shape-rendering="crispEdges"/>
<path d="M756.5,556v3M757.5,550v6M758.5,544v6M759.5,538v6M760.5,532v6M761.5,529v3" stroke="#fff" shape-rendering="crispEdges"/>
<path d="M756.5,572v3M757.5,566v6M758.5,560v6M759.5,554v6M760.5,548v6M761.5,545v3" stroke="#fff" shape-rendering="crispEdges"/>
<path d="M756.5,587v3M757.5,581v6M758.5,575v6M759.5,569v6M760.5,563v6M761.5,560v3" stroke="#fff" shape-rendering="crispEdges"/>
<path d="M756.5,601v3M757.5,595v6M758.5,589v6M759.5,583v6M760.5,577v6M761.5,574v3" stroke="#fff" shape-rendering="crispEdges"/>
<path d="M755.5,613v3M756.5,608v5M757.5,603v5M758.5,599v4M759.5,594v5M760.5,589v5M761.5,586v3" stroke="#fff" shape-rendering="crispEdges"/>
<path d="M755.5,625v3M756.5,620v5M757.5,615v5M758.5,611v4M759.5,606v5M760.5,601v5M761.5,598v3" stroke="#fff" shape-rendering="crispEdges"/>
<path d="M755.5,637v3M756.5,632v5M757.5,627v5M758.5,623v4M759.5,618v5M760.5,613v5M761.5,610v3" stroke="#fff" shape-rendering="crispEdges"/>
<path d="M755.5,647v3M756.5,642v5M757.5,637v5M758.5,633v4M759.5,628v5M760.5,623v5M761.5,620v3" stroke="#fff" shape-rendering="crispEdges"/>
<path d="M756.5,657v3M757.5,651v6M758.5,645v6M759.5,639v6M760.5,633v6M761.5,630v3" stroke="#fff" shape-rendering="crispEdges"/>
<path d="M758.5,666v5M759.5,656v10M760.5,646v10M761.5,640v6" stroke="#fff" shape-rendering="crispEdges"/>
<path d="M759.5,671v8M760.5,656v15M761.5,648v8" stroke="#fff" shape-rendering="crispEdges"/>
<path d="M760.5,673v15M761.5,657v16" stroke="#fff" shape-rendering="crispEdges"/>
<line x1="761.5" y1="665.6" x2="761.5" y2="695.6" stroke="#fff" stroke-width="1" shape-rendering="crispEdges"/>
<path d="M761.5,669v8M762.5,677v15M763.5,692v8" stroke="#fff" shape-rendering="crispEdges"/>
<path d="M761.5,683v2M762.5,685v4M763.5,689v3M764.5,692v4M765.5,696v3M766.5,699v4M767.5,703v3M768.5,706v4M769.5,710v2" stroke="#fff" shape-rendering="crispEdges"/>
<path d="M759.5,666v8M760.5,674v15M761.5,689v8" stroke="#fff" shape-rendering="crispEdges"/>
<path d="M747.5,678v1M748.5,679v2M749.5,681v2M750.5,683v2M751.5,685v2M752.5,687v2M753.5,689v2M754.5,691v2M755.5,693v2M756.5,695v2M757.5,697v2M758.5,699v2M759.5,701v2M760.5,703v2M761.5,705v1" stroke="#fff" shape-rendering="crispEdges"/>
<path d="M747.5,687v1M748.5,688v2M749.5,690v2M750.5,692v2M751.5,694v2M752.5,696v2M753.5,698v2M754.5,700v1M755.5,701v2M756.5,703v2M757.5,705v2M758.5,707v2M759.5,709v2M760.5,711v2M761.5,713v1" stroke="#fff" shape-rendering="crispEdges"/>
<path d="M747.5,694v1M748.5,695v2M749.5,697v2M750.5,699v2M751.5,701v2M752.5,703v2M753.5,705v2M754.5,707v1M755.5,708v2M756.5,710v2M757.5,712v2M758.5,714v2M759.5,716v2M760.5,718v2M761.5,720v1" stroke="#fff" shape-rendering="crispEdges"/>
<path d="M748.5,700v2M749.5,702v2M750.5,704v2M751.5,706v2M752.5,708v2M753.5,710v2M754.5,712v2M755.5,714v2M756.5,716v2M757.5,718v2M758.5,720v2M759.5,722v2M760.5,724v2M761.5,726v2" stroke="#fff" shape-rendering="crispEdges"/>
<path d="M748.5,703v2M749.5,705v2M750.5,707v2M751.5,709v2M752.5,711v2M753.5,713v2M754.5,715v2M755.5,717v2M756.5,719v2M757.5,721v2M758.5,723v2M759.5,725v2M760.5,727v2M761.5,729v2" stroke="#fff" shape-rendering="crispEdges"/>
<path d="M748.5,706v2M749.5,708v2M750.5,710v2M751.5,712v2M752.5,714v2M753.5,716v2M754.5,718v2M755.5,720v2M756.5,722v2M757.5,724v2M758.5,726v2M759.5,728v2M760.5,730v2M761.5,732v2" stroke="#fff" shape-rendering="crispEdges"/>
<path d="M854,141.5h3M848,142.5h6M842,143.5h6M836,144.5h6M830,145.5h6M826,146.5h4" stroke="#fff" shape-rendering="crispEdges"/>
<path d="M826.5,218v1M827.5,219v1M828.5,220v2M829.5,222v1M830.5,223v1M831.5,224v2M832.5,226v1M833.5,227v1M834.5,228v1M835.5,229v2M836.5,231v1M837.5,232v1M838.5,233v1M839.5,234v2M840.5,236v1M841.5,237v1M842.5,238v2M843.5,240v1M844.5,241v1" stroke="#fff" shape-rendering="crispEdges"/>
<path d="M826.5,274v2M827.5,276v2M828.5,278v2M829.5,280v2M830.5,282v3M831.5,285v2M832.5,287v2M833.5,289v2M834.5,291v3M835.5,294v2M836.5,296v2M837.5,298v2M838.5,300v2" stroke="#fff" shape-rendering="crispEdges"/>
<path d="M826.5,321v3M827.5,324v6M828.5,330v6M829.5,336v6M830.5,342v6M831.5,348v3" stroke="#fff" shape-rendering="crispEdges"/>
<path d="M826.5,360v4M827.5,364v7M828.5,371v8M829.5,379v7M830.5,386v4" stroke="#fff" shape-rendering="crispEdges"/>
<path d="M826.5,394v31" stroke="#fff" shape-rendering="crispEdges"/>
<path d="M824.5,445v8M825.5,431v14M826.5,423v8" stroke="#fff" shape-rendering="crispEdges"/>
<line x1="826.5" y1="449.4" x2="826.5" y2="478.9" stroke="#fff" stroke-width="1" shape-rendering="crispEdges"/>
<path d="M826.5,472v15M827.5,487v15" stroke="#fff" shape-rendering="crispEdges"/>
<path d="M826.5,493v4M827.5,497v7M828.5,504v8M829.5,512v7M830.5,519v4" stroke="#fff" shape-rendering="crispEdges"/>
<path d="M826.5,512v3M827.5,515v5M828.5,520v5M829.5,525v4M830.5,529v5M831.5,534v5M832.5,539v3" stroke="#fff" shape-rendering="crispEdges"/>
<path d="M826.5,529v3M827.5,532v5M828.5,537v4M829.5,541v5M830.5,546v5M831.5,551v4M832.5,555v3" stroke="#fff" shape-rendering="crispEdges"/>
<path d="M826.5,545v3M827.5,548v5M828.5,553v5M829.5,558v4M830.5,562v5M831.5,567v5M832.5,572v3" stroke="#fff" shape-rendering="crispEdges"/>
<path d="M826.5,560v3M827.5,563v4M828.5,567v4M829.5,571v4M830.5,575v4M831.5,579v4M832.5,583v4M833.5,587v2" stroke="#fff" shape-rendering="crispEdges"/>
<path d="M826.5,574v2M827.5,576v4M828.5,580v3M829.5,583v4M830.5,587v3M831.5,590v4M832.5,594v3M833.5,597v4M834.5,601v2" stroke="#fff" shape-rendering="crispEdges"/>
<path d="M826.5,586v3M827.5,589v4M828.5,593v4M829.5,597v4M830.5,601v4M831.5,605v4M832.5,609v4M833.5,613v2" stroke="#fff" shape-rendering="crispEdges"/>
<path d="M826.5,598v3M827.5,601v4M828.5,605v4M829.5,609v4M830.5,613v4M831.5,617v4M832.5,621v4M833.5,625v2" stroke="#fff" shape-rendering="crispEdges"/>
<path d="M826.5,610v3M827.5,613v4M828.5,617v4M829.5,621v4M830.5,625v4M831.5,629v4M832.5,633v4M833.5,637v3" stroke="#fff" shape-rendering="crispEdges"/>
<path d="M826.5,620v2M827.5,622v2M828.5,624v3M829.5,627v2M830.5,629v3M831.5,632v2M832.5,634v2M833.5,636v3M834.5,639v2M835.5,641v3M836.5,644v2M837.5,646v2" stroke="#fff" shape-rendering="crispEdges"/>
<path d="M826.5,630v2M827.5,632v2M828.5,634v2M829.5,636v3M830.5,639v2M831.5,641v3M832.5,644v2M833.5,646v2M834.5,648v3M835.5,651v2M836.5,653v2M837.5,655v2" stroke="#fff" shape-rendering="crispEdges"/>
<path d="M826.5,640v1M827.5,641v2M828.5,643v1M829.5,644v1M830.5,645v2M831.5,647v1M832.5,648v1M833.5,649v2M834.5,651v1M835.5,652v1M836.5,653v2M837.5,655v1M838.5,656v1M839.5,657v2M840.5,659v1M841.5,660v1M842.5,661v2M843.5,663v1" stroke="#fff" shape-rendering="crispEdges"/>
<path d="M826,648.5h1M827,649.5h1M828,650.5h2M830,651.5h1M831,652.5h1M832,653.5h2M834,654.5h1M835,655.5h1M836,656.5h2M838,657.5h1M839,658.5h1M840,659.5h1M841,660.5h2M843,661.5h1M844,662.5h1M845,663.5h2M847,664.5h1M848,665.5h1" stroke="#fff" shape-rendering="crispEdges"/>
<path d="M826,657.5h2M828,658.5h2M830,659.5h3M833,660.5h2M835,661.5h2M837,662.5h3M840,663.5h2M842,664.5h3M845,665.5h2M847,666.5h2M849,667.5h3M852,668.5h2M854,669.5h2" stroke="#fff" shape-rendering="crispEdges"/>
<path d="M826,665.5h3M829,666.5h4M833,667.5h4M837,668.5h4M841,669.5h4M845,670.5h4M849,671.5h4M853,672.5h2" stroke="#fff" shape-rendering="crispEdges"/>
<line x1="826.5" y1="669.9" x2="855.5" y2="669.9" stroke="#fff" stroke-width="1" shape-rendering="crispEdges"/>
<path d="M853,677.5h3M848,678.5h5M843,679.5h5M839,680.5h4M834,681.5h5M829,682.5h5M826,683.5h3" stroke="#fff" shape-rendering="crispEdges"/>
<path d="M848,678.5h1M847,679.5h1M845,680.5h2M844,681.5h1M843,682.5h1M842,683.5h1M841,684.5h1M839,685.5h2M838,686.5h1M837,687.5h1M836,688.5h1M834,689.5h2M833,690.5h1M832,691.5h1M831,692.5h1M830,693.5h1M828,694.5h2M827,695.5h1M826,696.5h1" stroke="#fff" shape-rendering="crispEdges"/>
<path d="M826.5,703v3M827.5,699v4M828.5,695v4M829.5,691v4M830.5,687v4M831.5,683v4M832.5,679v4M833.5,677v2" stroke="#fff" shape-rendering="crispEdges"/>
<path d="M826.5,712v2M827.5,709v3M828.5,706v3M829.5,703v3M830.5,699v4M831.5,696v3M832.5,693v3M833.5,690v3M834.5,687v3M835.5,685v2" stroke="#fff" shape-rendering="crispEdges"/>
<path d="M826.5,719v2M827.5,716v3M828.5,713v3M829.5,711v2M830.5,708v3M831.5,705v3M832.5,702v3M833.5,699v3M834.5,697v2M835.5,694v3M836.5,692v2" stroke="#fff" shape-rendering="crispEdges"/>
<path d="M826.5,726v2M827.5,724v2M828.5,721v3M829.5,719v2M830.5,716v3M831.5,714v2M832.5,712v2M833.5,709v3M834.5,707v2M835.5,704v3M836.5,702v2M837.5,700v2" stroke="#fff" shape-rendering="crispEdges"/>
<path d="M826.5,729v2M827.5,727v2M828.5,724v3M829.5,722v2M830.5,719v3M831.5,717v2M832.5,715v2M833.5,712v3M834.5,710v2M835.5,707v3M836.5,705v2M837.5,703v2" stroke="#fff" shape-rendering="crispEdges"/>
<path d="M826.5,732v2M827.5,730v2M828.5,727v3M829.5,725v2M830.5,722v3M831.5,720v2M832.5,718v2M833.5,715v3M834.5,713v2M835.5,710v3M836.5,708v2M837.5,706v2" stroke="#fff" shape-rendering="crispEdges"/>
<rect x="729" y="827" width="15" height="8" fill="#ff0000" shape-rendering="crispEdges"/>
<rect x="729" y="847" width="15" height="8" fill="#00ffff" shape-rendering="crispEdges"/>
<rect x="729" y="867" width="15" height="8" fill="#00ff00" shape-rendering="crispEdges"/>
<rect x="729" y="887" width="15" height="8" fill="#ff0088" shape-rendering="crispEdges"/>
<rect x="729" y="907" width="15" height="8" fill="#c8c800" shape-rendering="crispEdges"/>
<rect x="729" y="927" width="15" height="8" fill="#404000" shape-rendering="crispEdges"/>
<rect x="1079" y="827" width="15" height="8" fill="#00ff00" shape-rendering="crispEdges"/>
<rect x="1079" y="847" width="15" height="8" fill="#ffff00" shape-rendering="crispEdges"/>
<rect x="1079" y="867" width="15" height="8" fill="#ff0000" shape-rendering="crispEdges"/>
<g filter="url(#thr)">
<text x="53" y="55" fill="#fff" font-size="13" text-anchor="end" >100</text>
<text x="53" y="326" fill="#fff" font-size="13" text-anchor="end" >200</text>
<text x="53" y="454" fill="#fff" font-size="13" text-anchor="end" >300</text>
<text x="53" y="534" fill="#fff" font-size="13" text-anchor="end" >400</text>
<text x="53" y="591" fill="#fff" font-size="13" text-anchor="end" >500</text>
<text x="53" y="635" fill="#fff" font-size="13" text-anchor="end" >600</text>
<text x="53" y="670" fill="#fff" font-size="13" text-anchor="end" >700</text>
<text x="53" y="699" fill="#fff" font-size="13" text-anchor="end" >800</text>
<text x="53" y="724" fill="#fff" font-size="13" text-anchor="end" >900</text>
<text x="53" y="745" fill="#fff" font-size="13" text-anchor="end" >1000</text>
<text x="172" y="713" fill="#505000" font-size="9" text-anchor="middle" font-weight="bold">1</text>
<text x="342" y="688" fill="#505000" font-size="9" text-anchor="middle" font-weight="bold">2</text>
<text x="425" y="659" fill="#505000" font-size="9" text-anchor="middle" font-weight="bold">3</text>
<text x="71" y="621.3" fill="#ffff00" >CAPE</text>
<text x="71" y="650.3" fill="#e07000" >CINH * 5</text>
<text x="629.3" y="714.3" fill="#ff00ff" >LCL</text>
<text x="670.5" y="50" fill="#fff" textLength="45.2" lengthAdjust="spacing">16393m</text>
<text x="670.5" y="321" fill="#fff" textLength="45.2" lengthAdjust="spacing">11989m</text>
<text x="670.5" y="449" fill="#fff" textLength="38.2" lengthAdjust="spacing">9377m</text>
<text x="670.5" y="529" fill="#fff" textLength="38.2" lengthAdjust="spacing">7369m</text>
<text x="670.5" y="586" fill="#fff" textLength="38.2" lengthAdjust="spacing">5722m</text>
<text x="670.5" y="630" fill="#fff" textLength="38.2" lengthAdjust="spacing">4317m</text>
<text x="670.5" y="665" fill="#fff" textLength="38.2" lengthAdjust="spacing">3089m</text>
<text x="670.5" y="694" fill="#fff" textLength="38.2" lengthAdjust="spacing">2052m</text>
<text x="670.5" y="719" fill="#fff" textLength="38.2" lengthAdjust="spacing">1040m</text>
<text x="59.3" y="767.5" fill="#fff" text-anchor="middle" >-50</text>
<text x="119.3" y="767.5" fill="#fff" text-anchor="middle" >-40</text>
<text x="179.3" y="767.5" fill="#fff" text-anchor="middle" >-30</text>
<text x="239.3" y="767.5" fill="#fff" text-anchor="middle" >-20</text>
<text x="299.3" y="767.5" fill="#fff" text-anchor="middle" >-10</text>
<text x="361.5" y="767.5" fill="#fff" text-anchor="middle" >0</text>
<text x="421.5" y="767.5" fill="#fff" text-anchor="middle" >10</text>
<text x="481.5" y="767.5" fill="#fff" text-anchor="middle" >20</text>
<text x="541.5" y="767.5" fill="#fff" text-anchor="middle" >30</text>
<text x="601.5" y="767.5" fill="#fff" text-anchor="middle" >40</text>
<text x="661.5" y="767.5" fill="#fff" text-anchor="middle" >50</text>
<text x="361.5" y="781" fill="#fff" text-anchor="middle" xml:space="preserve" >Temperature, Dewpoint  [ °C ]</text>
<text x="61.5" y="805" fill="#fff" text-anchor="middle" >0</text>
<text x="121.5" y="805" fill="#fff" text-anchor="middle" >10</text>
<text x="181.5" y="805" fill="#fff" text-anchor="middle" >20</text>
<text x="241.5" y="805" fill="#fff" text-anchor="middle" >30</text>
<text x="301.5" y="805" fill="#fff" text-anchor="middle" >40</text>
<text x="361.5" y="805" fill="#fff" text-anchor="middle" >50</text>
<text x="421.5" y="805" fill="#fff" text-anchor="middle" >60</text>
<text x="481.5" y="805" fill="#fff" text-anchor="middle" >70</text>
<text x="541.5" y="805" fill="#fff" text-anchor="middle" >80</text>
<text x="601.5" y="805" fill="#fff" text-anchor="middle" >90</text>
<text x="661.5" y="805" fill="#fff" text-anchor="middle" >100</text>
<text x="361.5" y="819" fill="#fff" text-anchor="middle" xml:space="preserve" textLength="105.4" lengthAdjust="spacing">Windspeed  [ knt ]</text>
<text x="61.5" y="842" fill="#fff" text-anchor="middle" >0</text>
<text x="121.5" y="842" fill="#fff" text-anchor="middle" >300</text>
<text x="181.5" y="842" fill="#fff" text-anchor="middle" >600</text>
<text x="241.5" y="842" fill="#fff" text-anchor="middle" >900</text>
<text x="301.5" y="842" fill="#fff" text-anchor="middle" >1200</text>
<text x="361.5" y="842" fill="#fff" text-anchor="middle" >1500</text>
<text x="421.5" y="842" fill="#fff" text-anchor="middle" >1800</text>
<text x="481.5" y="842" fill="#fff" text-anchor="middle" >2100</text>
<text x="541.5" y="842" fill="#fff" text-anchor="middle" >2400</text>
<text x="601.5" y="842" fill="#fff" text-anchor="middle" >2700</text>
<text x="661.5" y="842" fill="#fff" text-anchor="middle" >3000</text>
<text x="361.5" y="856.5" fill="#fff" text-anchor="middle" xml:space="preserve" textLength="137.2" lengthAdjust="spacing">CAPE, CINH * 5  [ J/kg ]</text>
<text x="59.3" y="879" fill="#fff" text-anchor="middle" >-100</text>
<text x="134.3" y="879" fill="#fff" text-anchor="middle" >-50</text>
<text x="211.5" y="879" fill="#fff" text-anchor="middle" >0</text>
<text x="286.5" y="879" fill="#fff" text-anchor="middle" >50</text>
<text x="361.5" y="879" fill="#fff" text-anchor="middle" >100</text>
<text x="436.5" y="879" fill="#fff" text-anchor="middle" >150</text>
<text x="511.5" y="879" fill="#fff" text-anchor="middle" >200</text>
<text x="586.5" y="879" fill="#fff" text-anchor="middle" >250</text>
<text x="661.5" y="879" fill="#fff" text-anchor="middle" >300</text>
<text x="361.5" y="892.5" fill="#fff" text-anchor="middle" xml:space="preserve" textLength="203.4" lengthAdjust="spacing">Storm Relative Helicity  [ m^2/s^2 ]</text>
<text x="61" y="28.5" fill="#fff" font-size="16" font-weight="bold" textLength="130.4" lengthAdjust="spacing">Station: Payerne</text>
<text x="217" y="28.5" fill="#fff" font-size="16" font-weight="bold" textLength="127.6" lengthAdjust="spacing">Date: 28.05.2008</text>
<text x="366" y="28.5" fill="#fff" font-size="16" font-weight="bold" >Time: 1130Z</text>
<text x="761" y="32" fill="#00ff00" font-size="14" text-anchor="middle" font-weight="bold" textLength="27" lengthAdjust="spacingAndGlyphs">OBS</text>
<text x="826.5" y="32" fill="#ff0088" font-size="14" text-anchor="middle" font-weight="bold" textLength="18" lengthAdjust="spacingAndGlyphs">SR</text>
<text x="894" y="39.7" fill="#fff" text-decoration="underline" textLength="59.5" lengthAdjust="spacing">Parameter</text>
<text x="1124" y="39.7" fill="#fff" text-anchor="end" text-decoration="underline">Value LCL</text>
<text x="1214" y="39.7" fill="#fff" text-anchor="end" text-decoration="underline">Value CCL</text>
<text x="1230" y="39.7" fill="#fff" text-decoration="underline" >Unit</text>
<text x="894" y="61.8" fill="#fff" textLength="139.8" lengthAdjust="spacing">Convective Temperature:</text>
<text x="1124" y="61.8" fill="#ffff00" text-anchor="end" >22.23</text>
<text x="1230" y="61.8" fill="#fff" >[°C]</text>
<text x="894" y="78.8" fill="#fff" textLength="91.8" lengthAdjust="spacing">Snowfall Height:</text>
<text x="1124" y="78.8" fill="#fff" text-anchor="end" >3085.09</text>
<text x="1230" y="78.8" fill="#fff" >[m]</text>
<text x="894" y="103.8" fill="#fff" text-decoration="underline" textLength="258.8" lengthAdjust="spacing">Parcels: Using 50mB mean layer LCL + CCL</text>
<text x="894" y="123.7" fill="#fff" textLength="68.1" lengthAdjust="spacing">Lifted Index:</text>
<text x="1124" y="123.7" fill="#ff0000" text-anchor="end" >-3.60</text>
<text x="1214" y="123.7" fill="#ff0000" text-anchor="end" >-3.66</text>
<text x="1230" y="123.7" fill="#fff" >[°C]</text>
<text x="894" y="140.7" fill="#fff" >CAPE:</text>
<text x="1124" y="140.7" fill="#ff0000" text-anchor="end" >999.91</text>
<text x="1214" y="140.7" fill="#ff0000" text-anchor="end" >1014.28</text>
<text x="1230" y="140.7" fill="#fff" >[J/kg]</text>
<text x="894" y="157.7" fill="#fff" textLength="33.1" lengthAdjust="spacing">CINH:</text>
<text x="1124" y="157.7" fill="#ff0000" text-anchor="end" >0.73</text>
<text x="1230" y="157.7" fill="#fff" >[J/kg]</text>
<text x="894" y="174.7" fill="#fff" textLength="66.4" lengthAdjust="spacing">CAPE Virt.:</text>
<text x="1124" y="174.7" fill="#ff0000" text-anchor="end" >1070.29</text>
<text x="1214" y="174.7" fill="#ff0000" text-anchor="end" >1042.72</text>
<text x="1230" y="174.7" fill="#fff" >[J/kg]</text>
<text x="894" y="191.7" fill="#fff" textLength="60.4" lengthAdjust="spacing">CINH Virt.:</text>
<text x="1124" y="191.7" fill="#ff0000" text-anchor="end" >0.32</text>
<text x="1230" y="191.7" fill="#fff" >[J/kg]</text>
<text x="894" y="208.7" fill="#fff" >DCAPE (LFS = 575mB):</text>
<text x="1124" y="208.7" fill="#00ff00" text-anchor="end" >224.86</text>
<text x="1230" y="208.7" fill="#fff" >[J/kg]</text>
<text x="894" y="225.7" fill="#fff" textLength="118.6" lengthAdjust="spacing">850-600 Lapse Rate:</text>
<text x="1124" y="225.7" fill="#ffff00" text-anchor="end" >17.62</text>
<text x="1230" y="225.7" fill="#fff" >[°C]</text>
<text x="894" y="242.7" fill="#fff" textLength="144.8" lengthAdjust="spacing">Fawbush-Miller Hail Size:</text>
<text x="1124" y="242.7" fill="#ffff00" text-anchor="end" >1.3 - 1.9</text>
<text x="1230" y="242.7" fill="#fff" >[cm]</text>
<text x="894" y="259.7" fill="#fff" >Sig. Hail Param. (SHIP):</text>
<text x="1124" y="259.7" fill="#ff0000" text-anchor="end" >1.54</text>
<text x="1230" y="259.7" fill="#fff" >[1]</text>
<text x="894" y="276.7" fill="#fff" >Max. Hail Size (new, new2, old):</text>
<text x="1124" y="276.7" fill="#ff0000" text-anchor="end" >4.90</text>
<text x="1230" y="276.7" fill="#fff" >[cm]</text>
<text x="1124.5" y="276.7" fill="#fff" >,</text>
<text x="1135" y="276.7" fill="#ff0000" >5.12</text>
<text x="1161.5" y="276.7" fill="#fff" >,</text>
<text x="1172" y="276.7" fill="#ff0000" >3.70</text>
<text x="894" y="296.7" fill="#fff" textLength="99.9" lengthAdjust="spacing">LCL / CCL (AGL):</text>
<text x="1124" y="296.7" fill="#ff0000" text-anchor="end" >998.51</text>
<text x="1214" y="296.7" fill="#ffff00" text-anchor="end" >1005.10</text>
<text x="1230" y="296.7" fill="#fff" >[m]</text>
<text x="894" y="313.7" fill="#fff" textLength="104.3" lengthAdjust="spacing">Convective Height:</text>
<text x="1124" y="313.7" fill="#ff0000" text-anchor="end" >9.76</text>
<text x="1214" y="313.7" fill="#ff0000" text-anchor="end" >9.77</text>
<text x="1230" y="313.7" fill="#fff" >[km]</text>
<text x="894" y="338.5" fill="#fff" text-decoration="underline" textLength="104.2" lengthAdjust="spacing">Convective Indices</text>
<text x="894" y="358.6" fill="#fff" textLength="94.2" lengthAdjust="spacing">Showalter Index:</text>
<text x="1124" y="358.6" fill="#ff0000" text-anchor="end" >-1.84</text>
<text x="1230" y="358.6" fill="#fff" >[°C]</text>
<text x="894" y="375.6" fill="#fff" textLength="149.4" lengthAdjust="spacing">Modified Thompson Index:</text>
<text x="1124" y="375.6" fill="#ff0000" text-anchor="end" >45.54</text>
<text x="1230" y="375.6" fill="#fff" >[°C]</text>
<text x="894" y="392.5" fill="#fff" >Total Totals Index:</text>
<text x="1124" y="392.5" fill="#ff0000" text-anchor="end" >52.30</text>
<text x="1230" y="392.5" fill="#fff" >[°C]</text>
<text x="894" y="409.5" fill="#fff" textLength="56.0" lengthAdjust="spacing">KO Index:</text>
<text x="1124" y="409.5" fill="#ff0000" text-anchor="end" >-12.73</text>
<text x="1230" y="409.5" fill="#fff" >[1]</text>
<text x="894" y="426.4" fill="#fff" textLength="122.2" lengthAdjust="spacing">Craven SigSvr / 1000:</text>
<text x="1124" y="426.4" fill="#ff0000" text-anchor="end" >26.51</text>
<text x="1230" y="426.4" fill="#fff" >[m^3/s^3]</text>
<text x="894" y="443.4" fill="#fff" textLength="113.0" lengthAdjust="spacing">SCP RM (new, old):</text>
<text x="1124" y="443.4" fill="#ff0000" text-anchor="end" >1.64</text>
<text x="1230" y="443.4" fill="#fff" >[1]</text>
<text x="1124.5" y="443.4" fill="#fff" >,</text>
<text x="1135" y="443.4" fill="#ff0000" >3.94</text>
<text x="894" y="460.3" fill="#fff" textLength="110.8" lengthAdjust="spacing">SCP LM (new, old):</text>
<text x="1124" y="460.3" fill="#ffff00" text-anchor="end" >1.10</text>
<text x="1230" y="460.3" fill="#fff" >[1]</text>
<text x="1124.5" y="460.3" fill="#fff" >,</text>
<text x="1135" y="460.3" fill="#ff0000" >1.62</text>
<text x="894" y="477.2" fill="#fff" textLength="87.5" lengthAdjust="spacing">STP (new, old):</text>
<text x="1124" y="477.2" fill="#ff0000" text-anchor="end" >0.30</text>
<text x="1230" y="477.2" fill="#fff" >[1]</text>
<text x="1124.5" y="477.2" fill="#fff" >,</text>
<text x="1135" y="477.2" fill="#ff0000" >0.24</text>
<text x="894" y="494.2" fill="#fff" textLength="73.9" lengthAdjust="spacing">SB STP (fix):</text>
<text x="1124" y="494.2" fill="#ff0000" text-anchor="end" >0.33</text>
<text x="1230" y="494.2" fill="#fff" >[1]</text>
<text x="894" y="511.1" fill="#fff" textLength="130.6" lengthAdjust="spacing">Derecho Comp Param:</text>
<text x="1124" y="511.1" fill="#ff0000" text-anchor="end" >0.55</text>
<text x="1230" y="511.1" fill="#fff" >[1]</text>
<text x="894" y="528.1" fill="#fff" textLength="151.0" lengthAdjust="spacing">MCS 18m/s (MMP, MSP):</text>
<text x="1124" y="528.1" fill="#ff0000" text-anchor="end" >99.35</text>
<text x="1230" y="528.1" fill="#fff" >[%]</text>
<text x="1124.5" y="528.1" fill="#fff" >,</text>
<text x="1135" y="528.1" fill="#fff" >---</text>
<text x="894" y="545.0" fill="#fff" textLength="144.4" lengthAdjust="spacing">Exp. Supercell Index CH:</text>
<text x="1124" y="545.0" fill="#ff0000" text-anchor="end" >3.56</text>
<text x="1230" y="545.0" fill="#fff" >[1]</text>
<text x="894" y="562.0" fill="#fff" >SWISS 12 Index:</text>
<text x="1124" y="562.0" fill="#ff0000" text-anchor="end" >-13.00</text>
<text x="1230" y="562.0" fill="#fff" >[1]</text>
<text x="894" y="587.5" fill="#fff" text-decoration="underline" >Wind Parameters</text>
<text x="894" y="607.5" fill="#fff" >Storm Direction:</text>
<text x="1124" y="607.5" fill="#fff" text-anchor="end" >214.26</text>
<text x="1230" y="607.5" fill="#fff" >[°]</text>
<text x="894" y="624.5" fill="#fff" >Storm Motion:</text>
<text x="1124" y="624.5" fill="#ff0000" text-anchor="end" >24.75</text>
<text x="1230" y="624.5" fill="#fff" >[knt]</text>
<text x="894" y="644.5" fill="#fff" textLength="106.9" lengthAdjust="spacing">SR Wind Sfc-2km:</text>
<text x="1124" y="644.5" fill="#ff0000" text-anchor="end" >25.39</text>
<text x="1230" y="644.5" fill="#fff" >[knt]</text>
<text x="894" y="661.5" fill="#fff" >SR Wind 4km-6km:</text>
<text x="1124" y="661.5" fill="#ff0000" text-anchor="end" >21.57</text>
<text x="1230" y="661.5" fill="#fff" >[knt]</text>
<text x="894" y="678.5" fill="#fff" textLength="119.4" lengthAdjust="spacing">SR Wind 9km-11km:</text>
<text x="1124" y="678.5" fill="#ff0000" text-anchor="end" >61.97</text>
<text x="1230" y="678.5" fill="#fff" >[knt] LP</text>
<text x="894" y="698.5" fill="#fff" textLength="120.3" lengthAdjust="spacing">Effective Shear 6000:</text>
<text x="1124" y="698.5" fill="#ff0000" text-anchor="end" >51.50</text>
<text x="1230" y="698.5" fill="#fff" >[knt]</text>
<text x="894" y="718.5" fill="#fff" textLength="146.8" lengthAdjust="spacing">Bulk Richardson Number:</text>
<text x="1124" y="718.5" fill="#ffff00" text-anchor="end" >11.00</text>
<text x="1214" y="718.5" fill="#ffff00" text-anchor="end" >11.16</text>
<text x="1230" y="718.5" fill="#fff" >[1]</text>
<text x="894" y="738.5" fill="#fff" textLength="110.8" lengthAdjust="spacing">3km Effective SRH:</text>
<text x="1124" y="738.5" fill="#ff0000" text-anchor="end" >141.92</text>
<text x="1230" y="738.5" fill="#fff" >[m^2/s^2]</text>
<text x="894" y="755.5" fill="#fff" >Max 3km SRH (Sfc-2km):</text>
<text x="1124" y="755.5" fill="#ff0000" text-anchor="end" >251.34</text>
<text x="1230" y="755.5" fill="#fff" >[m^2/s^2]</text>
<text x="894" y="772.5" fill="#fff" >Max 3km SRH Level AGL:</text>
<text x="1124" y="772.5" fill="#00ff00" text-anchor="end" >2000.00</text>
<text x="1230" y="772.5" fill="#fff" >[m]</text>
<text x="894" y="792.5" fill="#fff" >3km Energy Helicity Index:</text>
<text x="1124" y="792.5" fill="#ff0000" text-anchor="end" >0.89</text>
<text x="1214" y="792.5" fill="#ff0000" text-anchor="end" >0.90</text>
<text x="1230" y="792.5" fill="#fff" >[1]</text>
<text x="894" y="809.5" fill="#fff" textLength="139.3" lengthAdjust="spacing">3km Vorticity Gen. Pot.:</text>
<text x="1124" y="809.5" fill="#ff0000" text-anchor="end" >0.19</text>
<text x="1214" y="809.5" fill="#ff0000" text-anchor="end" >0.19</text>
<text x="1230" y="809.5" fill="#fff" >[m/s^2]</text>
<text x="753.5" y="836.0" fill="#ff0000" textLength="111.7" lengthAdjust="spacing">Temperature Profile</text>
<text x="753.5" y="856.0" fill="#00ffff" textLength="91.4" lengthAdjust="spacing">Dewpoint Profile</text>
<text x="753.5" y="876.0" fill="#00ff00" >OBS Windspeed Profile</text>
<text x="753.5" y="896.0" fill="#ff0088" textLength="126.0" lengthAdjust="spacing">SR Windspeed Profile</text>
<text x="753.5" y="916.0" fill="#c8c800" >Sfc-3km Storm Relative Helicity Profile</text>
<text x="753.5" y="936.0" fill="#404000" textLength="203.8" lengthAdjust="spacing">Effective Layer (CAPE &gt;= 100 J/kg)</text>
<text x="1103.5" y="836.0" fill="#00ff00" textLength="182.7" lengthAdjust="spacing">No / Non Severe Thunderstorms</text>
<text x="1103.5" y="856.0" fill="#ffff00" textLength="209.8" lengthAdjust="spacing">Scattered / Moderate Thunderstorms</text>
<text x="1103.5" y="876.0" fill="#ff0000" textLength="207.5" lengthAdjust="spacing">Widespread / Severe Thunderstorms</text>
</g>

</svg>
</body></html>
